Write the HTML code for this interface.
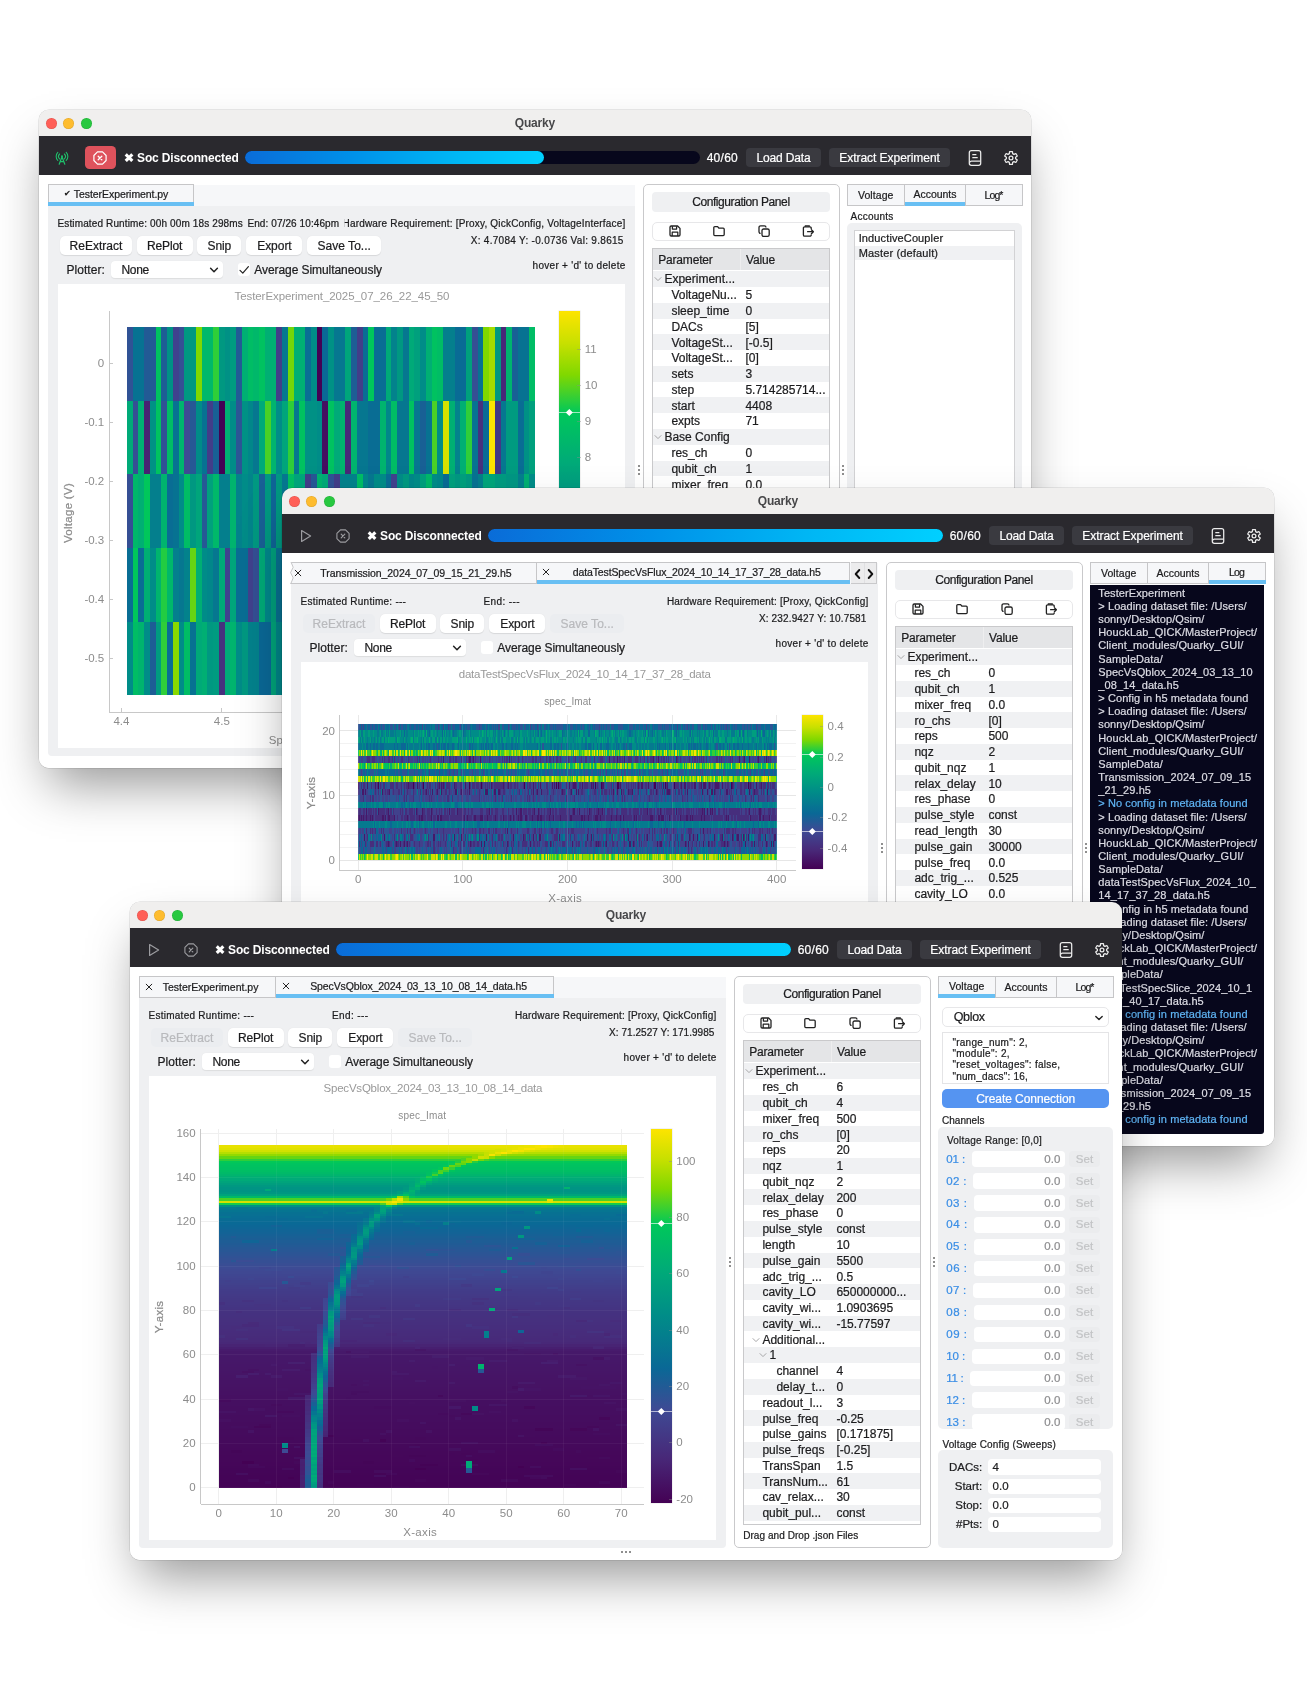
<!DOCTYPE html><html><head><meta charset="utf-8"><title>Quarky</title><style>
html,body{margin:0;padding:0;background:#fff}
body{width:1307px;height:1704px;position:relative;overflow:hidden;font-family:"Liberation Sans",sans-serif}
.win{position:absolute;border-radius:10px;overflow:hidden;will-change:transform}
.sh{position:absolute;border-radius:10px;box-shadow:0 26px 48px -10px rgba(0,0,0,.41),0 0 0 0.5px rgba(0,0,0,.16)}
.win div,.win span,.win svg{position:absolute}
.win span{white-space:nowrap;-webkit-text-stroke:0.22px currentColor}
</style></head><body><div class="sh" style="left:39px;top:110px;width:992px;height:657.6px"></div><div class="win" style="left:39px;top:110px;width:992px;height:657.6px"><div style="left:0;top:1px;width:992px;height:657.2px"><div style="left:0.00px;top:-1.00px;width:992.00px;height:25.80px;background:#f0efee"></div><div style="left:6.90px;top:6.90px;width:10.80px;height:10.80px;background:#ff5f57;border-radius:50%;box-shadow:inset 0 0 0 0.5px rgba(0,0,0,.12)"></div><div style="left:24.40px;top:6.90px;width:10.80px;height:10.80px;background:#febc2e;border-radius:50%;box-shadow:inset 0 0 0 0.5px rgba(0,0,0,.12)"></div><div style="left:41.90px;top:6.90px;width:10.80px;height:10.80px;background:#28c840;border-radius:50%;box-shadow:inset 0 0 0 0.5px rgba(0,0,0,.12)"></div><span style="left:475.72px;top:4.32px;font-size:12px;line-height:16px;color:#474749;font-weight:700;-webkit-text-stroke:0;letter-spacing:-0.159px;">Quarky</span><div style="left:0.00px;top:24.80px;width:992.00px;height:38.80px;background:#2a292e"></div><svg style="left:15.40px;top:38.60px" width="16" height="16" viewBox="0 0 16 16"><path d="M5.2 14.2 L8 6.8 L10.8 14.2 M6.3 11.6 H9.7" fill="none" stroke="#1fbf6b" stroke-width="1.2" stroke-linejoin="round" stroke-linecap="round"/><circle cx="8" cy="6.3" r="1" fill="#1fbf6b"/><path d="M5.6 4 a3.4 3.4 0 0 0 0 4.8 M10.4 4 a3.4 3.4 0 0 1 0 4.8 M3.8 2.4 a5.7 5.7 0 0 0 0 8 M12.2 2.4 a5.7 5.7 0 0 1 0 8" fill="none" stroke="#1fbf6b" stroke-width="1.1" stroke-linecap="round"/></svg><div style="left:46.10px;top:35.10px;width:30.80px;height:23.00px;background:#de525c;border-radius:4.5px"></div><svg style="left:53.30px;top:38.60px" width="16" height="16" viewBox="0 0 16 16"><path d="M14.10 10.53 L10.53 14.10 L5.47 14.10 L1.90 10.53 L1.90 5.47 L5.47 1.90 L10.53 1.90 L14.10 5.47 Z" fill="none" stroke="#fff" stroke-width="1.2" stroke-linejoin="round"/><path d="M6.2 6.2 L9.8 9.8 M9.8 6.2 L6.2 9.8" stroke="#fff" stroke-width="1.3" stroke-linecap="round"/></svg><span style="left:85.00px;top:38.72px;font-size:12px;line-height:16px;color:#fff;font-weight:700;-webkit-text-stroke:0;letter-spacing:-0.154px;">✖ Soc Disconnected</span><div style="left:206.00px;top:39.70px;width:454.70px;height:13.00px;background:#07071c;border-radius:6.5px"></div><div style="left:206.00px;top:39.70px;width:299.19px;height:13.00px;background:linear-gradient(to right,#0a6cd8,#0090e8 35%,#00b6f4 70%,#00d0ff);border-radius:6.5px"></div><span style="left:667.70px;top:38.72px;font-size:12px;line-height:16px;color:#fff;letter-spacing:0.254px;">40/60</span><div style="left:707.00px;top:37.00px;width:75.30px;height:19.00px;background:#3a3a40;border-radius:4px"></div><span style="left:717.57px;top:38.72px;font-size:12px;line-height:16px;color:#fff;letter-spacing:-0.153px;">Load Data</span><div style="left:789.80px;top:37.00px;width:121.60px;height:19.00px;background:#3a3a40;border-radius:4px"></div><span style="left:800.33px;top:38.72px;font-size:12px;line-height:16px;color:#fff;letter-spacing:-0.048px;">Extract Experiment</span><svg style="left:928.00px;top:37.60px" width="16" height="18" viewBox="0 0 16 18"><rect x="2.3" y="1.7" width="11.4" height="14.6" rx="2.1" fill="none" stroke="#ececec" stroke-width="1.25"/><path d="M2.6 13.8 a1.9 1.9 0 0 1 1.9 -1.7 H13.6" fill="none" stroke="#ececec" stroke-width="1.2"/><path d="M5.3 5.7 H9.4 M5.3 8.5 H10.7" stroke="#ececec" stroke-width="1.25"/></svg><svg style="left:964.00px;top:38.50px" width="16" height="16" viewBox="0 0 16 16"><path d="M6.34 3.60 L6.56 1.56 L9.44 1.56 L9.66 3.60 L10.98 4.37 L12.86 3.53 L14.30 6.03 L12.64 7.23 L12.64 8.77 L14.30 9.97 L12.86 12.47 L10.98 11.63 L9.66 12.40 L9.44 14.44 L6.56 14.44 L6.34 12.40 L5.02 11.63 L3.14 12.47 L1.70 9.97 L3.36 8.77 L3.36 7.23 L1.70 6.03 L3.14 3.53 L5.02 4.37 Z" fill="none" stroke="#ececec" stroke-width="1.25" stroke-linejoin="round"/><circle cx="8" cy="8" r="1.9" fill="none" stroke="#ececec" stroke-width="1.25"/></svg><div style="left:0.00px;top:63.60px;width:992.00px;height:594.20px;background:#fff"></div><div style="left:8.70px;top:73.50px;width:587.60px;height:571.00px;background:#eff0f2;border-radius:0 0 4px 4px"></div><div style="left:8.70px;top:73.50px;width:587.60px;height:21.50px;background:#f6f7f9"></div><div style="left:8.80px;top:73.20px;width:146.70px;height:21.70px;background:#f6f7f9;border:1px solid #c6c6c8;box-sizing:border-box"></div><div style="left:9.30px;top:91.20px;width:146.20px;height:3.70px;background:#68bff3"></div><span style="left:25.00px;top:78.08px;font-size:8px;line-height:10px;color:#111;">✔</span><span style="left:34.80px;top:76.11px;font-size:10.5px;line-height:14px;color:#1c1c1e;letter-spacing:-0.064px;">TesterExperiment.py</span><span style="left:18.50px;top:105.80px;font-size:10px;line-height:13px;color:#1c1c1e;letter-spacing:0.132px;">Estimated Runtime: 00h 00m 18s 298ms</span><span style="left:208.40px;top:105.80px;font-size:10px;line-height:13px;color:#1c1c1e;letter-spacing:0.096px;">End: 07/26 10:46pm</span><span style="left:303.49px;top:105.80px;font-size:10px;line-height:13px;color:#1c1c1e;letter-spacing:0.193px;clip-path:inset(0 0 0 2.2px);">Hardware Requirement: [Proxy, QickConfig, VoltageInterface]</span><div style="left:20.60px;top:125.40px;width:72.70px;height:18.40px;background:#fff;border-radius:5px;box-shadow:0 0.5px 1px rgba(0,0,0,.10);"></div><span style="left:30.47px;top:126.72px;font-size:12px;line-height:16px;color:#1c1c1e;letter-spacing:0.035px;">ReExtract</span><div style="left:97.70px;top:125.40px;width:55.90px;height:18.40px;background:#fff;border-radius:5px;box-shadow:0 0.5px 1px rgba(0,0,0,.10);"></div><span style="left:108.07px;top:126.72px;font-size:12px;line-height:16px;color:#1c1c1e;letter-spacing:-0.170px;">RePlot</span><div style="left:158.20px;top:125.40px;width:44.30px;height:18.40px;background:#fff;border-radius:5px;box-shadow:0 0.5px 1px rgba(0,0,0,.10);"></div><span style="left:168.54px;top:126.72px;font-size:12px;line-height:16px;color:#1c1c1e;letter-spacing:-0.130px;">Snip</span><div style="left:207.40px;top:125.40px;width:56.10px;height:18.40px;background:#fff;border-radius:5px;box-shadow:0 0.5px 1px rgba(0,0,0,.10);"></div><span style="left:218.18px;top:126.72px;font-size:12px;line-height:16px;color:#1c1c1e;letter-spacing:-0.030px;">Export</span><div style="left:267.90px;top:125.40px;width:74.60px;height:18.40px;background:#fff;border-radius:5px;box-shadow:0 0.5px 1px rgba(0,0,0,.10);"></div><span style="left:278.47px;top:126.72px;font-size:12px;line-height:16px;color:#1c1c1e;letter-spacing:0.035px;">Save To...</span><span style="left:431.69px;top:123.40px;font-size:10px;line-height:13px;color:#1c1c1e;letter-spacing:0.293px;">X: 4.7084 Y: -0.0736 Val: 9.8615</span><span style="left:27.50px;top:150.82px;font-size:12px;line-height:16px;color:#1c1c1e;letter-spacing:0.048px;">Plotter:</span><div style="left:72.00px;top:150.00px;width:112.20px;height:16.60px;background:#fff;border-radius:4px;box-shadow:0 0.5px 1px rgba(0,0,0,.08)"></div><span style="left:82.50px;top:150.82px;font-size:12px;line-height:16px;color:#1c1c1e;letter-spacing:-0.297px;">None</span><svg style="left:168.50px;top:154.00px" width="12" height="10" viewBox="0 0 12 10"><path d="M2.6 3.3 L6 6.7 L9.4 3.3" fill="none" stroke="#222" stroke-width="1.5" stroke-linecap="round" stroke-linejoin="round"/></svg><div style="left:198.70px;top:152.00px;width:12.80px;height:13.00px;background:#fff;border-radius:3px"></div><svg style="left:199.30px;top:152.50px" width="12" height="12" viewBox="0 0 12 12"><path d="M2 6.4 L4.8 9.2 L10.4 2.6" fill="none" stroke="#222" stroke-width="1.2" stroke-linecap="round" stroke-linejoin="round"/></svg><span style="left:215.30px;top:150.82px;font-size:12px;line-height:16px;color:#1c1c1e;letter-spacing:-0.072px;">Average Simultaneously</span><span style="left:493.59px;top:148.10px;font-size:10px;line-height:13px;color:#1c1c1e;letter-spacing:0.289px;">hover + 'd' to delete</span><div style="left:18.90px;top:172.80px;width:567.60px;height:464.40px;background:#fff"></div><span style="left:195.47px;top:178.42px;font-size:11.5px;line-height:15px;color:#999;letter-spacing:-0.067px;-webkit-text-stroke:0;">TesterExperiment_2025_07_26_22_45_50</span><svg style="left:88.2px;top:216.3px" width="408.0" height="368.2" shape-rendering="crispEdges"><rect x="0.00" y="0.00" width="5.90" height="73.79" fill="#305295"/><rect x="5.75" y="0.00" width="5.90" height="73.79" fill="#077292"/><rect x="11.49" y="0.00" width="5.90" height="73.79" fill="#077292"/><rect x="17.24" y="0.00" width="5.90" height="73.79" fill="#225a95"/><rect x="22.99" y="0.00" width="5.90" height="73.79" fill="#225a95"/><rect x="28.73" y="0.00" width="5.90" height="73.79" fill="#00c260"/><rect x="34.48" y="0.00" width="5.90" height="73.79" fill="#1d5d95"/><rect x="40.23" y="0.00" width="5.90" height="73.79" fill="#009185"/><rect x="45.97" y="0.00" width="5.90" height="73.79" fill="#40428e"/><rect x="51.72" y="0.00" width="5.90" height="73.79" fill="#354f94"/><rect x="57.46" y="0.00" width="5.90" height="73.79" fill="#009881"/><rect x="63.21" y="0.00" width="5.90" height="73.79" fill="#009881"/><rect x="68.96" y="0.00" width="5.90" height="73.79" fill="#80d800"/><rect x="74.70" y="0.00" width="5.90" height="73.79" fill="#00b86a"/><rect x="80.45" y="0.00" width="5.90" height="73.79" fill="#00b86a"/><rect x="86.20" y="0.00" width="5.90" height="73.79" fill="#2fce39"/><rect x="91.94" y="0.00" width="5.90" height="73.79" fill="#009881"/><rect x="97.69" y="0.00" width="5.90" height="73.79" fill="#009185"/><rect x="103.44" y="0.00" width="5.90" height="73.79" fill="#009b80"/><rect x="109.18" y="0.00" width="5.90" height="73.79" fill="#225a95"/><rect x="114.93" y="0.00" width="5.90" height="73.79" fill="#00af73"/><rect x="120.68" y="0.00" width="5.90" height="73.79" fill="#00bd65"/><rect x="126.42" y="0.00" width="5.90" height="73.79" fill="#00b86a"/><rect x="132.17" y="0.00" width="5.90" height="73.79" fill="#00c260"/><rect x="137.92" y="0.00" width="5.90" height="73.79" fill="#00af73"/><rect x="143.66" y="0.00" width="5.90" height="73.79" fill="#00af73"/><rect x="149.41" y="0.00" width="5.90" height="73.79" fill="#423d89"/><rect x="155.15" y="0.00" width="5.90" height="73.79" fill="#067790"/><rect x="160.90" y="0.00" width="5.90" height="73.79" fill="#73d609"/><rect x="166.65" y="0.00" width="5.90" height="73.79" fill="#00af73"/><rect x="172.39" y="0.00" width="5.90" height="73.79" fill="#00af73"/><rect x="178.14" y="0.00" width="5.90" height="73.79" fill="#096d94"/><rect x="183.89" y="0.00" width="5.90" height="73.79" fill="#008c88"/><rect x="189.63" y="0.00" width="5.90" height="73.79" fill="#440154"/><rect x="195.38" y="0.00" width="5.90" height="73.79" fill="#0a6896"/><rect x="201.13" y="0.00" width="5.90" height="73.79" fill="#009185"/><rect x="206.87" y="0.00" width="5.90" height="73.79" fill="#067790"/><rect x="212.62" y="0.00" width="5.90" height="73.79" fill="#067790"/><rect x="218.37" y="0.00" width="5.90" height="73.79" fill="#00a57b"/><rect x="224.11" y="0.00" width="5.90" height="73.79" fill="#1d5d95"/><rect x="229.86" y="0.00" width="5.90" height="73.79" fill="#423d89"/><rect x="235.61" y="0.00" width="5.90" height="73.79" fill="#096d94"/><rect x="241.35" y="0.00" width="5.90" height="73.79" fill="#00c75b"/><rect x="247.10" y="0.00" width="5.90" height="73.79" fill="#096d94"/><rect x="252.85" y="0.00" width="5.90" height="73.79" fill="#096d94"/><rect x="258.59" y="0.00" width="5.90" height="73.79" fill="#00aa78"/><rect x="264.34" y="0.00" width="5.90" height="73.79" fill="#03828c"/><rect x="270.08" y="0.00" width="5.90" height="73.79" fill="#009881"/><rect x="275.83" y="0.00" width="5.90" height="73.79" fill="#067790"/><rect x="281.58" y="0.00" width="5.90" height="73.79" fill="#00aa78"/><rect x="287.32" y="0.00" width="5.90" height="73.79" fill="#00a07d"/><rect x="293.07" y="0.00" width="5.90" height="73.79" fill="#008c88"/><rect x="298.82" y="0.00" width="5.90" height="73.79" fill="#00af73"/><rect x="304.56" y="0.00" width="5.90" height="73.79" fill="#00c260"/><rect x="310.31" y="0.00" width="5.90" height="73.79" fill="#00bd65"/><rect x="316.06" y="0.00" width="5.90" height="73.79" fill="#047f8d"/><rect x="321.80" y="0.00" width="5.90" height="73.79" fill="#047f8d"/><rect x="327.55" y="0.00" width="5.90" height="73.79" fill="#096b95"/><rect x="333.30" y="0.00" width="5.90" height="73.79" fill="#096b95"/><rect x="339.04" y="0.00" width="5.90" height="73.79" fill="#00a07d"/><rect x="344.79" y="0.00" width="5.90" height="73.79" fill="#354f94"/><rect x="350.54" y="0.00" width="5.90" height="73.79" fill="#077292"/><rect x="356.28" y="0.00" width="5.90" height="73.79" fill="#80d800"/><rect x="362.03" y="0.00" width="5.90" height="73.79" fill="#a4dc00"/><rect x="367.77" y="0.00" width="5.90" height="73.79" fill="#009881"/><rect x="373.52" y="0.00" width="5.90" height="73.79" fill="#482878"/><rect x="379.27" y="0.00" width="5.90" height="73.79" fill="#00b46e"/><rect x="385.01" y="0.00" width="5.90" height="73.79" fill="#186095"/><rect x="390.76" y="0.00" width="5.90" height="73.79" fill="#077292"/><rect x="396.51" y="0.00" width="5.90" height="73.79" fill="#077292"/><rect x="402.25" y="0.00" width="5.90" height="73.79" fill="#00bd65"/><rect x="0.00" y="73.64" width="5.90" height="73.79" fill="#00aa78"/><rect x="5.75" y="73.64" width="5.90" height="73.79" fill="#354f94"/><rect x="11.49" y="73.64" width="5.90" height="73.79" fill="#00af73"/><rect x="17.24" y="73.64" width="5.90" height="73.79" fill="#472272"/><rect x="22.99" y="73.64" width="5.90" height="73.79" fill="#009185"/><rect x="28.73" y="73.64" width="5.90" height="73.79" fill="#00c260"/><rect x="34.48" y="73.64" width="5.90" height="73.79" fill="#305295"/><rect x="40.23" y="73.64" width="5.90" height="73.79" fill="#00bd65"/><rect x="45.97" y="73.64" width="5.90" height="73.79" fill="#077292"/><rect x="51.72" y="73.64" width="5.90" height="73.79" fill="#00b46e"/><rect x="57.46" y="73.64" width="5.90" height="73.79" fill="#3e4a94"/><rect x="63.21" y="73.64" width="5.90" height="73.79" fill="#265895"/><rect x="68.96" y="73.64" width="5.90" height="73.79" fill="#008c88"/><rect x="74.70" y="73.64" width="5.90" height="73.79" fill="#077292"/><rect x="80.45" y="73.64" width="5.90" height="73.79" fill="#423d89"/><rect x="86.20" y="73.64" width="5.90" height="73.79" fill="#186095"/><rect x="91.94" y="73.64" width="5.90" height="73.79" fill="#440154"/><rect x="97.69" y="73.64" width="5.90" height="73.79" fill="#00af73"/><rect x="103.44" y="73.64" width="5.90" height="73.79" fill="#008c88"/><rect x="109.18" y="73.64" width="5.90" height="73.79" fill="#2b5595"/><rect x="114.93" y="73.64" width="5.90" height="73.79" fill="#009185"/><rect x="120.68" y="73.64" width="5.90" height="73.79" fill="#01878a"/><rect x="126.42" y="73.64" width="5.90" height="73.79" fill="#067790"/><rect x="132.17" y="73.64" width="5.90" height="73.79" fill="#00aa78"/><rect x="137.92" y="73.64" width="5.90" height="73.79" fill="#4ad126"/><rect x="143.66" y="73.64" width="5.90" height="73.79" fill="#00b46e"/><rect x="149.41" y="73.64" width="5.90" height="73.79" fill="#008c88"/><rect x="155.15" y="73.64" width="5.90" height="73.79" fill="#00a57b"/><rect x="160.90" y="73.64" width="5.90" height="73.79" fill="#2fce39"/><rect x="166.65" y="73.64" width="5.90" height="73.79" fill="#067790"/><rect x="172.39" y="73.64" width="5.90" height="73.79" fill="#00c260"/><rect x="178.14" y="73.64" width="5.90" height="73.79" fill="#009185"/><rect x="183.89" y="73.64" width="5.90" height="73.79" fill="#009185"/><rect x="189.63" y="73.64" width="5.90" height="73.79" fill="#008c88"/><rect x="195.38" y="73.64" width="5.90" height="73.79" fill="#450e60"/><rect x="201.13" y="73.64" width="5.90" height="73.79" fill="#00c260"/><rect x="206.87" y="73.64" width="5.90" height="73.79" fill="#00aa78"/><rect x="212.62" y="73.64" width="5.90" height="73.79" fill="#00b46e"/><rect x="218.37" y="73.64" width="5.90" height="73.79" fill="#482878"/><rect x="224.11" y="73.64" width="5.90" height="73.79" fill="#00b46e"/><rect x="229.86" y="73.64" width="5.90" height="73.79" fill="#067790"/><rect x="235.61" y="73.64" width="5.90" height="73.79" fill="#067790"/><rect x="241.35" y="73.64" width="5.90" height="73.79" fill="#096d94"/><rect x="247.10" y="73.64" width="5.90" height="73.79" fill="#096d94"/><rect x="252.85" y="73.64" width="5.90" height="73.79" fill="#00b46e"/><rect x="258.59" y="73.64" width="5.90" height="73.79" fill="#01878a"/><rect x="264.34" y="73.64" width="5.90" height="73.79" fill="#00bd65"/><rect x="270.08" y="73.64" width="5.90" height="73.79" fill="#067790"/><rect x="275.83" y="73.64" width="5.90" height="73.79" fill="#067790"/><rect x="281.58" y="73.64" width="5.90" height="73.79" fill="#00c260"/><rect x="287.32" y="73.64" width="5.90" height="73.79" fill="#067790"/><rect x="293.07" y="73.64" width="5.90" height="73.79" fill="#186095"/><rect x="298.82" y="73.64" width="5.90" height="73.79" fill="#077292"/><rect x="304.56" y="73.64" width="5.90" height="73.79" fill="#4ad126"/><rect x="310.31" y="73.64" width="5.90" height="73.79" fill="#008c88"/><rect x="316.06" y="73.64" width="5.90" height="73.79" fill="#d5e100"/><rect x="321.80" y="73.64" width="5.90" height="73.79" fill="#00af73"/><rect x="327.55" y="73.64" width="5.90" height="73.79" fill="#03828c"/><rect x="333.30" y="73.64" width="5.90" height="73.79" fill="#00af73"/><rect x="339.04" y="73.64" width="5.90" height="73.79" fill="#2fce39"/><rect x="344.79" y="73.64" width="5.90" height="73.79" fill="#077292"/><rect x="350.54" y="73.64" width="5.90" height="73.79" fill="#46307e"/><rect x="356.28" y="73.64" width="5.90" height="73.79" fill="#096b95"/><rect x="362.03" y="73.64" width="5.90" height="73.79" fill="#fde400"/><rect x="367.77" y="73.64" width="5.90" height="73.79" fill="#433885"/><rect x="373.52" y="73.64" width="5.90" height="73.79" fill="#067790"/><rect x="379.27" y="73.64" width="5.90" height="73.79" fill="#009b80"/><rect x="385.01" y="73.64" width="5.90" height="73.79" fill="#009b80"/><rect x="390.76" y="73.64" width="5.90" height="73.79" fill="#096d94"/><rect x="396.51" y="73.64" width="5.90" height="73.79" fill="#009185"/><rect x="402.25" y="73.64" width="5.90" height="73.79" fill="#00a07d"/><rect x="0.00" y="147.28" width="5.90" height="73.79" fill="#354f94"/><rect x="5.75" y="147.28" width="5.90" height="73.79" fill="#00b86a"/><rect x="11.49" y="147.28" width="5.90" height="73.79" fill="#00af73"/><rect x="17.24" y="147.28" width="5.90" height="73.79" fill="#00c75b"/><rect x="22.99" y="147.28" width="5.90" height="73.79" fill="#047f8d"/><rect x="28.73" y="147.28" width="5.90" height="73.79" fill="#047f8d"/><rect x="34.48" y="147.28" width="5.90" height="73.79" fill="#00b46e"/><rect x="40.23" y="147.28" width="5.90" height="73.79" fill="#096d94"/><rect x="45.97" y="147.28" width="5.90" height="73.79" fill="#077292"/><rect x="51.72" y="147.28" width="5.90" height="73.79" fill="#008c88"/><rect x="57.46" y="147.28" width="5.90" height="73.79" fill="#00bd65"/><rect x="63.21" y="147.28" width="5.90" height="73.79" fill="#009881"/><rect x="68.96" y="147.28" width="5.90" height="73.79" fill="#00a57b"/><rect x="74.70" y="147.28" width="5.90" height="73.79" fill="#265895"/><rect x="80.45" y="147.28" width="5.90" height="73.79" fill="#00a07d"/><rect x="86.20" y="147.28" width="5.90" height="73.79" fill="#00b86a"/><rect x="91.94" y="147.28" width="5.90" height="73.79" fill="#047f8d"/><rect x="97.69" y="147.28" width="5.90" height="73.79" fill="#047f8d"/><rect x="103.44" y="147.28" width="5.90" height="73.79" fill="#00b46e"/><rect x="109.18" y="147.28" width="5.90" height="73.79" fill="#03828c"/><rect x="114.93" y="147.28" width="5.90" height="73.79" fill="#008c88"/><rect x="120.68" y="147.28" width="5.90" height="73.79" fill="#02848b"/><rect x="126.42" y="147.28" width="5.90" height="73.79" fill="#009881"/><rect x="132.17" y="147.28" width="5.90" height="73.79" fill="#186095"/><rect x="137.92" y="147.28" width="5.90" height="73.79" fill="#009881"/><rect x="143.66" y="147.28" width="5.90" height="73.79" fill="#0f6596"/><rect x="149.41" y="147.28" width="5.90" height="73.79" fill="#009881"/><rect x="155.15" y="147.28" width="5.90" height="73.79" fill="#067790"/><rect x="160.90" y="147.28" width="5.90" height="73.79" fill="#00bd65"/><rect x="166.65" y="147.28" width="5.90" height="73.79" fill="#00a57b"/><rect x="172.39" y="147.28" width="5.90" height="73.79" fill="#00a57b"/><rect x="178.14" y="147.28" width="5.90" height="73.79" fill="#423d89"/><rect x="183.89" y="147.28" width="5.90" height="73.79" fill="#265895"/><rect x="189.63" y="147.28" width="5.90" height="73.79" fill="#00b46e"/><rect x="195.38" y="147.28" width="5.90" height="73.79" fill="#00aa78"/><rect x="201.13" y="147.28" width="5.90" height="73.79" fill="#305295"/><rect x="206.87" y="147.28" width="5.90" height="73.79" fill="#423d89"/><rect x="212.62" y="147.28" width="5.90" height="73.79" fill="#03828c"/><rect x="218.37" y="147.28" width="5.90" height="73.79" fill="#03828c"/><rect x="224.11" y="147.28" width="5.90" height="73.79" fill="#03828c"/><rect x="229.86" y="147.28" width="5.90" height="73.79" fill="#00bd65"/><rect x="235.61" y="147.28" width="5.90" height="73.79" fill="#01878a"/><rect x="241.35" y="147.28" width="5.90" height="73.79" fill="#067790"/><rect x="247.10" y="147.28" width="5.90" height="73.79" fill="#008c88"/><rect x="252.85" y="147.28" width="5.90" height="73.79" fill="#008c88"/><rect x="258.59" y="147.28" width="5.90" height="73.79" fill="#096d94"/><rect x="264.34" y="147.28" width="5.90" height="73.79" fill="#40428e"/><rect x="270.08" y="147.28" width="5.90" height="73.79" fill="#008c88"/><rect x="275.83" y="147.28" width="5.90" height="73.79" fill="#009881"/><rect x="281.58" y="147.28" width="5.90" height="73.79" fill="#01878a"/><rect x="287.32" y="147.28" width="5.90" height="73.79" fill="#008c88"/><rect x="293.07" y="147.28" width="5.90" height="73.79" fill="#00a07d"/><rect x="298.82" y="147.28" width="5.90" height="73.79" fill="#00b86a"/><rect x="304.56" y="147.28" width="5.90" height="73.79" fill="#008c88"/><rect x="310.31" y="147.28" width="5.90" height="73.79" fill="#01878a"/><rect x="316.06" y="147.28" width="5.90" height="73.79" fill="#096b95"/><rect x="321.80" y="147.28" width="5.90" height="73.79" fill="#00a07d"/><rect x="327.55" y="147.28" width="5.90" height="73.79" fill="#009881"/><rect x="333.30" y="147.28" width="5.90" height="73.79" fill="#00a07d"/><rect x="339.04" y="147.28" width="5.90" height="73.79" fill="#009881"/><rect x="344.79" y="147.28" width="5.90" height="73.79" fill="#077292"/><rect x="350.54" y="147.28" width="5.90" height="73.79" fill="#047f8d"/><rect x="356.28" y="147.28" width="5.90" height="73.79" fill="#00a57b"/><rect x="362.03" y="147.28" width="5.90" height="73.79" fill="#00a57b"/><rect x="367.77" y="147.28" width="5.90" height="73.79" fill="#009b80"/><rect x="373.52" y="147.28" width="5.90" height="73.79" fill="#009b80"/><rect x="379.27" y="147.28" width="5.90" height="73.79" fill="#009683"/><rect x="385.01" y="147.28" width="5.90" height="73.79" fill="#009683"/><rect x="390.76" y="147.28" width="5.90" height="73.79" fill="#047f8d"/><rect x="396.51" y="147.28" width="5.90" height="73.79" fill="#00af73"/><rect x="402.25" y="147.28" width="5.90" height="73.79" fill="#008c88"/><rect x="0.00" y="220.92" width="5.90" height="73.79" fill="#096d94"/><rect x="5.75" y="220.92" width="5.90" height="73.79" fill="#00c75b"/><rect x="11.49" y="220.92" width="5.90" height="73.79" fill="#096d94"/><rect x="17.24" y="220.92" width="5.90" height="73.79" fill="#00af73"/><rect x="22.99" y="220.92" width="5.90" height="73.79" fill="#008c88"/><rect x="28.73" y="220.92" width="5.90" height="73.79" fill="#00b46e"/><rect x="34.48" y="220.92" width="5.90" height="73.79" fill="#22cc42"/><rect x="40.23" y="220.92" width="5.90" height="73.79" fill="#00b86a"/><rect x="45.97" y="220.92" width="5.90" height="73.79" fill="#047f8d"/><rect x="51.72" y="220.92" width="5.90" height="73.79" fill="#067790"/><rect x="57.46" y="220.92" width="5.90" height="73.79" fill="#03828c"/><rect x="63.21" y="220.92" width="5.90" height="73.79" fill="#65d513"/><rect x="68.96" y="220.92" width="5.90" height="73.79" fill="#00af73"/><rect x="74.70" y="220.92" width="5.90" height="73.79" fill="#008c88"/><rect x="80.45" y="220.92" width="5.90" height="73.79" fill="#01878a"/><rect x="86.20" y="220.92" width="5.90" height="73.79" fill="#067790"/><rect x="91.94" y="220.92" width="5.90" height="73.79" fill="#00aa78"/><rect x="97.69" y="220.92" width="5.90" height="73.79" fill="#40428e"/><rect x="103.44" y="220.92" width="5.90" height="73.79" fill="#00a57b"/><rect x="109.18" y="220.92" width="5.90" height="73.79" fill="#096d94"/><rect x="114.93" y="220.92" width="5.90" height="73.79" fill="#096d94"/><rect x="120.68" y="220.92" width="5.90" height="73.79" fill="#40428e"/><rect x="126.42" y="220.92" width="5.90" height="73.79" fill="#354f94"/><rect x="132.17" y="220.92" width="5.90" height="73.79" fill="#00aa78"/><rect x="137.92" y="220.92" width="5.90" height="73.79" fill="#01878a"/><rect x="143.66" y="220.92" width="5.90" height="73.79" fill="#00a07d"/><rect x="149.41" y="220.92" width="5.90" height="73.79" fill="#077292"/><rect x="155.15" y="220.92" width="5.90" height="73.79" fill="#00b86a"/><rect x="160.90" y="220.92" width="5.90" height="73.79" fill="#265895"/><rect x="166.65" y="220.92" width="5.90" height="73.79" fill="#00b86a"/><rect x="172.39" y="220.92" width="5.90" height="73.79" fill="#00b86a"/><rect x="178.14" y="220.92" width="5.90" height="73.79" fill="#265895"/><rect x="183.89" y="220.92" width="5.90" height="73.79" fill="#00bd65"/><rect x="189.63" y="220.92" width="5.90" height="73.79" fill="#008c88"/><rect x="195.38" y="220.92" width="5.90" height="73.79" fill="#047f8d"/><rect x="201.13" y="220.92" width="5.90" height="73.79" fill="#265895"/><rect x="206.87" y="220.92" width="5.90" height="73.79" fill="#00b86a"/><rect x="212.62" y="220.92" width="5.90" height="73.79" fill="#00bd65"/><rect x="218.37" y="220.92" width="5.90" height="73.79" fill="#047f8d"/><rect x="224.11" y="220.92" width="5.90" height="73.79" fill="#067790"/><rect x="229.86" y="220.92" width="5.90" height="73.79" fill="#00b86a"/><rect x="235.61" y="220.92" width="5.90" height="73.79" fill="#009881"/><rect x="241.35" y="220.92" width="5.90" height="73.79" fill="#047f8d"/><rect x="247.10" y="220.92" width="5.90" height="73.79" fill="#067790"/><rect x="252.85" y="220.92" width="5.90" height="73.79" fill="#265895"/><rect x="258.59" y="220.92" width="5.90" height="73.79" fill="#096d94"/><rect x="264.34" y="220.92" width="5.90" height="73.79" fill="#00bd65"/><rect x="270.08" y="220.92" width="5.90" height="73.79" fill="#00af73"/><rect x="275.83" y="220.92" width="5.90" height="73.79" fill="#00b86a"/><rect x="281.58" y="220.92" width="5.90" height="73.79" fill="#00bd65"/><rect x="287.32" y="220.92" width="5.90" height="73.79" fill="#047f8d"/><rect x="293.07" y="220.92" width="5.90" height="73.79" fill="#00bd65"/><rect x="298.82" y="220.92" width="5.90" height="73.79" fill="#096d94"/><rect x="304.56" y="220.92" width="5.90" height="73.79" fill="#265895"/><rect x="310.31" y="220.92" width="5.90" height="73.79" fill="#067790"/><rect x="316.06" y="220.92" width="5.90" height="73.79" fill="#096d94"/><rect x="321.80" y="220.92" width="5.90" height="73.79" fill="#096d94"/><rect x="327.55" y="220.92" width="5.90" height="73.79" fill="#008c88"/><rect x="333.30" y="220.92" width="5.90" height="73.79" fill="#008c88"/><rect x="339.04" y="220.92" width="5.90" height="73.79" fill="#00bd65"/><rect x="344.79" y="220.92" width="5.90" height="73.79" fill="#096d94"/><rect x="350.54" y="220.92" width="5.90" height="73.79" fill="#00b86a"/><rect x="356.28" y="220.92" width="5.90" height="73.79" fill="#00a57b"/><rect x="362.03" y="220.92" width="5.90" height="73.79" fill="#00b86a"/><rect x="367.77" y="220.92" width="5.90" height="73.79" fill="#00bd65"/><rect x="373.52" y="220.92" width="5.90" height="73.79" fill="#008c88"/><rect x="379.27" y="220.92" width="5.90" height="73.79" fill="#265895"/><rect x="385.01" y="220.92" width="5.90" height="73.79" fill="#008c88"/><rect x="390.76" y="220.92" width="5.90" height="73.79" fill="#009881"/><rect x="396.51" y="220.92" width="5.90" height="73.79" fill="#00b86a"/><rect x="402.25" y="220.92" width="5.90" height="73.79" fill="#096d94"/><rect x="0.00" y="294.56" width="5.90" height="73.79" fill="#008c88"/><rect x="5.75" y="294.56" width="5.90" height="73.79" fill="#00bd65"/><rect x="11.49" y="294.56" width="5.90" height="73.79" fill="#00b46e"/><rect x="17.24" y="294.56" width="5.90" height="73.79" fill="#008c88"/><rect x="22.99" y="294.56" width="5.90" height="73.79" fill="#1d5d95"/><rect x="28.73" y="294.56" width="5.90" height="73.79" fill="#009b80"/><rect x="34.48" y="294.56" width="5.90" height="73.79" fill="#2fce39"/><rect x="40.23" y="294.56" width="5.90" height="73.79" fill="#096d94"/><rect x="45.97" y="294.56" width="5.90" height="73.79" fill="#89d900"/><rect x="51.72" y="294.56" width="5.90" height="73.79" fill="#008c88"/><rect x="57.46" y="294.56" width="5.90" height="73.79" fill="#00bd65"/><rect x="63.21" y="294.56" width="5.90" height="73.79" fill="#077292"/><rect x="68.96" y="294.56" width="5.90" height="73.79" fill="#00aa78"/><rect x="74.70" y="294.56" width="5.90" height="73.79" fill="#00af73"/><rect x="80.45" y="294.56" width="5.90" height="73.79" fill="#009881"/><rect x="86.20" y="294.56" width="5.90" height="73.79" fill="#009b80"/><rect x="91.94" y="294.56" width="5.90" height="73.79" fill="#46307e"/><rect x="97.69" y="294.56" width="5.90" height="73.79" fill="#00aa78"/><rect x="103.44" y="294.56" width="5.90" height="73.79" fill="#00b46e"/><rect x="109.18" y="294.56" width="5.90" height="73.79" fill="#008c88"/><rect x="114.93" y="294.56" width="5.90" height="73.79" fill="#009881"/><rect x="120.68" y="294.56" width="5.90" height="73.79" fill="#03828c"/><rect x="126.42" y="294.56" width="5.90" height="73.79" fill="#03828c"/><rect x="132.17" y="294.56" width="5.90" height="73.79" fill="#0a6896"/><rect x="137.92" y="294.56" width="5.90" height="73.79" fill="#0a6896"/><rect x="143.66" y="294.56" width="5.90" height="73.79" fill="#00a57b"/><rect x="149.41" y="294.56" width="5.90" height="73.79" fill="#01878a"/><rect x="155.15" y="294.56" width="5.90" height="73.79" fill="#067790"/><rect x="160.90" y="294.56" width="5.90" height="73.79" fill="#00b86a"/><rect x="166.65" y="294.56" width="5.90" height="73.79" fill="#009881"/><rect x="172.39" y="294.56" width="5.90" height="73.79" fill="#00af73"/><rect x="178.14" y="294.56" width="5.90" height="73.79" fill="#265895"/><rect x="183.89" y="294.56" width="5.90" height="73.79" fill="#067790"/><rect x="189.63" y="294.56" width="5.90" height="73.79" fill="#009881"/><rect x="195.38" y="294.56" width="5.90" height="73.79" fill="#00a57b"/><rect x="201.13" y="294.56" width="5.90" height="73.79" fill="#008c88"/><rect x="206.87" y="294.56" width="5.90" height="73.79" fill="#265895"/><rect x="212.62" y="294.56" width="5.90" height="73.79" fill="#009881"/><rect x="218.37" y="294.56" width="5.90" height="73.79" fill="#096d94"/><rect x="224.11" y="294.56" width="5.90" height="73.79" fill="#067790"/><rect x="229.86" y="294.56" width="5.90" height="73.79" fill="#00bd65"/><rect x="235.61" y="294.56" width="5.90" height="73.79" fill="#067790"/><rect x="241.35" y="294.56" width="5.90" height="73.79" fill="#00af73"/><rect x="247.10" y="294.56" width="5.90" height="73.79" fill="#067790"/><rect x="252.85" y="294.56" width="5.90" height="73.79" fill="#009881"/><rect x="258.59" y="294.56" width="5.90" height="73.79" fill="#00af73"/><rect x="264.34" y="294.56" width="5.90" height="73.79" fill="#067790"/><rect x="270.08" y="294.56" width="5.90" height="73.79" fill="#096d94"/><rect x="275.83" y="294.56" width="5.90" height="73.79" fill="#096d94"/><rect x="281.58" y="294.56" width="5.90" height="73.79" fill="#008c88"/><rect x="287.32" y="294.56" width="5.90" height="73.79" fill="#008c88"/><rect x="293.07" y="294.56" width="5.90" height="73.79" fill="#096d94"/><rect x="298.82" y="294.56" width="5.90" height="73.79" fill="#00b86a"/><rect x="304.56" y="294.56" width="5.90" height="73.79" fill="#00af73"/><rect x="310.31" y="294.56" width="5.90" height="73.79" fill="#00af73"/><rect x="316.06" y="294.56" width="5.90" height="73.79" fill="#00af73"/><rect x="321.80" y="294.56" width="5.90" height="73.79" fill="#067790"/><rect x="327.55" y="294.56" width="5.90" height="73.79" fill="#00bd65"/><rect x="333.30" y="294.56" width="5.90" height="73.79" fill="#008c88"/><rect x="339.04" y="294.56" width="5.90" height="73.79" fill="#009881"/><rect x="344.79" y="294.56" width="5.90" height="73.79" fill="#00a57b"/><rect x="350.54" y="294.56" width="5.90" height="73.79" fill="#067790"/><rect x="356.28" y="294.56" width="5.90" height="73.79" fill="#009881"/><rect x="362.03" y="294.56" width="5.90" height="73.79" fill="#00a57b"/><rect x="367.77" y="294.56" width="5.90" height="73.79" fill="#096d94"/><rect x="373.52" y="294.56" width="5.90" height="73.79" fill="#00af73"/><rect x="379.27" y="294.56" width="5.90" height="73.79" fill="#067790"/><rect x="385.01" y="294.56" width="5.90" height="73.79" fill="#047f8d"/><rect x="390.76" y="294.56" width="5.90" height="73.79" fill="#008c88"/><rect x="396.51" y="294.56" width="5.90" height="73.79" fill="#067790"/><rect x="402.25" y="294.56" width="5.90" height="73.79" fill="#096d94"/></svg><div style="left:70.10px;top:252.00px;width:4.00px;height:1.00px;background:#c8c8c8"></div><span style="left:58.80px;top:245.12px;font-size:11.5px;line-height:15px;color:#8c8c8c;-webkit-text-stroke:0;">0</span><div style="left:70.10px;top:310.95px;width:4.00px;height:1.00px;background:#c8c8c8"></div><span style="left:45.38px;top:304.06px;font-size:11.5px;line-height:15px;color:#8c8c8c;-webkit-text-stroke:0;">-0.1</span><div style="left:70.10px;top:369.90px;width:4.00px;height:1.00px;background:#c8c8c8"></div><span style="left:45.38px;top:363.01px;font-size:11.5px;line-height:15px;color:#8c8c8c;-webkit-text-stroke:0;">-0.2</span><div style="left:70.10px;top:428.85px;width:4.00px;height:1.00px;background:#c8c8c8"></div><span style="left:45.38px;top:421.97px;font-size:11.5px;line-height:15px;color:#8c8c8c;-webkit-text-stroke:0;">-0.3</span><div style="left:70.10px;top:487.80px;width:4.00px;height:1.00px;background:#c8c8c8"></div><span style="left:45.38px;top:480.92px;font-size:11.5px;line-height:15px;color:#8c8c8c;-webkit-text-stroke:0;">-0.4</span><div style="left:70.10px;top:546.75px;width:4.00px;height:1.00px;background:#c8c8c8"></div><span style="left:45.38px;top:539.87px;font-size:11.5px;line-height:15px;color:#8c8c8c;-webkit-text-stroke:0;">-0.5</span><div style="left:81.90px;top:596.70px;width:1.00px;height:4.00px;background:#c8c8c8"></div><span style="left:74.41px;top:602.82px;font-size:11.5px;line-height:15px;color:#8c8c8c;-webkit-text-stroke:0;">4.4</span><div style="left:182.30px;top:596.70px;width:1.00px;height:4.00px;background:#c8c8c8"></div><span style="left:174.81px;top:602.82px;font-size:11.5px;line-height:15px;color:#8c8c8c;-webkit-text-stroke:0;">4.5</span><div style="left:282.70px;top:596.70px;width:1.00px;height:4.00px;background:#c8c8c8"></div><span style="left:275.21px;top:602.82px;font-size:11.5px;line-height:15px;color:#8c8c8c;-webkit-text-stroke:0;">4.6</span><div style="left:383.10px;top:596.70px;width:1.00px;height:4.00px;background:#c8c8c8"></div><span style="left:375.61px;top:602.82px;font-size:11.5px;line-height:15px;color:#8c8c8c;-webkit-text-stroke:0;">4.7</span><div style="left:483.50px;top:596.70px;width:1.00px;height:4.00px;background:#c8c8c8"></div><span style="left:476.01px;top:602.82px;font-size:11.5px;line-height:15px;color:#8c8c8c;-webkit-text-stroke:0;">4.8</span><div style="left:69.60px;top:199.50px;width:1.00px;height:401.70px;background:#c8c8c8"></div><div style="left:70.10px;top:600.70px;width:443.90px;height:1.00px;background:#c8c8c8"></div><span style="left:229.80px;top:622.22px;font-size:11.5px;line-height:15px;color:#8c8c8c;letter-spacing:0.120px;-webkit-text-stroke:0;">Spec Frequency (GHz)</span><span style="left:28.5px;top:401.9px;font-size:11.5px;line-height:14px;color:#8c8c8c;transform:translate(-50%,-50%) rotate(-90deg);letter-spacing:0.3px">Voltage (V)</span><div style="left:519.60px;top:199.70px;width:21.90px;height:400.10px;background:linear-gradient(to bottom,#fde400 0.0%,#c8e000 8.0%,#80d800 16.0%,#00c85a 25.5%,#00aa78 38.0%,#008c88 50.0%,#0a6896 64.0%,#3e4a94 75.0%,#482878 88.0%,#440154 100.0%);box-shadow:0 0 0 0.5px rgba(0,0,0,.10)"></div><div style="left:538.00px;top:237.50px;width:3.50px;height:0.80px;background:rgba(140,140,140,.45)"></div><span style="left:545.70px;top:230.52px;font-size:11.5px;line-height:15px;color:#8c8c8c;-webkit-text-stroke:0;">11</span><div style="left:538.00px;top:273.70px;width:3.50px;height:0.80px;background:rgba(140,140,140,.45)"></div><span style="left:545.70px;top:266.72px;font-size:11.5px;line-height:15px;color:#8c8c8c;-webkit-text-stroke:0;">10</span><div style="left:538.00px;top:309.90px;width:3.50px;height:0.80px;background:rgba(140,140,140,.45)"></div><span style="left:545.70px;top:302.92px;font-size:11.5px;line-height:15px;color:#8c8c8c;-webkit-text-stroke:0;">9</span><div style="left:538.00px;top:346.10px;width:3.50px;height:0.80px;background:rgba(140,140,140,.45)"></div><span style="left:545.70px;top:339.12px;font-size:11.5px;line-height:15px;color:#8c8c8c;-webkit-text-stroke:0;">8</span><div style="left:538.00px;top:382.30px;width:3.50px;height:0.80px;background:rgba(140,140,140,.45)"></div><span style="left:545.70px;top:375.32px;font-size:11.5px;line-height:15px;color:#8c8c8c;-webkit-text-stroke:0;">7</span><div style="left:538.00px;top:418.50px;width:3.50px;height:0.80px;background:rgba(140,140,140,.45)"></div><span style="left:545.70px;top:411.51px;font-size:11.5px;line-height:15px;color:#8c8c8c;-webkit-text-stroke:0;">6</span><div style="left:538.00px;top:454.70px;width:3.50px;height:0.80px;background:rgba(140,140,140,.45)"></div><span style="left:545.70px;top:447.72px;font-size:11.5px;line-height:15px;color:#8c8c8c;-webkit-text-stroke:0;">5</span><div style="left:538.00px;top:490.90px;width:3.50px;height:0.80px;background:rgba(140,140,140,.45)"></div><span style="left:545.70px;top:483.92px;font-size:11.5px;line-height:15px;color:#8c8c8c;-webkit-text-stroke:0;">4</span><div style="left:538.00px;top:527.10px;width:3.50px;height:0.80px;background:rgba(140,140,140,.45)"></div><span style="left:545.70px;top:520.12px;font-size:11.5px;line-height:15px;color:#8c8c8c;-webkit-text-stroke:0;">3</span><div style="left:538.00px;top:563.30px;width:3.50px;height:0.80px;background:rgba(140,140,140,.45)"></div><span style="left:545.70px;top:556.32px;font-size:11.5px;line-height:15px;color:#8c8c8c;-webkit-text-stroke:0;">2</span><div style="left:519.60px;top:301.10px;width:21.90px;height:0.80px;background:rgba(255,255,255,.62)"></div><div style="left:528.25px;top:299.20px;width:4.60px;height:4.60px;background:#fff;transform:rotate(45deg)"></div><div style="left:519.60px;top:519.60px;width:21.90px;height:0.80px;background:rgba(255,255,255,.62)"></div><div style="left:528.25px;top:517.70px;width:4.60px;height:4.60px;background:#fff;transform:rotate(45deg)"></div><div style="left:598.60px;top:353.50px;width:2.00px;height:2.00px;background:#6a6a6a;border-radius:1px"></div><div style="left:598.60px;top:357.50px;width:2.00px;height:2.00px;background:#6a6a6a;border-radius:1px"></div><div style="left:598.60px;top:361.50px;width:2.00px;height:2.00px;background:#6a6a6a;border-radius:1px"></div><div style="left:803.40px;top:353.50px;width:2.00px;height:2.00px;background:#6a6a6a;border-radius:1px"></div><div style="left:803.40px;top:357.50px;width:2.00px;height:2.00px;background:#6a6a6a;border-radius:1px"></div><div style="left:803.40px;top:361.50px;width:2.00px;height:2.00px;background:#6a6a6a;border-radius:1px"></div><div style="left:491.00px;top:648.30px;width:2.00px;height:2.00px;background:#6a6a6a;border-radius:1px"></div><div style="left:495.00px;top:648.30px;width:2.00px;height:2.00px;background:#6a6a6a;border-radius:1px"></div><div style="left:499.00px;top:648.30px;width:2.00px;height:2.00px;background:#6a6a6a;border-radius:1px"></div><div style="left:603.50px;top:73.30px;width:197.00px;height:572.00px;background:#fff;border:1px solid #c9c9cb;border-radius:5px;box-sizing:border-box"></div><div style="left:613.20px;top:81.00px;width:177.80px;height:19.80px;background:#eff0f2;border-radius:4px"></div><span style="left:653.14px;top:83.32px;font-size:12px;line-height:16px;color:#1c1c1e;letter-spacing:-0.416px;">Configuration Panel</span><div style="left:613.20px;top:110.50px;width:177.80px;height:19.00px;background:#fff;border:1px solid #e7e7e9;border-radius:5px;box-sizing:border-box"></div><svg style="left:629.40px;top:113.00px" width="14" height="14" viewBox="0 0 14 14"><path d="M2 3.2 a1.2 1.2 0 0 1 1.2 -1.2 H9.6 L12 4.4 V10.8 a1.2 1.2 0 0 1 -1.2 1.2 H3.2 a1.2 1.2 0 0 1 -1.2 -1.2 Z" fill="none" stroke="#222" stroke-width="1.3" stroke-linejoin="round"/><path d="M4.4 2.2 V5 H8.6 V2.2 M4.2 12 V8.2 H9.8 V12" fill="none" stroke="#222" stroke-width="1.25" stroke-linejoin="round"/></svg><svg style="left:673.00px;top:113.00px" width="14" height="14" viewBox="0 0 14 14"><path d="M1.8 3.6 a1 1 0 0 1 1 -1 H5.6 L7 4.2 H11.2 a1 1 0 0 1 1 1 V10.6 a1 1 0 0 1 -1 1 H2.8 a1 1 0 0 1 -1 -1 Z" fill="none" stroke="#222" stroke-width="1.3" stroke-linejoin="round"/></svg><svg style="left:717.90px;top:113.00px" width="14" height="14" viewBox="0 0 14 14"><rect x="5" y="5" width="7.2" height="7.4" rx="1.6" fill="none" stroke="#222" stroke-width="1.3"/><path d="M3.6 9.4 a1.6 1.6 0 0 1 -1.6 -1.6 V3.4 a1.6 1.6 0 0 1 1.6 -1.6 H7.4 a1.6 1.6 0 0 1 1.6 1.6" fill="none" stroke="#222" stroke-width="1.3"/></svg><svg style="left:761.80px;top:113.00px" width="14" height="14" viewBox="0 0 14 14"><path d="M10.2 5 V4 a1.2 1.2 0 0 0 -1.2 -1.2 H3.6 a1.2 1.2 0 0 0 -1.2 1.2 V11 a1.2 1.2 0 0 0 1.2 1.2 H9 a1.2 1.2 0 0 0 1.2 -1.2 V10.4" fill="none" stroke="#222" stroke-width="1.3"/><path d="M4.4 2.8 V1.8 H8.2 V2.8" fill="none" stroke="#222" stroke-width="1.25"/><path d="M6.6 7.7 H12.4 M10.4 5.7 L12.4 7.7 L10.4 9.7" fill="none" stroke="#222" stroke-width="1.3" stroke-linecap="round" stroke-linejoin="round"/></svg><div style="left:613.20px;top:137.20px;width:177.80px;height:485.30px;background:#fff;border:1px solid #c9c9cb;box-sizing:border-box;overflow:hidden"></div><div style="left:613.70px;top:137.70px;width:176.80px;height:21.50px;background:#e4e5e7"></div><div style="left:701.20px;top:137.70px;width:1.00px;height:21.50px;background:#eeeeef"></div><span style="left:619.20px;top:140.92px;font-size:12px;line-height:16px;color:#1c1c1e;letter-spacing:-0.169px;">Parameter</span><span style="left:707.00px;top:140.92px;font-size:12px;line-height:16px;color:#1c1c1e;letter-spacing:-0.160px;">Value</span><div style="left:613.70px;top:160.20px;width:176.80px;height:15.78px;background:#f0f1f3"></div><svg style="left:614.10px;top:164.39px" width="10" height="8" viewBox="0 0 10 8"><path d="M2 2.6 L5 5.6 L8 2.6" fill="none" stroke="#a6a6a8" stroke-width="1" stroke-linecap="round" stroke-linejoin="round"/></svg><span style="left:625.40px;top:160.41px;font-size:12px;line-height:16px;color:#1c1c1e;">Experiment...</span><span style="left:632.40px;top:176.19px;font-size:12px;line-height:16px;color:#1c1c1e;">VoltageNu...</span><span style="left:706.40px;top:176.19px;font-size:12px;line-height:16px;color:#1c1c1e;">5</span><div style="left:613.70px;top:191.76px;width:176.80px;height:15.78px;background:#f0f1f3"></div><span style="left:632.40px;top:191.97px;font-size:12px;line-height:16px;color:#1c1c1e;">sleep_time</span><span style="left:706.40px;top:191.97px;font-size:12px;line-height:16px;color:#1c1c1e;">0</span><span style="left:632.40px;top:207.75px;font-size:12px;line-height:16px;color:#1c1c1e;">DACs</span><span style="left:706.40px;top:207.75px;font-size:12px;line-height:16px;color:#1c1c1e;">[5]</span><div style="left:613.70px;top:223.32px;width:176.80px;height:15.78px;background:#f0f1f3"></div><span style="left:632.40px;top:223.53px;font-size:12px;line-height:16px;color:#1c1c1e;">VoltageSt...</span><span style="left:706.40px;top:223.53px;font-size:12px;line-height:16px;color:#1c1c1e;">[-0.5]</span><span style="left:632.40px;top:239.31px;font-size:12px;line-height:16px;color:#1c1c1e;">VoltageSt...</span><span style="left:706.40px;top:239.31px;font-size:12px;line-height:16px;color:#1c1c1e;">[0]</span><div style="left:613.70px;top:254.88px;width:176.80px;height:15.78px;background:#f0f1f3"></div><span style="left:632.40px;top:255.09px;font-size:12px;line-height:16px;color:#1c1c1e;">sets</span><span style="left:706.40px;top:255.09px;font-size:12px;line-height:16px;color:#1c1c1e;">3</span><span style="left:632.40px;top:270.87px;font-size:12px;line-height:16px;color:#1c1c1e;">step</span><span style="left:706.40px;top:270.87px;font-size:12px;line-height:16px;color:#1c1c1e;">5.714285714...</span><div style="left:613.70px;top:286.44px;width:176.80px;height:15.78px;background:#f0f1f3"></div><span style="left:632.40px;top:286.65px;font-size:12px;line-height:16px;color:#1c1c1e;">start</span><span style="left:706.40px;top:286.65px;font-size:12px;line-height:16px;color:#1c1c1e;">4408</span><span style="left:632.40px;top:302.43px;font-size:12px;line-height:16px;color:#1c1c1e;">expts</span><span style="left:706.40px;top:302.43px;font-size:12px;line-height:16px;color:#1c1c1e;">71</span><div style="left:613.70px;top:318.00px;width:176.80px;height:15.78px;background:#f0f1f3"></div><svg style="left:614.10px;top:322.19px" width="10" height="8" viewBox="0 0 10 8"><path d="M2 2.6 L5 5.6 L8 2.6" fill="none" stroke="#a6a6a8" stroke-width="1" stroke-linecap="round" stroke-linejoin="round"/></svg><span style="left:625.40px;top:318.21px;font-size:12px;line-height:16px;color:#1c1c1e;">Base Config</span><span style="left:632.40px;top:333.99px;font-size:12px;line-height:16px;color:#1c1c1e;">res_ch</span><span style="left:706.40px;top:333.99px;font-size:12px;line-height:16px;color:#1c1c1e;">0</span><div style="left:613.70px;top:349.56px;width:176.80px;height:15.78px;background:#f0f1f3"></div><span style="left:632.40px;top:349.77px;font-size:12px;line-height:16px;color:#1c1c1e;">qubit_ch</span><span style="left:706.40px;top:349.77px;font-size:12px;line-height:16px;color:#1c1c1e;">1</span><span style="left:632.40px;top:365.55px;font-size:12px;line-height:16px;color:#1c1c1e;">mixer_freq</span><span style="left:706.40px;top:365.55px;font-size:12px;line-height:16px;color:#1c1c1e;">0.0</span><div style="left:613.70px;top:381.12px;width:176.80px;height:15.78px;background:#f0f1f3"></div><span style="left:632.40px;top:381.33px;font-size:12px;line-height:16px;color:#1c1c1e;">ro_chs</span><span style="left:706.40px;top:381.33px;font-size:12px;line-height:16px;color:#1c1c1e;">[0]</span><span style="left:632.40px;top:397.11px;font-size:12px;line-height:16px;color:#1c1c1e;">reps</span><span style="left:706.40px;top:397.11px;font-size:12px;line-height:16px;color:#1c1c1e;">500</span><div style="left:613.70px;top:412.68px;width:176.80px;height:15.78px;background:#f0f1f3"></div><span style="left:632.40px;top:412.89px;font-size:12px;line-height:16px;color:#1c1c1e;">nqz</span><span style="left:706.40px;top:412.89px;font-size:12px;line-height:16px;color:#1c1c1e;">2</span><span style="left:632.40px;top:428.67px;font-size:12px;line-height:16px;color:#1c1c1e;">qubit_nqz</span><span style="left:706.40px;top:428.67px;font-size:12px;line-height:16px;color:#1c1c1e;">1</span><div style="left:613.70px;top:444.24px;width:176.80px;height:15.78px;background:#f0f1f3"></div><span style="left:632.40px;top:444.45px;font-size:12px;line-height:16px;color:#1c1c1e;">relax_delay</span><span style="left:706.40px;top:444.45px;font-size:12px;line-height:16px;color:#1c1c1e;">10</span><span style="left:632.40px;top:460.23px;font-size:12px;line-height:16px;color:#1c1c1e;">res_phase</span><span style="left:706.40px;top:460.23px;font-size:12px;line-height:16px;color:#1c1c1e;">0</span><div style="left:613.70px;top:475.80px;width:176.80px;height:15.78px;background:#f0f1f3"></div><span style="left:632.40px;top:476.01px;font-size:12px;line-height:16px;color:#1c1c1e;">pulse_style</span><span style="left:706.40px;top:476.01px;font-size:12px;line-height:16px;color:#1c1c1e;">const</span><span style="left:613.20px;top:625.60px;font-size:10px;line-height:13px;color:#1c1c1e;letter-spacing:0.065px;">Drag and Drop .json Files</span><div style="left:807.60px;top:73.20px;width:58.20px;height:21.70px;background:#f6f7f9;border:1px solid #c6c6c8;box-sizing:border-box"></div><span style="left:818.98px;top:77.11px;font-size:10.5px;line-height:14px;color:#1c1c1e;letter-spacing:0.067px;">Voltage</span><div style="left:865.40px;top:73.20px;width:61.20px;height:21.70px;background:#f6f7f9;border:1px solid #c6c6c8;box-sizing:border-box"></div><div style="left:865.90px;top:91.20px;width:60.70px;height:3.70px;background:#68bff3"></div><span style="left:874.49px;top:76.11px;font-size:10.5px;line-height:14px;color:#1c1c1e;letter-spacing:-0.024px;">Accounts</span><div style="left:926.20px;top:73.20px;width:57.50px;height:21.70px;background:#f6f7f9;border:1px solid #c6c6c8;box-sizing:border-box"></div><span style="left:945.50px;top:77.11px;font-size:10.5px;line-height:14px;color:#1c1c1e;letter-spacing:-0.901px;">Log*</span><span style="left:811.60px;top:99.10px;font-size:10px;line-height:13px;color:#1c1c1e;letter-spacing:0.233px;">Accounts</span><div style="left:807.60px;top:111.50px;width:175.10px;height:533.00px;background:#eff0f2;border-radius:5px"></div><div style="left:814.60px;top:118.80px;width:161.30px;height:518.00px;background:#fff;border:1px solid #d2d2d4;box-sizing:border-box"></div><div style="left:815.60px;top:134.70px;width:159.30px;height:14.20px;background:#f0f1f3"></div><span style="left:819.70px;top:119.71px;font-size:11px;line-height:14px;color:#1c1c1e;letter-spacing:0.122px;">InductiveCoupler</span><span style="left:819.70px;top:134.71px;font-size:11px;line-height:14px;color:#1c1c1e;letter-spacing:0.154px;">Master (default)</span></div></div><div class="sh" style="left:282px;top:488px;width:992px;height:657.6px"></div><div class="win" style="left:282px;top:488px;width:992px;height:657.6px"><div style="left:0;top:1px;width:992px;height:657.2px"><div style="left:0.00px;top:-1.00px;width:992.00px;height:25.80px;background:#f0efee"></div><div style="left:6.90px;top:6.90px;width:10.80px;height:10.80px;background:#ff5f57;border-radius:50%;box-shadow:inset 0 0 0 0.5px rgba(0,0,0,.12)"></div><div style="left:24.40px;top:6.90px;width:10.80px;height:10.80px;background:#febc2e;border-radius:50%;box-shadow:inset 0 0 0 0.5px rgba(0,0,0,.12)"></div><div style="left:41.90px;top:6.90px;width:10.80px;height:10.80px;background:#28c840;border-radius:50%;box-shadow:inset 0 0 0 0.5px rgba(0,0,0,.12)"></div><span style="left:475.72px;top:4.32px;font-size:12px;line-height:16px;color:#474749;font-weight:700;-webkit-text-stroke:0;letter-spacing:-0.159px;">Quarky</span><div style="left:0.00px;top:24.80px;width:992.00px;height:38.80px;background:#2a292e"></div><svg style="left:18.10px;top:39.50px" width="12" height="14" viewBox="0 0 12 14"><path d="M1.6 1.6 L10.6 7 L1.6 12.4 Z" fill="none" stroke="#9c9ca0" stroke-width="1.2" stroke-linejoin="round"/></svg><svg style="left:53.30px;top:38.50px" width="16" height="16" viewBox="0 0 16 16"><path d="M14.10 10.53 L10.53 14.10 L5.47 14.10 L1.90 10.53 L1.90 5.47 L5.47 1.90 L10.53 1.90 L14.10 5.47 Z" fill="none" stroke="#9c9ca0" stroke-width="1.1" stroke-linejoin="round"/><path d="M6.2 6.2 L9.8 9.8 M9.8 6.2 L6.2 9.8" stroke="#9c9ca0" stroke-width="1.2000000000000002" stroke-linecap="round"/></svg><span style="left:85.00px;top:38.72px;font-size:12px;line-height:16px;color:#fff;font-weight:700;-webkit-text-stroke:0;letter-spacing:-0.154px;">✖ Soc Disconnected</span><div style="left:206.00px;top:39.70px;width:454.70px;height:13.00px;background:#07071c;border-radius:6.5px"></div><div style="left:206.00px;top:39.70px;width:454.70px;height:13.00px;background:linear-gradient(to right,#0a6cd8,#0090e8 35%,#00b6f4 70%,#00d0ff);border-radius:6.5px"></div><span style="left:667.70px;top:38.72px;font-size:12px;line-height:16px;color:#fff;letter-spacing:0.254px;">60/60</span><div style="left:707.00px;top:37.00px;width:75.30px;height:19.00px;background:#3a3a40;border-radius:4px"></div><span style="left:717.57px;top:38.72px;font-size:12px;line-height:16px;color:#fff;letter-spacing:-0.153px;">Load Data</span><div style="left:789.80px;top:37.00px;width:121.60px;height:19.00px;background:#3a3a40;border-radius:4px"></div><span style="left:800.33px;top:38.72px;font-size:12px;line-height:16px;color:#fff;letter-spacing:-0.048px;">Extract Experiment</span><svg style="left:928.00px;top:37.60px" width="16" height="18" viewBox="0 0 16 18"><rect x="2.3" y="1.7" width="11.4" height="14.6" rx="2.1" fill="none" stroke="#ececec" stroke-width="1.25"/><path d="M2.6 13.8 a1.9 1.9 0 0 1 1.9 -1.7 H13.6" fill="none" stroke="#ececec" stroke-width="1.2"/><path d="M5.3 5.7 H9.4 M5.3 8.5 H10.7" stroke="#ececec" stroke-width="1.25"/></svg><svg style="left:964.00px;top:38.50px" width="16" height="16" viewBox="0 0 16 16"><path d="M6.34 3.60 L6.56 1.56 L9.44 1.56 L9.66 3.60 L10.98 4.37 L12.86 3.53 L14.30 6.03 L12.64 7.23 L12.64 8.77 L14.30 9.97 L12.86 12.47 L10.98 11.63 L9.66 12.40 L9.44 14.44 L6.56 14.44 L6.34 12.40 L5.02 11.63 L3.14 12.47 L1.70 9.97 L3.36 8.77 L3.36 7.23 L1.70 6.03 L3.14 3.53 L5.02 4.37 Z" fill="none" stroke="#ececec" stroke-width="1.25" stroke-linejoin="round"/><circle cx="8" cy="8" r="1.9" fill="none" stroke="#ececec" stroke-width="1.25"/></svg><div style="left:0.00px;top:63.60px;width:992.00px;height:594.20px;background:#fff"></div><div style="left:8.70px;top:73.50px;width:587.60px;height:571.00px;background:#eff0f2;border-radius:0 0 4px 4px"></div><div style="left:8.70px;top:73.50px;width:587.60px;height:21.50px;background:#f6f7f9"></div><div style="left:8.40px;top:73.20px;width:246.30px;height:21.70px;background:#f6f7f9;border:1px solid #c6c6c8;box-sizing:border-box"></div><svg style="left:12.00px;top:80.00px" width="8" height="8" viewBox="0 0 8 8"><path d="M1.2 1.2 L6.8 6.8 M6.8 1.2 L1.2 6.8" stroke="#222" stroke-width="1" stroke-linecap="round"/></svg><span style="left:38.30px;top:77.11px;font-size:10.5px;line-height:14px;color:#1c1c1e;letter-spacing:-0.064px;">Transmission_2024_07_09_15_21_29.h5</span><div style="left:254.20px;top:73.20px;width:313.50px;height:21.70px;background:#f6f7f9;border:1px solid #c6c6c8;box-sizing:border-box"></div><div style="left:254.70px;top:91.20px;width:313.00px;height:3.70px;background:#68bff3"></div><svg style="left:260.10px;top:79.00px" width="8" height="8" viewBox="0 0 8 8"><path d="M1.2 1.2 L6.8 6.8 M6.8 1.2 L1.2 6.8" stroke="#222" stroke-width="1" stroke-linecap="round"/></svg><span style="left:290.70px;top:76.11px;font-size:10.5px;line-height:14px;color:#1c1c1e;letter-spacing:-0.115px;">dataTestSpecVsFlux_2024_10_14_17_37_28_data.h5</span><svg style="left:6.40px;top:73.40px" width="6" height="21.2" viewBox="0 0 6 21.2"><path d="M0 0 H3 L5.2 5.3 L2.6 10.6 L5.2 15.9 L3 21.2 H0 Z" fill="#fff"/><path d="M3 0 L5.2 5.3 L2.6 10.6 L5.2 15.9 L3 21.2" fill="none" stroke="#c6c6c8" stroke-width="1"/></svg><div style="left:568.60px;top:73.20px;width:26.90px;height:21.70px;background:#ececed;border:1px solid #c9c9cb;border-left:none;box-sizing:border-box"></div><div style="left:581.90px;top:74.20px;width:1.00px;height:19.70px;background:#e0e0e2"></div><svg style="left:571.40px;top:79.10px" width="9" height="12" viewBox="0 0 9 12"><path d="M6.3 2 L2.7 6 L6.3 10" fill="none" stroke="#111" stroke-width="1.9" stroke-linecap="round" stroke-linejoin="round"/></svg><svg style="left:584.20px;top:79.10px" width="9" height="12" viewBox="0 0 9 12"><path d="M2.7 2 L6.3 6 L2.7 10" fill="none" stroke="#111" stroke-width="1.9" stroke-linecap="round" stroke-linejoin="round"/></svg><span style="left:18.50px;top:105.80px;font-size:10px;line-height:13px;color:#1c1c1e;letter-spacing:0.258px;">Estimated Runtime: ---</span><span style="left:201.50px;top:105.80px;font-size:10px;line-height:13px;color:#1c1c1e;letter-spacing:0.395px;">End: ---</span><span style="left:384.89px;top:105.80px;font-size:10px;line-height:13px;color:#1c1c1e;letter-spacing:0.191px;">Hardware Requirement: [Proxy, QickConfig]</span><div style="left:20.60px;top:125.40px;width:72.70px;height:18.40px;background:#ebedf0;border-radius:5px;"></div><span style="left:30.47px;top:126.72px;font-size:12px;line-height:16px;color:#b9babd;letter-spacing:0.035px;">ReExtract</span><div style="left:97.70px;top:125.40px;width:55.90px;height:18.40px;background:#fff;border-radius:5px;box-shadow:0 0.5px 1px rgba(0,0,0,.10);"></div><span style="left:108.07px;top:126.72px;font-size:12px;line-height:16px;color:#1c1c1e;letter-spacing:-0.170px;">RePlot</span><div style="left:158.20px;top:125.40px;width:44.30px;height:18.40px;background:#fff;border-radius:5px;box-shadow:0 0.5px 1px rgba(0,0,0,.10);"></div><span style="left:168.54px;top:126.72px;font-size:12px;line-height:16px;color:#1c1c1e;letter-spacing:-0.130px;">Snip</span><div style="left:207.40px;top:125.40px;width:56.10px;height:18.40px;background:#fff;border-radius:5px;box-shadow:0 0.5px 1px rgba(0,0,0,.10);"></div><span style="left:218.18px;top:126.72px;font-size:12px;line-height:16px;color:#1c1c1e;letter-spacing:-0.030px;">Export</span><div style="left:267.90px;top:125.40px;width:74.60px;height:18.40px;background:#ebedf0;border-radius:5px;"></div><span style="left:278.47px;top:126.72px;font-size:12px;line-height:16px;color:#b9babd;letter-spacing:0.035px;">Save To...</span><span style="left:476.95px;top:123.40px;font-size:10px;line-height:13px;color:#1c1c1e;letter-spacing:0.147px;">X: 232.9427 Y: 10.7581</span><span style="left:27.50px;top:150.82px;font-size:12px;line-height:16px;color:#1c1c1e;letter-spacing:0.048px;">Plotter:</span><div style="left:72.00px;top:150.00px;width:112.20px;height:16.60px;background:#fff;border-radius:4px;box-shadow:0 0.5px 1px rgba(0,0,0,.08)"></div><span style="left:82.50px;top:150.82px;font-size:12px;line-height:16px;color:#1c1c1e;letter-spacing:-0.297px;">None</span><svg style="left:168.50px;top:154.00px" width="12" height="10" viewBox="0 0 12 10"><path d="M2.6 3.3 L6 6.7 L9.4 3.3" fill="none" stroke="#222" stroke-width="1.5" stroke-linecap="round" stroke-linejoin="round"/></svg><div style="left:198.70px;top:152.00px;width:12.80px;height:13.00px;background:#fff;border-radius:3px"></div><span style="left:215.30px;top:150.82px;font-size:12px;line-height:16px;color:#1c1c1e;letter-spacing:-0.072px;">Average Simultaneously</span><span style="left:493.59px;top:148.10px;font-size:10px;line-height:13px;color:#1c1c1e;letter-spacing:0.289px;">hover + 'd' to delete</span><div style="left:18.90px;top:172.80px;width:567.60px;height:464.40px;background:#fff"></div><span style="left:176.74px;top:178.42px;font-size:11.5px;line-height:15px;color:#999;letter-spacing:-0.224px;-webkit-text-stroke:0;">dataTestSpecVsFlux_2024_10_14_17_37_28_data</span><span style="left:262.25px;top:205.50px;font-size:10px;line-height:13px;color:#8c8c8c;letter-spacing:0.096px;-webkit-text-stroke:0;">spec_Imat</span><div style="left:75.80px;top:225.80px;width:1.00px;height:155.70px;background:#e9e9e9"></div><div style="left:180.40px;top:225.80px;width:1.00px;height:155.70px;background:#e9e9e9"></div><div style="left:285.00px;top:225.80px;width:1.00px;height:155.70px;background:#e9e9e9"></div><div style="left:389.60px;top:225.80px;width:1.00px;height:155.70px;background:#e9e9e9"></div><div style="left:494.20px;top:225.80px;width:1.00px;height:155.70px;background:#e9e9e9"></div><div style="left:57.30px;top:371.10px;width:456.80px;height:1.00px;background:#e6e6e6"></div><div style="left:57.30px;top:358.12px;width:456.80px;height:1.00px;background:#f2f2f2"></div><div style="left:57.30px;top:345.14px;width:456.80px;height:1.00px;background:#f2f2f2"></div><div style="left:57.30px;top:332.16px;width:456.80px;height:1.00px;background:#f2f2f2"></div><div style="left:57.30px;top:319.18px;width:456.80px;height:1.00px;background:#f2f2f2"></div><div style="left:57.30px;top:306.20px;width:456.80px;height:1.00px;background:#e6e6e6"></div><div style="left:57.30px;top:293.22px;width:456.80px;height:1.00px;background:#f2f2f2"></div><div style="left:57.30px;top:280.24px;width:456.80px;height:1.00px;background:#f2f2f2"></div><div style="left:57.30px;top:267.26px;width:456.80px;height:1.00px;background:#f2f2f2"></div><div style="left:57.30px;top:254.28px;width:456.80px;height:1.00px;background:#f2f2f2"></div><div style="left:57.30px;top:241.30px;width:456.80px;height:1.00px;background:#e6e6e6"></div><svg style="left:76.3px;top:235.3px" width="419.3" height="136.3" viewBox="0 0 400 21" preserveAspectRatio="none" fill="none" stroke-width="1.03" shape-rendering="crispEdges"><path d="M3 0.5h1m1 0h1m33 0h1m21 0h1m14 0h1m4 0h1m4 0h1m10 0h1m17 0h1m18 0h1m8 0h1m20 0h1m6 0h1m58 0h1m44 0h1m28 0h1m9 0h1m36 0h1m28 0h1" stroke="#41418c"/><path d="M0 0.5h2m7 0h1m1 0h2m1 0h2m2 0h1m2 0h1m1 0h3m5 0h2m1 0h2m2 0h1m2 0h2m3 0h1m3 0h1m2 0h2m2 0h1m6 0h1m8 0h2m2 0h1m9 0h2m1 0h3m3 0h1m5 0h1m1 0h3m6 0h2m1 0h2m4 0h1m5 0h1m1 0h1m1 0h1m4 0h2m5 0h1m2 0h4m1 0h1m2 0h2m1 0h2m6 0h3m3 0h1m2 0h1m1 0h2m4 0h3m1 0h1m1 0h7m2 0h1m3 0h3m3 0h1m3 0h1m1 0h2m4 0h1m3 0h1m1 0h4m1 0h1m1 0h1m1 0h2m1 0h2m1 0h3m4 0h5m6 0h3m2 0h1m3 0h1m3 0h1m5 0h1m2 0h1m4 0h4m1 0h1m1 0h4m1 0h1m2 0h1m5 0h1m2 0h1m1 0h2m2 0h1m2 0h2m3 0h3m2 0h2m1 0h1m4 0h1m3 0h1m3 0h1m1 0h1m1 0h2m2 0h2m3 0h1m1 0h2m4 0h2m1 0h2m1 0h2m1 0h1m6 0h2m4 0h1m4 0h3" stroke="#2d5495"/><path d="M2 0.5h1m1 0h1m1 0h2m2 0h1m2 0h1m2 0h2m2 0h1m1 0h1m4 0h3m6 0h1m3 0h1m2 0h3m3 0h1m1 0h2m2 0h2m1 0h3m2 0h1m1 0h4m1 0h1m4 0h1m3 0h2m2 0h3m7 0h3m2 0h4m1 0h1m3 0h1m1 0h4m5 0h3m2 0h1m1 0h3m1 0h1m1 0h1m1 0h1m5 0h4m3 0h1m4 0h1m1 0h2m5 0h3m2 0h1m3 0h2m3 0h1m4 0h2m1 0h1m3 0h1m1 0h1m7 0h2m1 0h2m4 0h3m1 0h3m1 0h1m2 0h1m1 0h2m1 0h1m1 0h1m1 0h1m6 0h1m1 0h1m2 0h1m6 0h4m5 0h5m4 0h2m1 0h3m1 0h3m1 0h2m1 0h2m2 0h1m1 0h4m4 0h1m1 0h1m4 0h1m1 0h2m1 0h2m1 0h2m2 0h1m1 0h1m3 0h1m1 0h2m4 0h1m4 0h1m2 0h1m1 0h4m1 0h1m1 0h1m2 0h1m2 0h1m1 0h1m3 0h1m3 0h2m1 0h1m2 0h4m2 0h1m2 0h1m2 0h1m2 0h3m1 0h1m2 0h3m2 0h4m4 0h3" stroke="#0b6796"/><path d="M8 0.5h1m10 0h1m6 0h1m3 0h1m2 0h1m3 0h1m9 0h2m13 0h1m6 0h1m1 0h2m5 0h1m3 0h1m6 0h1m18 0h1m12 0h1m2 0h1m10 0h2m8 0h1m11 0h1m5 0h1m9 0h1m2 0h1m4 0h1m19 0h1m15 0h1m4 0h1m17 0h1m17 0h1m20 0h1m28 0h1m12 0h2m4 0h1m11 0h1m2 0h1m1 0h1m10 0h1m20 0h1m10 0h1m8 0h1" stroke="#057a8f"/><path d="M44 1.5h1m23 0h1m11 0h1m10 0h1m8 0h1m38 0h1m32 0h1m2 0h1m19 0h1m23 0h2m9 0h1m28 0h1m14 0h1m2 0h1m2 0h1m22 0h1m13 0h1m21 0h1m23 0h1m3 0h1m13 0h1m4 0h2" stroke="#0b6796"/><path d="M0 1.5h1m2 0h2m13 0h2m2 0h2m3 0h1m1 0h1m1 0h3m1 0h1m5 0h1m4 0h2m4 0h1m11 0h1m1 0h2m7 0h1m6 0h1m1 0h1m2 0h1m2 0h1m1 0h2m7 0h2m4 0h1m14 0h1m6 0h1m1 0h1m2 0h1m1 0h1m6 0h1m5 0h1m4 0h1m9 0h1m2 0h1m1 0h1m1 0h1m2 0h1m2 0h1m11 0h1m6 0h1m1 0h1m3 0h2m2 0h1m2 0h1m1 0h1m3 0h2m8 0h1m6 0h1m3 0h1m2 0h1m5 0h1m3 0h1m7 0h2m1 0h2m2 0h1m7 0h1m6 0h1m2 0h1m2 0h1m4 0h2m1 0h1m5 0h1m1 0h2m2 0h1m10 0h1m2 0h1m3 0h1m1 0h1m4 0h2m3 0h1m5 0h2m9 0h1m3 0h4m4 0h1m1 0h1m4 0h1m11 0h1m1 0h1m6 0h1m1 0h2m2 0h1" stroke="#057a8f"/><path d="M1 1.5h1m5 0h3m1 0h3m1 0h3m2 0h1m3 0h2m2 0h1m5 0h1m1 0h4m2 0h2m1 0h1m2 0h4m2 0h3m1 0h1m1 0h1m2 0h1m5 0h1m2 0h1m1 0h1m1 0h4m5 0h2m1 0h1m5 0h2m2 0h2m3 0h3m2 0h7m1 0h2m2 0h1m4 0h1m4 0h1m2 0h1m1 0h1m2 0h1m1 0h1m1 0h1m5 0h1m1 0h4m2 0h5m1 0h2m1 0h2m3 0h1m5 0h1m1 0h1m1 0h2m1 0h2m1 0h3m1 0h2m5 0h1m1 0h3m2 0h2m1 0h2m8 0h2m2 0h4m4 0h1m1 0h1m1 0h2m2 0h2m1 0h1m2 0h1m2 0h2m3 0h1m2 0h3m5 0h2m1 0h2m1 0h3m2 0h1m4 0h1m2 0h1m2 0h1m1 0h2m1 0h1m2 0h1m2 0h4m5 0h1m1 0h1m2 0h1m1 0h5m4 0h3m1 0h1m1 0h3m5 0h1m2 0h1m2 0h1m4 0h2m2 0h3m1 0h2m6 0h1m6 0h1m3 0h4m4 0h1m1 0h1m5 0h2m1 0h1m5 0h1m1 0h1" stroke="#008c88"/><path d="M2 1.5h1m2 0h2m3 0h1m3 0h1m6 0h1m4 0h1m3 0h1m9 0h1m12 0h1m3 0h1m1 0h1m1 0h1m8 0h2m1 0h1m7 0h1m1 0h1m5 0h1m6 0h2m8 0h1m8 0h1m3 0h1m1 0h1m1 0h2m1 0h3m3 0h1m4 0h1m3 0h1m2 0h4m7 0h1m5 0h1m6 0h1m4 0h1m8 0h1m2 0h1m6 0h3m17 0h3m12 0h2m6 0h1m5 0h1m2 0h1m3 0h1m1 0h1m1 0h2m13 0h1m3 0h1m4 0h1m6 0h1m4 0h1m5 0h1m12 0h2m1 0h1m7 0h1m10 0h1m2 0h2m2 0h1m1 0h1m4 0h2m2 0h2m6 0h1m4 0h1m1 0h1m6 0h2m5 0h4m10 0h1m2 0h1m2 0h1" stroke="#009e7e"/><path d="M62 1.5h1m2 0h1m52 0h1m60 0h1m30 0h1m15 0h1m15 0h1m32 0h1m24 0h1m64 0h1m18 0h1" stroke="#00af73"/><path d="M2 2.5h1m1 0h1m4 0h1m2 0h1m2 0h1m2 0h1m2 0h1m3 0h1m10 0h1m6 0h1m2 0h1m5 0h1m7 0h1m1 0h1m7 0h1m2 0h2m2 0h1m2 0h1m14 0h1m3 0h1m10 0h1m11 0h2m6 0h1m3 0h1m1 0h2m8 0h2m3 0h1m1 0h1m4 0h1m1 0h1m3 0h1m3 0h1m14 0h2m10 0h1m3 0h1m5 0h1m8 0h1m2 0h1m9 0h1m10 0h1m6 0h3m2 0h1m6 0h1m6 0h2m7 0h1m2 0h1m8 0h1m17 0h1m10 0h1m3 0h1m1 0h1m4 0h1m4 0h1m1 0h1m6 0h1m3 0h1m6 0h2m15 0h1m8 0h2m5 0h2m4 0h1m1 0h1m5 0h1" stroke="#057a8f"/><path d="M5 2.5h1m1 0h2m1 0h1m2 0h2m1 0h1m2 0h1m2 0h1m5 0h1m6 0h1m4 0h3m2 0h1m1 0h3m7 0h3m5 0h3m1 0h1m6 0h1m6 0h2m1 0h4m6 0h2m2 0h3m1 0h2m2 0h1m6 0h1m2 0h3m3 0h1m1 0h1m1 0h2m1 0h1m1 0h1m7 0h4m3 0h1m1 0h1m3 0h1m2 0h1m3 0h1m1 0h1m1 0h1m3 0h1m3 0h2m2 0h2m1 0h2m4 0h1m2 0h1m1 0h4m2 0h1m2 0h5m1 0h2m1 0h1m3 0h1m7 0h6m2 0h1m2 0h1m1 0h1m1 0h1m3 0h2m2 0h1m6 0h1m1 0h3m2 0h1m1 0h1m2 0h1m3 0h3m8 0h3m2 0h2m1 0h3m2 0h1m1 0h1m2 0h4m4 0h6m1 0h2m2 0h2m2 0h1m3 0h1m2 0h2m1 0h1m3 0h2m1 0h1m1 0h1m3 0h1m13 0h1m5 0h1m1 0h2m2 0h1m2 0h2m2 0h1m2 0h2m1 0h1m4 0h3m1 0h1m1 0h4m2 0h2" stroke="#008c88"/><path d="M0 2.5h2m1 0h1m2 0h1m4 0h1m5 0h1m2 0h1m2 0h2m1 0h2m2 0h5m3 0h2m4 0h1m5 0h1m2 0h3m5 0h1m1 0h2m6 0h2m5 0h2m1 0h2m2 0h1m4 0h4m4 0h1m7 0h2m3 0h3m2 0h2m3 0h1m3 0h1m1 0h1m7 0h1m2 0h3m4 0h1m3 0h1m5 0h2m2 0h1m2 0h1m3 0h2m2 0h3m2 0h2m5 0h1m2 0h1m1 0h2m1 0h1m5 0h1m1 0h1m9 0h1m1 0h3m2 0h2m1 0h3m7 0h1m1 0h2m3 0h1m1 0h1m1 0h1m2 0h2m4 0h2m2 0h1m3 0h1m2 0h1m1 0h2m3 0h1m3 0h3m2 0h1m1 0h1m3 0h2m6 0h1m2 0h1m1 0h2m4 0h2m8 0h1m2 0h1m3 0h1m3 0h2m1 0h1m3 0h1m2 0h1m5 0h1m2 0h2m4 0h4m2 0h4m1 0h1m1 0h3m1 0h1m5 0h2m2 0h2m5 0h1m1 0h1m2 0h1m10 0h1" stroke="#009e7e"/><path d="M29 2.5h1m7 0h1m13 0h1m4 0h1m11 0h1m6 0h1m18 0h1m8 0h1m5 0h1m4 0h1m17 0h1m19 0h1m26 0h1m53 0h1m40 0h1m15 0h1m11 0h1m32 0h1m8 0h2m12 0h1m7 0h1" stroke="#00af73"/><path d="M75 3.5h1m30 0h1m69 0h1m17 0h1m61 0h1m85 0h1m11 0h1m42 0h1" stroke="#2d5495"/><path d="M0 3.5h1m7 0h2m1 0h1m2 0h2m1 0h2m2 0h4m9 0h1m2 0h1m3 0h5m1 0h1m12 0h1m4 0h1m1 0h2m3 0h1m1 0h1m1 0h2m1 0h1m1 0h3m1 0h2m3 0h2m3 0h1m11 0h1m1 0h1m7 0h1m1 0h1m1 0h2m1 0h1m2 0h2m8 0h2m2 0h1m4 0h2m2 0h1m1 0h1m18 0h1m2 0h1m8 0h2m2 0h2m1 0h2m6 0h2m17 0h1m1 0h3m2 0h1m3 0h1m2 0h2m4 0h2m7 0h1m1 0h1m4 0h2m4 0h2m24 0h1m1 0h1m5 0h1m3 0h1m1 0h1m1 0h2m12 0h2m1 0h1m1 0h2m1 0h1m2 0h1m5 0h2m7 0h1m2 0h2m2 0h1m3 0h1m5 0h2m2 0h1m3 0h1m5 0h1m7 0h1m6 0h1m2 0h1m1 0h3" stroke="#0b6796"/><path d="M1 3.5h3m1 0h2m3 0h1m1 0h2m2 0h1m2 0h2m4 0h9m1 0h2m1 0h3m8 0h3m1 0h5m1 0h1m2 0h2m2 0h1m2 0h3m1 0h1m6 0h1m6 0h3m2 0h1m1 0h1m2 0h6m1 0h2m2 0h1m1 0h4m1 0h2m1 0h1m4 0h1m1 0h2m4 0h2m1 0h3m3 0h1m1 0h4m2 0h2m1 0h1m1 0h2m2 0h2m1 0h11m6 0h6m3 0h1m2 0h1m2 0h2m1 0h2m3 0h1m1 0h2m2 0h2m1 0h2m2 0h4m5 0h1m11 0h3m2 0h2m2 0h2m2 0h1m1 0h1m1 0h2m2 0h1m1 0h2m6 0h2m1 0h2m1 0h2m1 0h2m2 0h4m1 0h1m2 0h1m1 0h5m2 0h1m2 0h1m5 0h3m1 0h3m2 0h1m3 0h1m1 0h1m2 0h1m1 0h2m1 0h1m1 0h3m2 0h1m1 0h1m3 0h1m2 0h1m2 0h2m1 0h1m5 0h2m3 0h2m1 0h3m1 0h5m1 0h4m1 0h2m2 0h3m3 0h1m2 0h1m3 0h2m1 0h2" stroke="#057a8f"/><path d="M4 3.5h1m2 0h1m38 0h1m1 0h1m3 0h1m5 0h1m2 0h1m2 0h1m13 0h1m5 0h1m8 0h1m2 0h1m6 0h1m10 0h1m5 0h1m8 0h2m2 0h1m5 0h1m15 0h2m2 0h1m12 0h2m1 0h1m9 0h1m11 0h1m3 0h1m2 0h2m2 0h1m2 0h2m5 0h1m4 0h1m1 0h3m1 0h2m2 0h1m7 0h2m2 0h1m4 0h1m10 0h4m2 0h1m2 0h1m2 0h1m2 0h2m4 0h1m1 0h1m9 0h1m1 0h1m3 0h1m2 0h1m3 0h1m3 0h2m1 0h1m13 0h1m6 0h1m1 0h3m10 0h2m1 0h1m3 0h1m19 0h1m3 0h1m3 0h2m2 0h1" stroke="#008c88"/><path d="M22 4.5h1m6 0h1m14 0h1m10 0h1m27 0h1m28 0h1m92 0h1m39 0h1m17 0h1m31 0h1" stroke="#00af73"/><path d="M0 4.5h1m10 0h1m6 0h1m2 0h1m2 0h1m10 0h1m2 0h1m11 0h1m1 0h2m2 0h1m15 0h1m24 0h1m11 0h1m24 0h1m30 0h1m7 0h2m15 0h2m19 0h1m17 0h1m8 0h1m10 0h1m18 0h1m3 0h1m11 0h1m5 0h1m10 0h1m2 0h1m1 0h1m8 0h1m11 0h1m8 0h2m3 0h1m18 0h1m4 0h1m3 0h1m10 0h1m3 0h1" stroke="#00c161"/><path d="M2 4.5h1m1 0h1m1 0h2m1 0h2m6 0h1m10 0h1m3 0h2m5 0h1m1 0h1m5 0h2m5 0h1m3 0h2m2 0h1m4 0h2m4 0h2m9 0h1m1 0h1m1 0h1m1 0h1m8 0h1m3 0h1m16 0h1m1 0h1m2 0h2m9 0h3m5 0h2m2 0h1m2 0h1m3 0h2m4 0h1m17 0h1m1 0h1m3 0h1m1 0h1m6 0h1m3 0h1m4 0h1m8 0h2m1 0h1m5 0h2m3 0h1m7 0h1m1 0h1m3 0h2m1 0h1m2 0h2m6 0h2m4 0h1m1 0h1m2 0h1m3 0h2m2 0h1m5 0h1m6 0h2m3 0h1m4 0h1m1 0h1m8 0h2m8 0h1m5 0h1m7 0h3m4 0h3m1 0h1m1 0h2m2 0h1m1 0h2m1 0h2m1 0h2m3 0h1m1 0h1m3 0h2m3 0h1m2 0h1m1 0h1m4 0h1m6 0h1m3 0h1m3 0h1" stroke="#37cf33"/><path d="M1 4.5h1m10 0h1m1 0h3m2 0h2m2 0h1m1 0h1m1 0h1m14 0h2m7 0h1m5 0h1m7 0h1m4 0h1m4 0h2m2 0h1m2 0h1m6 0h1m1 0h1m4 0h1m3 0h2m3 0h1m1 0h2m2 0h1m1 0h3m1 0h3m3 0h1m4 0h1m2 0h1m1 0h1m1 0h1m3 0h1m1 0h3m2 0h1m2 0h1m2 0h2m9 0h1m2 0h1m2 0h2m4 0h1m7 0h1m5 0h1m2 0h2m2 0h1m2 0h2m3 0h1m2 0h1m1 0h2m3 0h1m1 0h1m1 0h2m4 0h1m2 0h1m3 0h2m6 0h1m8 0h1m1 0h1m1 0h2m2 0h2m1 0h1m4 0h1m2 0h1m8 0h1m1 0h1m1 0h1m2 0h1m1 0h1m2 0h2m3 0h1m3 0h1m1 0h2m4 0h1m3 0h1m2 0h2m2 0h1m3 0h1m1 0h1m2 0h2m2 0h2m3 0h1m8 0h1m3 0h1m4 0h1m5 0h2m2 0h1m1 0h1m6 0h1m1 0h2m1 0h1m4 0h1m8 0h1m3 0h1m3 0h1" stroke="#8fda00"/><path d="M5 4.5h1m20 0h1m4 0h1m2 0h1m1 0h2m7 0h1m15 0h1m1 0h2m1 0h1m10 0h2m1 0h2m3 0h1m6 0h1m1 0h2m2 0h1m3 0h1m1 0h1m5 0h1m5 0h1m4 0h1m2 0h1m4 0h2m9 0h1m6 0h1m2 0h1m3 0h1m4 0h1m2 0h1m1 0h1m2 0h2m2 0h1m6 0h1m1 0h1m1 0h1m5 0h1m6 0h1m1 0h1m3 0h2m5 0h1m8 0h1m5 0h1m6 0h1m4 0h1m1 0h1m4 0h1m1 0h1m6 0h1m9 0h1m4 0h1m7 0h1m6 0h1m28 0h2m2 0h1m3 0h2m8 0h1m6 0h1m10 0h1m2 0h1m16 0h1m3 0h1m7 0h1m4 0h1m2 0h1m1 0h1m3 0h1m3 0h1m2 0h1" stroke="#cee000"/><path d="M3 4.5h1m4 0h1m4 0h1m16 0h1m9 0h1m5 0h1m2 0h1m10 0h1m8 0h1m1 0h1m15 0h1m5 0h1m12 0h1m20 0h1m4 0h1m24 0h2m1 0h1m11 0h1m3 0h2m6 0h1m1 0h1m19 0h1m13 0h1m4 0h1m2 0h1m4 0h1m24 0h1m12 0h1m3 0h1m1 0h1m4 0h1m9 0h1m1 0h1m7 0h2m17 0h1m2 0h1m30 0h1m23 0h1m5 0h1m1 0h1m3 0h1m3 0h1" stroke="#fde400"/><path d="M81 5.5h1m24 0h2m2 0h1m5 0h1m27 0h1m94 0h1m7 0h1m6 0h1m26 0h1m4 0h1m16 0h1m59 0h1m4 0h1m4 0h1m8 0h1m6 0h1" stroke="#461869"/><path d="M9 5.5h2m2 0h3m7 0h1m1 0h1m3 0h2m1 0h1m1 0h1m6 0h2m5 0h1m7 0h1m1 0h1m10 0h1m6 0h1m2 0h1m7 0h2m2 0h1m1 0h1m4 0h1m4 0h1m1 0h1m3 0h1m2 0h1m12 0h1m11 0h1m1 0h1m1 0h2m3 0h1m6 0h1m2 0h1m9 0h2m1 0h2m3 0h1m4 0h1m2 0h2m2 0h1m2 0h2m2 0h1m6 0h1m6 0h1m5 0h1m3 0h1m7 0h1m5 0h3m9 0h2m4 0h2m1 0h1m5 0h3m3 0h3m2 0h1m3 0h1m2 0h1m2 0h2m3 0h1m4 0h1m1 0h2m1 0h1m1 0h1m7 0h1m2 0h1m8 0h1m2 0h1m1 0h1m1 0h1m1 0h1m1 0h1m1 0h1m2 0h1m9 0h1m1 0h1m1 0h1m8 0h1m1 0h1m9 0h1m13 0h1m5 0h1m3 0h1m1 0h1" stroke="#462e7d"/><path d="M0 5.5h2m1 0h2m3 0h1m2 0h2m3 0h2m2 0h2m4 0h3m2 0h1m3 0h1m1 0h2m1 0h1m2 0h2m1 0h1m2 0h3m1 0h3m5 0h2m1 0h1m1 0h1m1 0h1m1 0h1m1 0h4m1 0h2m4 0h1m1 0h1m3 0h2m3 0h3m4 0h1m2 0h1m3 0h1m2 0h1m1 0h2m2 0h1m1 0h3m1 0h1m2 0h1m1 0h1m3 0h1m1 0h2m4 0h1m7 0h3m1 0h1m1 0h1m2 0h1m1 0h2m1 0h4m6 0h2m1 0h2m3 0h1m3 0h1m6 0h2m1 0h1m3 0h1m2 0h1m3 0h2m4 0h2m2 0h1m4 0h2m7 0h2m3 0h2m2 0h1m1 0h3m2 0h2m1 0h1m2 0h1m1 0h1m2 0h2m4 0h2m3 0h1m3 0h2m4 0h1m4 0h1m2 0h1m1 0h2m1 0h1m7 0h1m1 0h1m4 0h1m2 0h1m1 0h3m1 0h2m1 0h1m2 0h1m1 0h1m3 0h1m1 0h1m1 0h1m4 0h2m1 0h4m3 0h1m1 0h3m1 0h1m1 0h2m1 0h1m3 0h1m1 0h1m1 0h1m1 0h1m7 0h1m1 0h2m1 0h1m3 0h1m6 0h1m1 0h1m1 0h1m2 0h1m1 0h1" stroke="#41418c"/><path d="M2 5.5h1m2 0h3m10 0h2m2 0h1m1 0h1m14 0h1m5 0h1m1 0h1m4 0h1m6 0h2m2 0h1m1 0h1m1 0h1m3 0h1m8 0h1m1 0h1m1 0h1m1 0h1m5 0h1m4 0h1m1 0h2m14 0h1m6 0h1m1 0h1m2 0h1m1 0h3m1 0h1m2 0h1m1 0h1m4 0h1m1 0h1m1 0h1m3 0h1m3 0h1m2 0h1m2 0h1m6 0h1m2 0h1m5 0h2m2 0h1m3 0h1m1 0h2m7 0h2m1 0h1m2 0h1m1 0h1m3 0h1m1 0h1m3 0h1m1 0h1m1 0h2m4 0h1m1 0h2m8 0h1m18 0h1m12 0h1m1 0h1m3 0h1m3 0h1m4 0h1m9 0h1m1 0h1m1 0h1m1 0h1m1 0h1m4 0h1m2 0h1m3 0h1m10 0h1m6 0h1m2 0h1m2 0h1m5 0h1m8 0h1m5 0h2m1 0h1m3 0h1m3 0h1m5 0h1m2 0h1m1 0h1m3 0h3m1 0h1m6 0h2m1 0h1" stroke="#2d5495"/><path d="M33 5.5h1m2 0h1m20 0h1m44 0h1m15 0h1m76 0h1m7 0h1m5 0h1m12 0h2m4 0h1m8 0h1m23 0h1m13 0h1m26 0h1m15 0h1m14 0h1m16 0h1m19 0h3" stroke="#0b6796"/><path d="M6 6.5h1m90 0h1m43 0h1m47 0h1m8 0h1m27 0h1m84 0h1m37 0h1m32 0h1m14 0h1" stroke="#009e7e"/><path d="M11 6.5h1m7 0h1m9 0h1m1 0h1m8 0h1m14 0h1m3 0h1m27 0h1m8 0h1m5 0h1m3 0h1m9 0h1m3 0h1m11 0h1m3 0h1m2 0h1m12 0h1m3 0h1m1 0h1m2 0h1m7 0h1m1 0h1m11 0h2m17 0h2m7 0h1m3 0h1m7 0h1m12 0h1m9 0h1m14 0h1m10 0h1m4 0h1m50 0h1m17 0h1m8 0h1m3 0h1m25 0h2m11 0h1" stroke="#00af73"/><path d="M2 6.5h1m1 0h2m3 0h1m15 0h4m10 0h1m1 0h1m1 0h2m2 0h1m2 0h2m1 0h1m7 0h1m1 0h2m1 0h1m11 0h1m1 0h1m5 0h1m8 0h1m2 0h3m7 0h1m1 0h2m6 0h1m3 0h1m1 0h4m1 0h3m21 0h1m12 0h2m4 0h1m1 0h2m1 0h2m2 0h1m4 0h1m5 0h1m1 0h1m4 0h1m4 0h1m1 0h1m5 0h1m3 0h1m2 0h1m2 0h1m2 0h1m28 0h1m2 0h1m2 0h1m6 0h2m2 0h1m4 0h1m4 0h2m4 0h1m19 0h2m4 0h1m4 0h1m1 0h1m1 0h1m1 0h1m5 0h1m9 0h1m9 0h1m1 0h1m1 0h1m2 0h2m5 0h1m5 0h2m1 0h1m4 0h1m4 0h1m3 0h2m2 0h3" stroke="#00c161"/><path d="M1 6.5h1m1 0h1m3 0h1m2 0h1m1 0h1m1 0h1m2 0h1m2 0h2m2 0h1m5 0h1m1 0h3m1 0h2m7 0h1m6 0h1m1 0h1m1 0h2m2 0h1m1 0h1m2 0h1m1 0h1m1 0h2m1 0h2m1 0h1m3 0h1m3 0h1m1 0h1m2 0h1m2 0h1m9 0h1m1 0h1m1 0h1m1 0h1m1 0h1m2 0h1m1 0h2m3 0h1m1 0h1m1 0h1m4 0h1m4 0h1m1 0h1m1 0h1m4 0h1m3 0h1m3 0h1m4 0h1m1 0h1m1 0h1m2 0h4m2 0h1m1 0h1m8 0h1m2 0h1m2 0h1m1 0h1m2 0h2m1 0h1m1 0h2m3 0h1m4 0h1m3 0h1m7 0h2m1 0h1m6 0h1m3 0h3m1 0h1m2 0h3m1 0h3m2 0h1m1 0h1m2 0h1m9 0h1m2 0h2m2 0h2m3 0h2m3 0h1m3 0h2m4 0h1m1 0h3m2 0h2m2 0h1m1 0h1m2 0h2m2 0h1m13 0h1m1 0h1m3 0h1m2 0h1m1 0h1m1 0h1m2 0h1m1 0h1m2 0h1m3 0h1m2 0h1m1 0h1m6 0h1m4 0h1m1 0h2m5 0h1m1 0h1m2 0h3m13 0h1" stroke="#37cf33"/><path d="M13 6.5h1m1 0h2m1 0h1m3 0h1m12 0h1m6 0h1m5 0h1m19 0h1m2 0h1m5 0h1m3 0h2m1 0h1m4 0h2m1 0h3m18 0h1m20 0h1m3 0h1m1 0h1m2 0h2m2 0h1m3 0h1m2 0h1m5 0h1m15 0h1m3 0h1m7 0h1m12 0h1m5 0h1m2 0h1m2 0h2m6 0h1m2 0h1m3 0h3m6 0h1m3 0h1m3 0h1m2 0h1m4 0h1m2 0h1m1 0h2m3 0h2m8 0h1m4 0h1m1 0h1m5 0h1m1 0h1m1 0h1m4 0h1m5 0h1m1 0h2m5 0h1m1 0h1m1 0h2m1 0h1m8 0h2m3 0h1m1 0h1m3 0h2m6 0h1m1 0h1m13 0h2m9 0h1m2 0h1m8 0h1m4 0h2m3 0h1m1 0h1m2 0h1" stroke="#8fda00"/><path d="M0 6.5h1m7 0h1m14 0h1m14 0h1m7 0h1m2 0h1m8 0h1m15 0h1m1 0h1m27 0h1m12 0h1m27 0h1m2 0h2m23 0h1m23 0h1m10 0h1m25 0h1m15 0h2m3 0h1m29 0h1m8 0h1m3 0h2m16 0h1m2 0h1m1 0h1m13 0h1m6 0h2m12 0h1m6 0h1m2 0h1m2 0h1m7 0h1" stroke="#cee000"/><path d="M3 7.5h1m64 0h1m8 0h1m9 0h1m3 0h1m2 0h1m3 0h1m10 0h1m9 0h1m42 0h1m68 0h1m5 0h1m9 0h1m3 0h1m2 0h2m12 0h1m21 0h1m4 0h1m30 0h1m1 0h1m19 0h1m25 0h1m12 0h1" stroke="#41418c"/><path d="M2 7.5h1m1 0h1m2 0h1m3 0h4m1 0h1m1 0h1m16 0h1m2 0h2m2 0h5m2 0h4m1 0h3m2 0h2m3 0h1m8 0h1m7 0h1m3 0h2m2 0h2m2 0h1m7 0h1m4 0h3m2 0h1m1 0h2m2 0h1m2 0h1m5 0h2m1 0h1m3 0h1m4 0h1m2 0h2m1 0h2m1 0h3m1 0h1m8 0h2m1 0h1m9 0h1m4 0h2m2 0h4m4 0h2m1 0h1m2 0h1m3 0h2m1 0h1m1 0h1m5 0h1m3 0h1m1 0h2m3 0h2m4 0h1m1 0h1m2 0h1m2 0h1m3 0h2m1 0h1m1 0h1m3 0h1m8 0h2m2 0h1m2 0h1m3 0h1m1 0h1m6 0h2m1 0h5m2 0h2m2 0h1m5 0h1m6 0h6m2 0h1m2 0h1m1 0h2m1 0h1m1 0h1m3 0h1m1 0h1m2 0h4m3 0h1m2 0h2m5 0h1m11 0h2m2 0h1m1 0h1m1 0h1m2 0h2m3 0h1m2 0h2m1 0h1m2 0h1m4 0h2m3 0h1" stroke="#2d5495"/><path d="M1 7.5h1m3 0h2m1 0h1m1 0h1m8 0h7m2 0h1m1 0h5m1 0h2m2 0h2m5 0h1m5 0h1m3 0h2m2 0h2m4 0h1m1 0h4m1 0h3m1 0h3m2 0h2m3 0h1m3 0h1m4 0h1m1 0h2m1 0h4m4 0h1m1 0h1m5 0h1m3 0h2m4 0h1m1 0h3m1 0h4m5 0h1m2 0h1m3 0h1m2 0h1m1 0h4m5 0h4m1 0h4m1 0h1m1 0h2m2 0h2m5 0h3m2 0h1m1 0h2m1 0h2m3 0h1m3 0h2m1 0h1m2 0h2m2 0h1m2 0h3m2 0h4m1 0h1m4 0h1m3 0h2m2 0h1m1 0h1m3 0h1m3 0h2m3 0h1m2 0h2m1 0h1m2 0h1m5 0h3m2 0h1m8 0h2m3 0h1m1 0h2m1 0h1m2 0h4m1 0h1m7 0h1m4 0h1m2 0h1m1 0h1m1 0h2m4 0h2m5 0h2m1 0h2m2 0h3m3 0h1m1 0h9m2 0h2m3 0h1m2 0h1m3 0h1m2 0h2m4 0h2m2 0h3m2 0h3m1 0h3" stroke="#0b6796"/><path d="M0 7.5h1m8 0h1m5 0h1m1 0h1m8 0h2m1 0h1m18 0h1m14 0h1m1 0h2m15 0h1m12 0h2m18 0h2m4 0h1m2 0h2m13 0h2m11 0h1m1 0h1m4 0h1m8 0h1m6 0h1m10 0h1m12 0h1m4 0h1m3 0h1m1 0h1m3 0h1m17 0h1m2 0h1m10 0h1m3 0h1m5 0h1m7 0h1m2 0h1m2 0h1m4 0h2m3 0h1m16 0h1m5 0h1m7 0h1m2 0h2m20 0h1m10 0h1m3 0h1m14 0h1m3 0h1m5 0h1m5 0h1" stroke="#057a8f"/><path d="M6 8.5h1m2 0h1m31 0h2m15 0h1m16 0h1m19 0h1m4 0h1m29 0h1m11 0h1m56 0h1m9 0h1m10 0h1m9 0h1m5 0h1m15 0h1m45 0h1m9 0h1m2 0h1m10 0h1m4 0h1m13 0h1m16 0h1m13 0h1m18 0h1m7 0h1" stroke="#00c161"/><path d="M4 8.5h1m2 0h1m3 0h1m1 0h3m4 0h1m1 0h1m6 0h2m2 0h1m1 0h1m1 0h1m7 0h1m3 0h3m4 0h1m4 0h1m1 0h1m3 0h1m9 0h1m8 0h1m3 0h2m2 0h1m3 0h2m2 0h1m8 0h2m4 0h1m6 0h1m1 0h1m4 0h1m1 0h1m4 0h1m6 0h1m4 0h1m1 0h1m2 0h1m1 0h1m3 0h1m2 0h1m7 0h1m1 0h1m2 0h1m4 0h2m3 0h1m4 0h2m8 0h1m1 0h1m3 0h1m7 0h1m7 0h1m4 0h1m1 0h3m1 0h1m7 0h1m1 0h1m21 0h1m1 0h1m1 0h2m5 0h1m1 0h1m2 0h1m4 0h2m5 0h1m8 0h2m8 0h2m2 0h1m9 0h1m4 0h1m4 0h1m3 0h1m3 0h2m4 0h2m8 0h2m3 0h1m5 0h2m3 0h1m4 0h1" stroke="#37cf33"/><path d="M2 8.5h1m14 0h1m1 0h1m3 0h1m2 0h1m4 0h1m2 0h1m1 0h1m1 0h1m1 0h1m2 0h1m3 0h1m4 0h2m1 0h1m4 0h1m1 0h1m2 0h1m6 0h1m5 0h2m1 0h4m2 0h3m6 0h2m3 0h1m3 0h2m1 0h2m3 0h2m1 0h1m1 0h2m1 0h1m1 0h1m1 0h1m3 0h1m2 0h1m1 0h1m4 0h1m6 0h1m1 0h1m2 0h1m1 0h2m1 0h1m2 0h1m2 0h1m3 0h1m1 0h2m5 0h1m2 0h1m5 0h1m4 0h3m3 0h2m3 0h2m1 0h1m2 0h1m5 0h2m5 0h1m3 0h1m1 0h1m2 0h1m9 0h2m1 0h1m2 0h1m1 0h1m1 0h2m3 0h1m1 0h1m4 0h3m3 0h1m1 0h1m5 0h4m1 0h1m2 0h1m1 0h1m1 0h2m2 0h2m2 0h1m2 0h1m2 0h1m1 0h2m5 0h1m2 0h2m2 0h1m2 0h1m1 0h1m3 0h1m3 0h1m1 0h1m2 0h2m1 0h1m1 0h1m4 0h1m4 0h3m5 0h1m1 0h3m4 0h1m1 0h1m6 0h1m1 0h1m3 0h1m2 0h1m9 0h5" stroke="#8fda00"/><path d="M0 8.5h2m3 0h1m2 0h1m1 0h1m1 0h1m3 0h1m1 0h1m8 0h2m3 0h1m6 0h1m4 0h1m1 0h1m1 0h1m8 0h1m1 0h1m4 0h1m1 0h1m3 0h1m2 0h2m1 0h1m3 0h1m4 0h1m6 0h2m9 0h2m2 0h1m2 0h1m11 0h1m12 0h3m2 0h2m1 0h1m5 0h1m8 0h1m1 0h1m2 0h1m1 0h1m1 0h1m2 0h2m1 0h1m2 0h1m2 0h3m4 0h1m1 0h1m5 0h1m2 0h2m8 0h1m2 0h2m2 0h2m1 0h1m4 0h1m3 0h2m6 0h1m2 0h1m2 0h1m1 0h1m4 0h1m2 0h1m3 0h1m1 0h1m1 0h2m5 0h1m4 0h1m2 0h1m7 0h1m3 0h1m6 0h2m5 0h1m1 0h1m4 0h2m2 0h1m6 0h1m2 0h1m2 0h1m8 0h1m3 0h1m6 0h1m4 0h1m5 0h3m8 0h1m4 0h1m5 0h1m3 0h1m1 0h1m2 0h1m1 0h1m1 0h2m2 0h1" stroke="#cee000"/><path d="M3 8.5h1m17 0h1m2 0h2m28 0h1m13 0h2m1 0h1m43 0h1m4 0h1m6 0h2m15 0h1m2 0h1m37 0h1m19 0h1m12 0h1m2 0h1m29 0h1m5 0h1m5 0h2m31 0h1m27 0h1m1 0h1m3 0h1m9 0h1m4 0h1m18 0h1m4 0h1m1 0h1m7 0h1m6 0h1m1 0h1m3 0h1" stroke="#fde400"/><path d="M19 9.5h1m32 0h1m9 0h1m43 0h1m10 0h1m40 0h1m30 0h1m1 0h1m34 0h1m5 0h1m14 0h2m33 0h2m9 0h1m7 0h1m54 0h1m15 0h1" stroke="#440154"/><path d="M0 9.5h1m8 0h1m6 0h1m31 0h1m7 0h1m20 0h1m1 0h1m1 0h1m10 0h1m9 0h1m24 0h1m10 0h1m4 0h1m23 0h1m6 0h1m10 0h1m1 0h1m13 0h1m3 0h3m6 0h1m7 0h1m1 0h1m8 0h2m15 0h1m16 0h1m2 0h2m5 0h1m13 0h1m3 0h1m12 0h1m2 0h2m8 0h1m5 0h1m1 0h3m3 0h1m5 0h3m3 0h1m9 0h1m16 0h1m5 0h1m3 0h1" stroke="#461869"/><path d="M3 9.5h1m1 0h2m5 0h1m5 0h1m2 0h1m2 0h2m5 0h3m2 0h2m3 0h1m2 0h1m1 0h2m1 0h3m1 0h1m4 0h1m2 0h1m4 0h1m1 0h2m3 0h1m1 0h2m3 0h1m1 0h1m1 0h4m5 0h1m3 0h2m8 0h1m1 0h3m1 0h2m1 0h1m1 0h1m2 0h1m1 0h1m1 0h1m2 0h1m1 0h8m1 0h1m2 0h1m2 0h2m2 0h2m1 0h1m4 0h1m3 0h1m1 0h2m4 0h1m2 0h1m6 0h2m11 0h2m4 0h2m4 0h1m3 0h1m2 0h2m3 0h3m4 0h1m4 0h1m12 0h1m1 0h1m5 0h1m6 0h1m1 0h1m1 0h1m1 0h1m1 0h1m1 0h1m1 0h1m5 0h2m5 0h1m3 0h1m1 0h1m1 0h1m4 0h1m7 0h4m1 0h1m6 0h3m1 0h2m5 0h2m7 0h1m1 0h1m1 0h1m1 0h1m3 0h1m5 0h1m1 0h2m4 0h1m5 0h2m2 0h3m2 0h1m1 0h1m1 0h1m5 0h1m2 0h3m1 0h2m1 0h1m1 0h3" stroke="#462e7d"/><path d="M1 9.5h1m5 0h1m6 0h2m1 0h1m4 0h1m4 0h1m7 0h1m2 0h3m2 0h1m1 0h1m8 0h1m2 0h1m2 0h1m4 0h1m1 0h1m3 0h1m6 0h1m9 0h1m1 0h1m3 0h3m2 0h1m3 0h3m6 0h1m2 0h1m3 0h2m1 0h1m1 0h1m4 0h1m10 0h2m2 0h1m2 0h2m2 0h1m1 0h1m1 0h2m2 0h1m2 0h1m2 0h2m1 0h1m1 0h1m4 0h1m1 0h1m4 0h1m1 0h1m1 0h1m1 0h1m1 0h1m3 0h1m7 0h2m9 0h1m1 0h1m3 0h3m5 0h1m1 0h1m5 0h1m2 0h3m4 0h2m4 0h1m1 0h2m2 0h1m1 0h1m1 0h1m1 0h1m5 0h1m2 0h2m2 0h1m1 0h2m6 0h1m1 0h1m11 0h1m8 0h2m6 0h1m2 0h1m3 0h1m7 0h1m4 0h1m1 0h1m6 0h1m1 0h2m1 0h1m2 0h1m4 0h1m2 0h2m2 0h2m3 0h1m4 0h1m4 0h2m2 0h1m8 0h1m4 0h1" stroke="#41418c"/><path d="M2 9.5h1m1 0h1m3 0h1m1 0h2m1 0h1m6 0h1m2 0h1m4 0h3m3 0h1m7 0h1m12 0h1m3 0h1m3 0h2m5 0h1m1 0h1m1 0h1m16 0h1m9 0h1m6 0h1m17 0h1m27 0h1m18 0h1m2 0h1m1 0h1m2 0h1m1 0h1m12 0h2m2 0h1m8 0h1m15 0h1m4 0h2m4 0h1m7 0h1m7 0h1m2 0h1m9 0h1m14 0h1m3 0h1m7 0h1m3 0h4m6 0h1m6 0h1m8 0h2m4 0h1m4 0h1m11 0h1m15 0h1m16 0h2m12 0h1m5 0h1" stroke="#2d5495"/><path d="M26 9.5h1m56 0h1m5 0h1m10 0h1m59 0h1m10 0h1m23 0h1m14 0h1m26 0h1m4 0h1m47 0h1m64 0h1m4 0h1m28 0h1" stroke="#0b6796"/><path d="M4 10.5h2m1 0h1m15 0h1m6 0h1m34 0h1m5 0h1m3 0h1m3 0h1m13 0h1m4 0h1m7 0h1m14 0h3m6 0h2m2 0h1m32 0h1m3 0h1m3 0h1m19 0h1m7 0h1m4 0h1m1 0h1m32 0h1m3 0h1m3 0h1m6 0h1m2 0h1m22 0h1m10 0h3m16 0h1m13 0h1m4 0h1m3 0h2m1 0h1m10 0h2m20 0h1m4 0h1m11 0h1" stroke="#461869"/><path d="M0 10.5h1m15 0h1m2 0h1m6 0h1m1 0h2m3 0h1m4 0h2m1 0h1m2 0h1m2 0h1m4 0h1m6 0h1m2 0h1m1 0h1m2 0h1m1 0h1m4 0h1m8 0h2m2 0h1m9 0h1m4 0h1m1 0h1m10 0h1m19 0h1m2 0h2m14 0h1m7 0h1m2 0h1m4 0h1m9 0h1m5 0h1m7 0h1m1 0h1m5 0h1m10 0h2m10 0h2m5 0h2m1 0h3m1 0h1m1 0h1m11 0h1m5 0h2m6 0h1m7 0h1m3 0h1m1 0h1m3 0h1m4 0h1m1 0h1m1 0h1m3 0h1m3 0h1m2 0h2m1 0h1m3 0h1m28 0h1m3 0h1m8 0h1m1 0h1m4 0h1m2 0h2m2 0h1m8 0h1m1 0h3m2 0h1m1 0h1m11 0h2" stroke="#462e7d"/><path d="M1 10.5h2m3 0h1m1 0h2m5 0h1m1 0h1m3 0h1m2 0h2m1 0h1m4 0h1m1 0h4m8 0h1m1 0h3m2 0h2m2 0h1m3 0h1m1 0h1m2 0h1m6 0h1m2 0h2m2 0h3m3 0h1m1 0h2m1 0h2m2 0h1m3 0h3m1 0h1m1 0h1m1 0h2m2 0h2m1 0h1m1 0h1m2 0h1m7 0h1m1 0h1m6 0h2m2 0h1m3 0h2m2 0h1m3 0h2m2 0h1m1 0h2m1 0h1m4 0h1m2 0h1m2 0h2m2 0h4m1 0h1m2 0h2m1 0h2m1 0h3m4 0h1m1 0h3m9 0h2m2 0h2m4 0h1m1 0h2m2 0h1m1 0h2m7 0h1m3 0h1m1 0h1m1 0h1m1 0h1m3 0h1m1 0h1m2 0h1m6 0h1m1 0h1m2 0h1m10 0h1m2 0h1m2 0h1m1 0h1m11 0h1m8 0h1m1 0h1m6 0h1m2 0h2m1 0h3m2 0h1m4 0h1m7 0h2m5 0h2m2 0h1m1 0h1m2 0h1m7 0h2m6 0h1m1 0h1m5 0h1m4 0h1m5 0h2m2 0h1" stroke="#41418c"/><path d="M3 10.5h1m6 0h1m2 0h1m4 0h1m1 0h1m10 0h1m8 0h1m1 0h1m2 0h1m5 0h1m3 0h1m2 0h1m9 0h1m1 0h1m1 0h1m12 0h1m4 0h1m5 0h1m12 0h1m7 0h2m6 0h2m6 0h1m7 0h3m2 0h1m3 0h1m6 0h1m2 0h1m3 0h1m3 0h1m5 0h1m8 0h1m5 0h1m3 0h1m10 0h1m1 0h2m1 0h1m7 0h1m2 0h1m1 0h1m11 0h1m5 0h1m8 0h1m6 0h1m5 0h1m2 0h1m5 0h4m1 0h1m1 0h1m3 0h1m4 0h1m1 0h1m9 0h1m1 0h1m2 0h1m2 0h1m5 0h1m1 0h2m2 0h2m2 0h1m6 0h3m2 0h1m8 0h1m2 0h2m8 0h1m4 0h2m5 0h1m2 0h1m10 0h1m1 0h1m3 0h1m2 0h1m2 0h2" stroke="#2d5495"/><path d="M11 10.5h2m1 0h1m28 0h1m16 0h1m49 0h1m2 0h1m10 0h1m7 0h1m14 0h1m1 0h1m1 0h1m3 0h1m7 0h1m18 0h1m35 0h1m9 0h1m26 0h1m7 0h1m4 0h1m1 0h1m20 0h1m1 0h1m9 0h1m6 0h1m6 0h1m9 0h1m11 0h1m6 0h1m12 0h2m10 0h1m3 0h1m15 0h1" stroke="#0b6796"/><path d="M22 10.5h1m33 0h1m21 0h1m15 0h1m25 0h1m7 0h1m69 0h1m6 0h1m13 0h1m11 0h1m13 0h1m4 0h1m26 0h1m58 0h1m33 0h1m17 0h1" stroke="#057a8f"/><path d="M5 11.5h1m5 0h1m1 0h2m29 0h1m1 0h1m5 0h1m15 0h1m1 0h1m14 0h2m3 0h1m8 0h1m15 0h1m15 0h1m5 0h1m8 0h1m14 0h1m1 0h1m3 0h1m15 0h1m14 0h1m7 0h1m36 0h1m8 0h1m1 0h1m23 0h1m30 0h1m4 0h1m20 0h1m19 0h1m1 0h1m11 0h1m5 0h1m1 0h1m4 0h1m7 0h1" stroke="#462e7d"/><path d="M2 11.5h3m3 0h3m5 0h2m1 0h2m2 0h2m1 0h3m1 0h1m5 0h1m1 0h1m4 0h1m5 0h3m6 0h1m2 0h2m1 0h4m1 0h1m1 0h2m1 0h1m1 0h4m1 0h3m3 0h1m6 0h2m2 0h1m4 0h3m2 0h7m2 0h1m1 0h2m1 0h1m1 0h1m2 0h1m1 0h2m1 0h1m1 0h1m1 0h1m4 0h1m1 0h1m1 0h1m2 0h1m1 0h2m3 0h1m2 0h2m2 0h1m1 0h1m1 0h1m1 0h2m1 0h3m3 0h1m1 0h2m3 0h3m3 0h2m1 0h4m2 0h1m2 0h1m1 0h2m4 0h1m1 0h1m3 0h1m3 0h2m2 0h1m1 0h2m1 0h1m4 0h1m1 0h2m1 0h1m2 0h1m4 0h2m2 0h1m3 0h1m1 0h1m2 0h1m1 0h5m2 0h1m3 0h1m2 0h2m1 0h2m1 0h5m2 0h1m3 0h1m6 0h1m1 0h1m1 0h1m5 0h3m5 0h1m4 0h1m1 0h1m1 0h1m2 0h1m5 0h1m3 0h1m1 0h1m1 0h2m1 0h1m1 0h4m3 0h1m5 0h1m3 0h1m3 0h1m3 0h1m8 0h5m3 0h2m2 0h2" stroke="#41418c"/><path d="M0 11.5h2m4 0h2m4 0h1m2 0h1m2 0h1m2 0h2m2 0h1m3 0h1m1 0h5m1 0h1m2 0h3m2 0h1m1 0h2m4 0h5m1 0h1m3 0h1m9 0h1m6 0h1m3 0h1m3 0h1m2 0h3m2 0h2m2 0h3m3 0h2m8 0h1m1 0h1m2 0h1m1 0h1m1 0h2m8 0h1m3 0h2m1 0h1m1 0h1m2 0h1m1 0h1m2 0h3m1 0h2m2 0h1m4 0h1m8 0h3m1 0h1m2 0h2m4 0h3m2 0h1m7 0h2m1 0h1m3 0h3m1 0h1m1 0h3m1 0h2m3 0h2m1 0h1m2 0h1m1 0h1m1 0h2m1 0h1m4 0h2m2 0h2m3 0h1m3 0h1m2 0h1m1 0h2m7 0h1m2 0h3m1 0h2m5 0h1m6 0h1m1 0h2m2 0h1m2 0h1m1 0h1m1 0h1m1 0h1m1 0h4m4 0h1m1 0h3m1 0h1m1 0h2m1 0h1m1 0h1m2 0h1m1 0h4m2 0h1m3 0h1m1 0h1m2 0h1m1 0h1m4 0h1m4 0h4m2 0h2m1 0h2m2 0h3m2 0h1m1 0h1m1 0h2m6 0h2m3 0h2m2 0h3" stroke="#2d5495"/><path d="M39 11.5h1m20 0h1m14 0h1m13 0h1m38 0h1m4 0h1m4 0h1m31 0h1m26 0h1m21 0h1m11 0h1m6 0h1m7 0h1m3 0h1m10 0h1m6 0h1m18 0h1m4 0h1m2 0h2m1 0h1m21 0h1m7 0h1m9 0h2m14 0h1m8 0h1m15 0h1" stroke="#0b6796"/><path d="M8 12.5h1m15 0h1m16 0h2m1 0h1m4 0h1m9 0h1m33 0h2m44 0h1m42 0h1m11 0h1m4 0h1m18 0h1m9 0h1m39 0h1m3 0h1m3 0h1m7 0h1m14 0h1m35 0h1m4 0h1m8 0h1m14 0h1m9 0h1" stroke="#0b6796"/><path d="M1 12.5h4m1 0h1m2 0h3m1 0h2m2 0h3m5 0h2m1 0h1m2 0h5m2 0h3m2 0h1m1 0h1m1 0h2m2 0h1m3 0h4m1 0h1m1 0h2m1 0h1m2 0h2m1 0h3m1 0h5m2 0h7m3 0h1m2 0h2m1 0h4m3 0h1m1 0h1m2 0h8m2 0h2m3 0h1m1 0h1m1 0h6m1 0h1m3 0h9m2 0h5m2 0h1m1 0h1m1 0h4m1 0h2m1 0h2m1 0h3m3 0h3m2 0h2m1 0h2m2 0h2m2 0h2m1 0h1m2 0h1m5 0h1m2 0h6m1 0h1m1 0h2m1 0h6m2 0h5m1 0h1m2 0h3m1 0h3m3 0h4m1 0h2m2 0h3m2 0h2m1 0h2m1 0h3m3 0h1m1 0h1m2 0h1m1 0h2m1 0h2m1 0h11m3 0h6m1 0h2m1 0h4m4 0h5m1 0h4m1 0h1m4 0h3m2 0h3m3 0h2m2 0h10m1 0h1m2 0h1m1 0h1m1 0h1m1 0h1m1 0h1m2 0h1m1 0h2m1 0h2m2 0h6m1 0h4m1 0h1m1 0h1" stroke="#057a8f"/><path d="M0 12.5h1m4 0h1m1 0h1m4 0h1m2 0h2m3 0h4m3 0h1m1 0h2m5 0h2m8 0h1m3 0h1m1 0h3m6 0h1m2 0h1m1 0h2m2 0h1m3 0h1m5 0h2m7 0h3m5 0h1m4 0h3m1 0h1m1 0h2m8 0h2m2 0h3m1 0h1m1 0h1m6 0h1m1 0h2m10 0h2m5 0h2m1 0h1m1 0h1m4 0h1m2 0h1m2 0h1m3 0h3m4 0h1m2 0h1m2 0h2m2 0h1m3 0h1m2 0h1m1 0h5m1 0h2m6 0h1m4 0h1m7 0h1m5 0h1m1 0h2m3 0h1m3 0h3m4 0h1m2 0h2m3 0h2m2 0h1m7 0h2m3 0h2m1 0h1m5 0h1m12 0h2m6 0h1m2 0h1m4 0h4m5 0h1m4 0h1m1 0h3m4 0h1m4 0h3m3 0h1m10 0h1m1 0h1m2 0h1m1 0h1m1 0h1m1 0h1m2 0h1m1 0h1m2 0h1m2 0h2m6 0h1m4 0h1m1 0h1" stroke="#008c88"/><path d="M8 13.5h1m10 0h1m9 0h1m25 0h1m5 0h1m8 0h1m16 0h1m6 0h1m30 0h1m25 0h1m3 0h1m12 0h1m3 0h1m10 0h1m21 0h2m4 0h1m8 0h1m8 0h1m3 0h1m42 0h1m11 0h1m14 0h1m24 0h1m1 0h1m2 0h1m2 0h1m1 0h1m34 0h1m9 0h1" stroke="#461869"/><path d="M0 13.5h3m2 0h2m3 0h3m1 0h1m1 0h2m2 0h6m1 0h2m2 0h1m1 0h1m6 0h1m1 0h1m2 0h2m2 0h3m1 0h1m2 0h1m5 0h2m2 0h3m2 0h1m2 0h1m2 0h1m1 0h1m2 0h2m1 0h1m3 0h4m2 0h5m1 0h2m2 0h1m2 0h2m6 0h3m3 0h3m2 0h2m2 0h3m3 0h2m4 0h1m3 0h2m4 0h2m2 0h4m1 0h3m1 0h2m5 0h1m1 0h1m1 0h1m2 0h3m2 0h2m1 0h2m2 0h6m1 0h1m1 0h1m2 0h1m4 0h1m6 0h1m1 0h1m2 0h2m2 0h1m1 0h2m1 0h3m2 0h1m2 0h2m1 0h2m3 0h2m3 0h6m2 0h1m2 0h6m1 0h2m1 0h4m2 0h2m2 0h1m2 0h2m2 0h1m2 0h1m1 0h8m3 0h4m1 0h1m2 0h4m1 0h1m1 0h1m1 0h1m1 0h4m1 0h1m7 0h1m2 0h2m1 0h2m3 0h2m1 0h1m2 0h10m1 0h1m3 0h2m1 0h1m4 0h1m1 0h1m2 0h1m1 0h1m2 0h1m3 0h3m1 0h3m1 0h1" stroke="#462e7d"/><path d="M3 13.5h2m2 0h1m1 0h1m3 0h1m1 0h1m10 0h1m3 0h1m3 0h6m1 0h1m1 0h1m3 0h2m3 0h1m4 0h4m3 0h2m3 0h1m2 0h2m1 0h2m1 0h1m1 0h1m3 0h1m1 0h1m1 0h1m4 0h1m6 0h1m2 0h2m1 0h2m2 0h6m3 0h3m7 0h2m3 0h3m2 0h3m2 0h3m2 0h2m1 0h1m3 0h1m4 0h1m3 0h1m3 0h3m2 0h1m1 0h1m1 0h2m4 0h1m2 0h1m2 0h2m6 0h1m1 0h1m1 0h2m3 0h2m1 0h1m1 0h4m1 0h1m1 0h1m3 0h2m1 0h1m7 0h1m5 0h1m2 0h2m3 0h2m7 0h2m1 0h2m9 0h1m5 0h1m2 0h2m2 0h1m2 0h1m2 0h2m1 0h1m10 0h1m4 0h1m1 0h2m4 0h1m1 0h1m1 0h1m1 0h1m8 0h1m1 0h2m3 0h1m5 0h3m2 0h1m1 0h2m10 0h1m1 0h3m2 0h1m2 0h3m1 0h1m1 0h2m3 0h2m1 0h3m3 0h1m3 0h1" stroke="#41418c"/><path d="M18 13.5h1m13 0h1m11 0h1m9 0h1m26 0h1m44 0h1m15 0h1m93 0h2m7 0h1m4 0h1m17 0h1m14 0h1m18 0h1m28 0h1m10 0h1" stroke="#2d5495"/><path d="M0 14.5h2m1 0h1m1 0h1m2 0h1m2 0h1m1 0h1m9 0h2m1 0h1m2 0h2m3 0h1m12 0h1m10 0h1m1 0h2m8 0h1m4 0h2m1 0h2m21 0h1m2 0h1m6 0h2m3 0h3m4 0h1m7 0h1m6 0h1m6 0h1m2 0h1m4 0h1m1 0h1m3 0h2m5 0h1m4 0h2m1 0h2m6 0h1m3 0h1m6 0h1m8 0h2m9 0h2m1 0h1m2 0h1m6 0h3m2 0h1m9 0h1m4 0h1m3 0h1m2 0h1m9 0h1m1 0h1m13 0h2m5 0h2m1 0h3m5 0h1m9 0h1m5 0h2m2 0h1m1 0h1m7 0h1m2 0h1m20 0h1m1 0h1m20 0h1m8 0h1m2 0h1m5 0h1" stroke="#461869"/><path d="M2 14.5h1m1 0h1m1 0h2m1 0h2m1 0h1m1 0h1m1 0h7m2 0h1m2 0h1m2 0h3m3 0h1m3 0h2m1 0h3m1 0h1m1 0h4m1 0h3m1 0h1m2 0h3m1 0h4m2 0h2m6 0h7m1 0h13m2 0h1m1 0h4m1 0h1m2 0h3m4 0h3m1 0h4m1 0h2m1 0h2m1 0h2m2 0h3m1 0h2m1 0h1m2 0h1m1 0h2m1 0h1m1 0h1m4 0h1m1 0h3m1 0h4m2 0h1m2 0h2m1 0h3m1 0h3m2 0h5m1 0h6m1 0h1m2 0h9m2 0h1m1 0h2m1 0h3m1 0h2m3 0h2m1 0h4m1 0h4m1 0h4m1 0h3m1 0h1m2 0h7m1 0h1m1 0h1m2 0h3m1 0h8m2 0h2m1 0h1m3 0h1m4 0h1m1 0h1m2 0h1m1 0h3m1 0h2m2 0h5m2 0h2m1 0h1m1 0h7m1 0h2m1 0h5m1 0h1m1 0h9m1 0h2m1 0h1m3 0h2m1 0h2m1 0h11m2 0h7m3 0h1m1 0h5m2 0h6" stroke="#462e7d"/><path d="M15 14.5h1m11 0h1m7 0h2m1 0h3m2 0h1m5 0h1m4 0h1m10 0h1m5 0h1m2 0h1m2 0h1m9 0h1m14 0h1m6 0h1m9 0h1m8 0h1m5 0h1m2 0h1m4 0h1m4 0h1m2 0h1m6 0h2m3 0h1m15 0h1m8 0h1m12 0h1m22 0h1m12 0h1m15 0h1m8 0h1m4 0h1m3 0h1m12 0h1m1 0h1m6 0h1m1 0h1m1 0h1m2 0h1m3 0h1m2 0h1m29 0h1m1 0h1m9 0h1m5 0h2m2 0h1m2 0h1m11 0h1m8 0h1m1 0h1m8 0h1" stroke="#41418c"/><path d="M15 15.5h1m15 0h1m19 0h1m6 0h1m13 0h1m28 0h1m12 0h2m27 0h1m27 0h1m3 0h1m1 0h1m5 0h1m15 0h1m8 0h1m2 0h1m1 0h1m1 0h1m24 0h1m9 0h1m11 0h1m16 0h2m5 0h1m6 0h1m17 0h1m49 0h1m15 0h1m4 0h1" stroke="#0b6796"/><path d="M0 15.5h14m3 0h3m1 0h5m2 0h3m1 0h5m1 0h4m1 0h3m2 0h1m1 0h1m1 0h1m2 0h2m2 0h2m2 0h4m1 0h1m1 0h1m3 0h9m2 0h3m1 0h4m1 0h7m2 0h1m1 0h5m1 0h3m2 0h3m1 0h3m2 0h9m1 0h4m1 0h2m2 0h7m1 0h1m1 0h2m4 0h4m1 0h5m3 0h2m4 0h1m1 0h2m1 0h8m1 0h3m1 0h2m1 0h4m1 0h3m1 0h2m1 0h1m3 0h8m1 0h1m1 0h4m1 0h1m4 0h3m1 0h4m1 0h4m1 0h4m1 0h2m1 0h3m2 0h2m1 0h1m1 0h8m1 0h1m2 0h5m1 0h3m1 0h2m1 0h4m1 0h6m1 0h3m1 0h1m1 0h7m1 0h5m1 0h12m1 0h4m2 0h1m1 0h4m1 0h5m2 0h2m2 0h1m1 0h3m1 0h8m1 0h4m2 0h2m1 0h4m2 0h4m1 0h1" stroke="#057a8f"/><path d="M14 15.5h1m1 0h1m3 0h1m5 0h2m9 0h1m4 0h1m3 0h2m1 0h1m3 0h2m2 0h1m3 0h2m4 0h1m1 0h1m1 0h1m1 0h1m9 0h2m3 0h1m4 0h1m8 0h1m1 0h1m5 0h1m8 0h1m3 0h2m9 0h1m4 0h1m2 0h1m8 0h1m1 0h1m2 0h4m4 0h1m5 0h1m1 0h1m3 0h1m1 0h1m1 0h1m11 0h1m3 0h1m7 0h1m9 0h1m9 0h1m1 0h1m4 0h1m1 0h4m8 0h1m9 0h1m2 0h1m4 0h1m2 0h1m1 0h1m8 0h1m12 0h1m7 0h1m6 0h1m3 0h1m9 0h1m5 0h1m12 0h1m4 0h2m1 0h1m4 0h1m5 0h2m3 0h1m1 0h1m3 0h1m14 0h1m2 0h1m4 0h2m4 0h1m1 0h1" stroke="#008c88"/><path d="M142 16.5h1m186 0h1" stroke="#461869"/><path d="M8 16.5h1m2 0h1m1 0h1m2 0h1m5 0h1m1 0h1m16 0h1m5 0h1m2 0h1m2 0h1m10 0h1m10 0h1m5 0h1m13 0h1m3 0h2m8 0h1m2 0h1m2 0h2m2 0h1m4 0h2m3 0h1m1 0h2m7 0h1m5 0h1m5 0h1m8 0h2m5 0h2m3 0h1m1 0h1m8 0h2m3 0h2m9 0h1m2 0h3m13 0h1m8 0h1m8 0h1m1 0h2m12 0h1m3 0h2m6 0h1m12 0h1m1 0h1m1 0h1m6 0h1m2 0h1m1 0h2m4 0h1m14 0h4m7 0h1m6 0h1m2 0h1m12 0h1m1 0h4m2 0h2m1 0h1m12 0h1m2 0h1m1 0h1m4 0h1m1 0h1m4 0h1m1 0h1m2 0h1" stroke="#462e7d"/><path d="M0 16.5h3m1 0h2m6 0h1m1 0h2m4 0h1m9 0h2m2 0h2m1 0h1m1 0h1m3 0h3m3 0h1m2 0h1m1 0h1m1 0h1m1 0h4m1 0h1m1 0h2m2 0h1m2 0h3m2 0h4m1 0h7m1 0h2m1 0h2m8 0h1m1 0h4m1 0h2m1 0h1m3 0h2m1 0h3m4 0h1m5 0h3m1 0h3m5 0h1m1 0h4m5 0h5m2 0h1m2 0h2m3 0h2m1 0h1m2 0h2m3 0h2m2 0h1m1 0h1m2 0h1m1 0h1m1 0h1m1 0h2m2 0h2m3 0h11m1 0h1m2 0h1m1 0h2m2 0h1m1 0h8m1 0h1m3 0h5m2 0h1m1 0h2m1 0h2m4 0h2m2 0h1m1 0h1m1 0h1m1 0h2m1 0h5m5 0h1m1 0h1m1 0h2m2 0h1m5 0h1m1 0h1m1 0h3m4 0h1m1 0h1m2 0h2m5 0h1m7 0h1m1 0h3m1 0h2m3 0h1m1 0h2m1 0h4m7 0h2m2 0h1m1 0h3m1 0h6m1 0h1m4 0h1m1 0h4m1 0h1m1 0h4m1 0h1m2 0h1m1 0h4" stroke="#41418c"/><path d="M3 16.5h1m3 0h1m1 0h2m8 0h1m1 0h1m1 0h1m1 0h5m2 0h2m2 0h1m1 0h1m1 0h1m1 0h1m3 0h1m1 0h1m2 0h1m3 0h1m1 0h1m4 0h1m4 0h2m1 0h2m4 0h1m12 0h1m2 0h1m3 0h1m1 0h1m2 0h2m1 0h1m9 0h1m8 0h1m2 0h1m1 0h1m1 0h1m5 0h1m4 0h1m1 0h2m6 0h1m1 0h3m8 0h2m4 0h1m5 0h1m2 0h3m5 0h1m4 0h1m1 0h1m1 0h1m2 0h1m17 0h1m2 0h1m1 0h1m2 0h2m20 0h1m2 0h1m5 0h1m5 0h2m3 0h1m1 0h1m2 0h1m6 0h1m1 0h1m2 0h1m1 0h1m3 0h1m2 0h1m2 0h1m1 0h1m6 0h3m1 0h1m1 0h1m7 0h1m1 0h5m1 0h1m9 0h2m1 0h1m2 0h1m4 0h1m1 0h1m13 0h1m6 0h1m2 0h2m17 0h1" stroke="#2d5495"/><path d="M6 16.5h1m10 0h2m78 0h1m143 0h1m6 0h1m10 0h1m44 0h1m7 0h1" stroke="#0b6796"/><path d="M6 17.5h1m18 0h1m46 0h1m19 0h1m5 0h1m23 0h1m25 0h1m8 0h1m9 0h1m5 0h2m17 0h1m25 0h1m3 0h1m35 0h1m17 0h1m39 0h1m3 0h1m2 0h1m16 0h1m6 0h1m9 0h1m4 0h1m4 0h1m4 0h1m15 0h1m8 0h2" stroke="#461869"/><path d="M9 17.5h1m24 0h1m9 0h1m5 0h2m15 0h1m13 0h1m2 0h1m14 0h1m2 0h1m12 0h1m12 0h1m5 0h1m1 0h2m20 0h2m3 0h1m6 0h1m16 0h4m11 0h1m3 0h1m17 0h1m12 0h1m4 0h1m11 0h1m10 0h1m2 0h1m4 0h1m1 0h1m4 0h1m17 0h1m3 0h1m1 0h1m3 0h2m7 0h1m12 0h1m14 0h2m11 0h1m2 0h1m3 0h1m2 0h1m1 0h1m11 0h2" stroke="#462e7d"/><path d="M0 17.5h1m7 0h1m4 0h1m9 0h1m8 0h1m5 0h2m5 0h1m2 0h1m3 0h1m6 0h2m17 0h2m2 0h1m6 0h1m5 0h2m3 0h1m3 0h1m7 0h1m12 0h1m1 0h1m7 0h1m5 0h1m1 0h1m2 0h2m7 0h1m5 0h1m3 0h2m2 0h1m6 0h1m8 0h2m10 0h2m1 0h1m6 0h2m4 0h1m5 0h1m1 0h1m6 0h1m1 0h1m1 0h2m4 0h1m2 0h1m6 0h2m3 0h1m6 0h1m1 0h2m3 0h1m1 0h2m7 0h1m3 0h2m3 0h1m1 0h3m3 0h1m1 0h1m1 0h1m10 0h1m8 0h1m1 0h1m4 0h1m2 0h1m4 0h1m6 0h1m7 0h2m1 0h1m2 0h1m8 0h1m21 0h1m5 0h2m2 0h1" stroke="#41418c"/><path d="M2 17.5h1m1 0h2m1 0h1m3 0h1m3 0h2m1 0h1m5 0h1m1 0h1m1 0h1m2 0h1m1 0h1m1 0h1m7 0h1m9 0h3m5 0h2m2 0h1m2 0h4m1 0h2m1 0h1m3 0h1m2 0h1m1 0h1m2 0h1m4 0h1m13 0h1m2 0h2m6 0h1m1 0h1m2 0h1m2 0h1m3 0h1m2 0h1m4 0h1m1 0h1m1 0h1m1 0h1m4 0h1m2 0h2m2 0h1m11 0h1m3 0h1m2 0h1m1 0h1m3 0h4m8 0h1m5 0h1m4 0h2m3 0h1m1 0h2m1 0h2m1 0h1m2 0h1m4 0h3m3 0h1m12 0h2m1 0h1m3 0h1m7 0h1m1 0h1m2 0h1m7 0h1m1 0h1m2 0h1m1 0h1m1 0h1m11 0h1m2 0h1m3 0h2m5 0h1m4 0h4m2 0h1m3 0h1m4 0h2m2 0h3m1 0h1m1 0h1m4 0h1m1 0h1m6 0h1m2 0h1m1 0h1m6 0h1m7 0h1m6 0h4m5 0h1m2 0h2m2 0h2m3 0h1" stroke="#2d5495"/><path d="M1 17.5h1m1 0h1m10 0h1m2 0h1m1 0h3m7 0h1m6 0h1m5 0h1m3 0h1m9 0h2m17 0h1m10 0h1m3 0h1m6 0h1m3 0h1m3 0h1m7 0h1m2 0h2m3 0h1m7 0h1m1 0h1m13 0h1m4 0h1m3 0h1m7 0h1m1 0h1m13 0h2m14 0h2m5 0h1m1 0h1m6 0h1m12 0h1m5 0h1m4 0h1m1 0h1m2 0h2m9 0h1m5 0h2m13 0h1m12 0h3m1 0h1m5 0h1m8 0h1m1 0h2m17 0h1m11 0h1m1 0h2m13 0h1m5 0h2m12 0h1m1 0h1m8 0h2" stroke="#0b6796"/><path d="M10 17.5h1m16 0h1m2 0h1m9 0h2m5 0h1m1 0h1m8 0h1m4 0h1m13 0h1m9 0h1m3 0h1m2 0h1m8 0h1m4 0h1m10 0h1m4 0h1m7 0h1m6 0h1m11 0h1m8 0h1m10 0h1m19 0h1m4 0h1m19 0h1m18 0h1m10 0h1m64 0h1m13 0h1m22 0h1m17 0h1m9 0h1m12 0h1" stroke="#057a8f"/><path d="M12 17.5h1m9 0h1m14 0h1m26 0h1m1 0h1m39 0h1m2 0h1m4 0h1m65 0h1m62 0h1m8 0h1m2 0h1m10 0h1m25 0h1m50 0h1m25 0h1m4 0h1m2 0h1" stroke="#008c88"/><path d="M29 18.5h1m6 0h1m3 0h1m3 0h1m2 0h1m59 0h1m9 0h1m2 0h1m21 0h1m21 0h1m18 0h1m20 0h1m22 0h1m1 0h1m7 0h1m21 0h1m2 0h1m22 0h1m2 0h2m22 0h1m2 0h1m13 0h1m4 0h1m14 0h1m2 0h1m16 0h1m8 0h1m10 0h1m4 0h1m1 0h1" stroke="#461869"/><path d="M1 18.5h1m5 0h1m3 0h4m2 0h2m2 0h1m5 0h2m1 0h1m4 0h1m1 0h2m4 0h1m2 0h1m2 0h1m3 0h1m4 0h1m7 0h2m1 0h1m2 0h1m3 0h1m1 0h1m4 0h1m5 0h1m5 0h1m1 0h1m2 0h2m3 0h1m2 0h1m1 0h2m2 0h1m13 0h1m2 0h1m6 0h1m4 0h1m2 0h1m1 0h1m4 0h1m2 0h5m6 0h2m2 0h1m1 0h1m4 0h3m3 0h1m1 0h1m8 0h2m11 0h1m1 0h2m5 0h1m3 0h2m3 0h1m1 0h1m1 0h2m2 0h1m1 0h1m5 0h2m3 0h1m6 0h1m8 0h1m4 0h1m1 0h1m16 0h1m9 0h1m3 0h1m3 0h1m7 0h1m5 0h1m2 0h1m2 0h1m9 0h1m1 0h2m1 0h1m5 0h3m1 0h1m2 0h1m9 0h1m1 0h1m9 0h2m5 0h1m2 0h1m4 0h1" stroke="#462e7d"/><path d="M3 18.5h1m4 0h1m11 0h1m5 0h1m4 0h1m2 0h1m4 0h1m1 0h2m2 0h1m2 0h1m1 0h1m1 0h1m1 0h4m1 0h3m2 0h2m2 0h1m5 0h2m1 0h1m1 0h4m1 0h1m6 0h2m3 0h1m9 0h1m2 0h1m2 0h2m1 0h1m8 0h2m4 0h1m2 0h1m1 0h2m2 0h2m6 0h1m6 0h1m6 0h1m1 0h1m1 0h1m3 0h2m1 0h1m3 0h2m10 0h1m1 0h1m1 0h2m3 0h1m2 0h1m1 0h1m2 0h1m1 0h1m1 0h1m4 0h1m4 0h2m3 0h2m6 0h1m6 0h2m3 0h1m1 0h1m6 0h1m1 0h2m4 0h1m3 0h1m6 0h4m5 0h4m1 0h1m3 0h1m2 0h2m7 0h1m4 0h5m5 0h2m2 0h1m5 0h1m3 0h1m7 0h1m1 0h1m1 0h3m5 0h1m2 0h1m2 0h4m1 0h1m1 0h1m1 0h1m5 0h1m7 0h1m2 0h1m4 0h1m3 0h1m4 0h1" stroke="#41418c"/><path d="M5 18.5h1m4 0h1m4 0h2m2 0h1m2 0h1m1 0h2m6 0h1m18 0h1m10 0h2m6 0h2m1 0h1m12 0h2m2 0h1m3 0h1m3 0h2m2 0h1m1 0h1m11 0h1m2 0h1m2 0h2m3 0h1m1 0h1m2 0h1m1 0h1m6 0h1m2 0h2m4 0h1m1 0h1m2 0h1m6 0h1m3 0h1m7 0h2m6 0h1m4 0h1m3 0h1m2 0h1m3 0h1m2 0h1m1 0h1m2 0h1m6 0h1m2 0h1m1 0h1m4 0h1m14 0h1m2 0h1m3 0h1m2 0h2m1 0h2m4 0h1m6 0h1m2 0h1m1 0h1m1 0h1m4 0h1m1 0h3m15 0h1m2 0h2m2 0h1m10 0h1m1 0h1m3 0h1m2 0h2m1 0h1m1 0h1m1 0h1m2 0h1m2 0h1m18 0h2m4 0h1m8 0h2m1 0h2m4 0h1m1 0h1m2 0h1m1 0h2m3 0h1m6 0h1" stroke="#2d5495"/><path d="M0 18.5h1m1 0h1m1 0h1m1 0h1m2 0h1m13 0h1m9 0h1m51 0h1m2 0h1m4 0h1m9 0h1m14 0h1m2 0h1m4 0h1m10 0h1m11 0h1m1 0h1m29 0h1m3 0h1m3 0h1m9 0h1m12 0h1m2 0h1m17 0h1m1 0h1m14 0h1m7 0h1m1 0h1m5 0h1m10 0h1m13 0h2m2 0h1m2 0h1m5 0h1m1 0h1m25 0h1m9 0h1m24 0h2m8 0h1m15 0h1m1 0h1m3 0h1" stroke="#0b6796"/><path d="M72 19.5h1m18 0h1m5 0h1m21 0h1m21 0h1m5 0h1m14 0h1m152 0h1m2 0h1" stroke="#462e7d"/><path d="M5 19.5h1m5 0h1m15 0h1m4 0h1m1 0h2m6 0h1m4 0h1m7 0h2m1 0h1m6 0h1m4 0h1m2 0h1m1 0h2m5 0h1m1 0h1m7 0h2m2 0h1m7 0h1m1 0h2m9 0h1m7 0h1m6 0h1m6 0h1m2 0h1m10 0h1m2 0h1m2 0h1m6 0h1m2 0h1m5 0h1m3 0h1m9 0h1m8 0h1m5 0h1m1 0h1m18 0h1m12 0h1m2 0h1m6 0h1m4 0h1m11 0h1m19 0h1m5 0h1m10 0h1m2 0h1m10 0h1m2 0h1m3 0h1m27 0h1m7 0h1m3 0h2m18 0h2m4 0h1m3 0h1" stroke="#41418c"/><path d="M0 19.5h3m3 0h1m2 0h2m1 0h3m1 0h7m2 0h1m10 0h3m1 0h1m2 0h2m4 0h1m4 0h1m2 0h1m1 0h2m1 0h3m1 0h1m1 0h1m5 0h1m2 0h1m2 0h2m1 0h1m1 0h3m1 0h1m5 0h1m2 0h5m5 0h4m6 0h1m2 0h2m1 0h1m1 0h1m1 0h1m2 0h1m1 0h6m1 0h1m2 0h1m4 0h3m1 0h1m1 0h2m1 0h2m2 0h1m1 0h1m6 0h2m2 0h1m1 0h2m2 0h2m5 0h1m2 0h1m3 0h1m13 0h1m4 0h5m1 0h5m5 0h1m1 0h4m1 0h2m1 0h2m2 0h1m1 0h1m3 0h2m3 0h2m3 0h2m3 0h1m1 0h3m1 0h1m1 0h2m1 0h1m1 0h2m1 0h3m3 0h1m1 0h1m7 0h1m1 0h1m2 0h1m5 0h1m2 0h1m2 0h2m2 0h1m2 0h1m1 0h1m1 0h2m8 0h2m1 0h3m2 0h1m2 0h2m5 0h1m1 0h5m2 0h2m6 0h1m3 0h1m1 0h1m1 0h2m1 0h3m2 0h1m2 0h1m1 0h1m3 0h5" stroke="#2d5495"/><path d="M3 19.5h2m2 0h2m14 0h2m1 0h1m1 0h4m1 0h1m5 0h1m1 0h1m4 0h1m1 0h1m2 0h1m1 0h1m7 0h1m5 0h1m1 0h1m1 0h1m6 0h2m10 0h1m3 0h1m8 0h1m1 0h1m6 0h5m3 0h1m6 0h1m1 0h2m13 0h1m1 0h1m4 0h1m8 0h1m3 0h2m1 0h2m3 0h2m4 0h1m3 0h2m1 0h2m1 0h1m2 0h1m1 0h1m1 0h3m1 0h5m3 0h1m2 0h1m1 0h1m5 0h1m5 0h1m1 0h3m13 0h1m1 0h1m1 0h2m3 0h2m3 0h3m2 0h2m6 0h1m1 0h1m4 0h1m2 0h1m3 0h2m2 0h1m1 0h2m2 0h2m2 0h1m1 0h2m2 0h2m3 0h2m1 0h2m8 0h1m4 0h1m1 0h3m1 0h1m3 0h1m3 0h2m1 0h2m3 0h3m2 0h1m6 0h1m4 0h4m1 0h1m1 0h1m1 0h1m1 0h1m2 0h1m6 0h2m3 0h2m6 0h1" stroke="#0b6796"/><path d="M15 19.5h1m29 0h1m4 0h1m1 0h1m35 0h1m34 0h1m21 0h1m38 0h1m7 0h1m12 0h1m3 0h1m1 0h1m18 0h1m4 0h1m27 0h1m10 0h1m17 0h1m2 0h1m10 0h1m20 0h1m3 0h1m1 0h1m13 0h1m23 0h1" stroke="#057a8f"/><path d="M0 20.5h1m5 0h1m17 0h1m26 0h1m24 0h1m7 0h1m8 0h1m10 0h1m14 0h1m1 0h2m5 0h1m4 0h1m2 0h1m3 0h1m2 0h1m1 0h1m28 0h1m2 0h1m2 0h1m9 0h1m14 0h1m18 0h1m17 0h1m5 0h1m8 0h1m2 0h1m6 0h1m10 0h1m15 0h1m26 0h1m10 0h1m10 0h1m1 0h1m1 0h1m2 0h1m2 0h2m3 0h1m6 0h1m7 0h1m10 0h2m12 0h1" stroke="#00c161"/><path d="M2 20.5h1m1 0h1m2 0h1m6 0h1m4 0h2m10 0h1m7 0h1m3 0h1m5 0h1m3 0h1m6 0h1m1 0h1m4 0h3m7 0h2m3 0h2m1 0h1m2 0h1m7 0h1m8 0h1m3 0h1m5 0h2m7 0h1m12 0h1m3 0h1m2 0h1m4 0h1m2 0h1m3 0h2m3 0h1m2 0h1m5 0h1m2 0h1m8 0h1m1 0h1m1 0h2m1 0h1m1 0h1m2 0h2m3 0h1m1 0h1m2 0h1m3 0h1m1 0h1m3 0h1m5 0h1m8 0h1m3 0h3m1 0h2m2 0h1m1 0h2m7 0h1m1 0h1m4 0h1m3 0h1m2 0h1m9 0h1m2 0h1m6 0h1m8 0h2m5 0h1m5 0h1m5 0h1m1 0h1m5 0h2m5 0h2m3 0h1m20 0h2m3 0h1m16 0h1m5 0h1m3 0h1m2 0h1m2 0h2m2 0h1m1 0h1" stroke="#37cf33"/><path d="M3 20.5h1m1 0h1m2 0h1m1 0h2m3 0h1m6 0h2m1 0h1m1 0h2m3 0h3m3 0h1m1 0h2m3 0h4m3 0h1m2 0h2m2 0h1m1 0h1m1 0h3m7 0h1m6 0h1m6 0h1m1 0h3m3 0h1m3 0h5m6 0h1m1 0h1m1 0h1m5 0h1m4 0h2m2 0h2m3 0h2m17 0h3m3 0h1m3 0h1m3 0h1m7 0h1m2 0h1m4 0h1m1 0h1m2 0h1m3 0h1m3 0h2m2 0h1m1 0h2m3 0h1m1 0h1m5 0h5m1 0h1m1 0h1m1 0h1m1 0h2m1 0h1m1 0h1m17 0h1m5 0h1m7 0h2m3 0h2m1 0h2m1 0h1m4 0h1m1 0h1m1 0h1m2 0h2m3 0h2m3 0h1m1 0h3m4 0h2m1 0h1m2 0h1m2 0h1m2 0h1m1 0h1m3 0h1m8 0h1m5 0h2m1 0h1m5 0h1m2 0h1m5 0h1m4 0h1m1 0h1m1 0h7m2 0h2m2 0h1m1 0h2m3 0h1m1 0h2m1 0h1" stroke="#8fda00"/><path d="M1 20.5h1m10 0h2m2 0h3m2 0h1m7 0h2m4 0h1m6 0h1m1 0h1m5 0h1m3 0h1m3 0h1m11 0h3m2 0h1m10 0h1m5 0h1m1 0h1m3 0h1m8 0h2m2 0h1m1 0h1m3 0h2m4 0h1m3 0h1m3 0h2m6 0h1m2 0h1m3 0h3m1 0h2m6 0h1m1 0h1m1 0h1m2 0h1m2 0h2m1 0h2m3 0h1m16 0h1m17 0h3m8 0h1m8 0h1m4 0h1m3 0h1m4 0h3m1 0h1m1 0h1m1 0h1m1 0h1m2 0h1m12 0h1m2 0h1m2 0h1m3 0h1m1 0h1m1 0h1m4 0h2m11 0h2m5 0h2m5 0h1m1 0h1m5 0h4m6 0h4m2 0h1m2 0h1m1 0h1m2 0h1m11 0h1m1 0h1m10 0h1m3 0h1m1 0h1m11 0h1m2 0h2" stroke="#cee000"/><path d="M9 20.5h1m16 0h1m9 0h2m19 0h1m8 0h1m7 0h1m4 0h1m1 0h1m15 0h1m8 0h1m31 0h1m27 0h1m12 0h1m1 0h1m16 0h1m7 0h1m19 0h1m12 0h1m21 0h2m5 0h1m20 0h1m8 0h1m6 0h1m7 0h1m17 0h1m20 0h1m6 0h1" stroke="#fde400"/></svg><div style="left:75.80px;top:235.30px;width:1.00px;height:136.30px;background:rgba(220,220,225,.13)"></div><span style="left:73.10px;top:382.81px;font-size:11.5px;line-height:15px;color:#8c8c8c;-webkit-text-stroke:0;">0</span><div style="left:180.40px;top:235.30px;width:1.00px;height:136.30px;background:rgba(220,220,225,.13)"></div><span style="left:171.31px;top:382.81px;font-size:11.5px;line-height:15px;color:#8c8c8c;-webkit-text-stroke:0;">100</span><div style="left:285.00px;top:235.30px;width:1.00px;height:136.30px;background:rgba(220,220,225,.13)"></div><span style="left:275.91px;top:382.81px;font-size:11.5px;line-height:15px;color:#8c8c8c;-webkit-text-stroke:0;">200</span><div style="left:389.60px;top:235.30px;width:1.00px;height:136.30px;background:rgba(220,220,225,.13)"></div><span style="left:380.51px;top:382.81px;font-size:11.5px;line-height:15px;color:#8c8c8c;-webkit-text-stroke:0;">300</span><div style="left:494.20px;top:235.30px;width:1.00px;height:136.30px;background:rgba(220,220,225,.13)"></div><span style="left:485.11px;top:382.81px;font-size:11.5px;line-height:15px;color:#8c8c8c;-webkit-text-stroke:0;">400</span><span style="left:46.60px;top:364.12px;font-size:11.5px;line-height:15px;color:#8c8c8c;-webkit-text-stroke:0;">0</span><span style="left:40.21px;top:299.37px;font-size:11.5px;line-height:15px;color:#8c8c8c;-webkit-text-stroke:0;">10</span><span style="left:40.21px;top:234.62px;font-size:11.5px;line-height:15px;color:#8c8c8c;-webkit-text-stroke:0;">20</span><div style="left:56.80px;top:225.80px;width:1.00px;height:155.70px;background:#c8c8c8"></div><div style="left:57.30px;top:381.00px;width:456.80px;height:1.00px;background:#c8c8c8"></div><span style="left:266.17px;top:401.92px;font-size:11.5px;line-height:15px;color:#8c8c8c;letter-spacing:0.341px;-webkit-text-stroke:0;">X-axis</span><span style="left:29.3px;top:303.5px;font-size:11.5px;line-height:14px;color:#8c8c8c;transform:translate(-50%,-50%) rotate(-90deg);letter-spacing:0.3px">Y-axis</span><div style="left:519.70px;top:225.80px;width:21.70px;height:154.70px;background:linear-gradient(to bottom,#fde400 0.0%,#c8e000 8.0%,#80d800 16.0%,#00c85a 25.5%,#00aa78 38.0%,#008c88 50.0%,#0a6896 64.0%,#3e4a94 75.0%,#482878 88.0%,#440154 100.0%);box-shadow:0 0 0 0.5px rgba(0,0,0,.10)"></div><div style="left:537.90px;top:237.30px;width:3.50px;height:0.80px;background:rgba(140,140,140,.45)"></div><span style="left:545.60px;top:230.31px;font-size:11.5px;line-height:15px;color:#8c8c8c;-webkit-text-stroke:0;">0.4</span><div style="left:537.90px;top:267.60px;width:3.50px;height:0.80px;background:rgba(140,140,140,.45)"></div><span style="left:545.60px;top:260.62px;font-size:11.5px;line-height:15px;color:#8c8c8c;-webkit-text-stroke:0;">0.2</span><div style="left:537.90px;top:297.90px;width:3.50px;height:0.80px;background:rgba(140,140,140,.45)"></div><span style="left:545.60px;top:290.92px;font-size:11.5px;line-height:15px;color:#8c8c8c;-webkit-text-stroke:0;">0</span><div style="left:537.90px;top:328.20px;width:3.50px;height:0.80px;background:rgba(140,140,140,.45)"></div><span style="left:545.60px;top:321.22px;font-size:11.5px;line-height:15px;color:#8c8c8c;-webkit-text-stroke:0;">-0.2</span><div style="left:537.90px;top:358.50px;width:3.50px;height:0.80px;background:rgba(140,140,140,.45)"></div><span style="left:545.60px;top:351.51px;font-size:11.5px;line-height:15px;color:#8c8c8c;-webkit-text-stroke:0;">-0.4</span><div style="left:519.70px;top:264.80px;width:21.70px;height:0.80px;background:rgba(255,255,255,.62)"></div><div style="left:528.25px;top:262.90px;width:4.60px;height:4.60px;background:#fff;transform:rotate(45deg)"></div><div style="left:519.70px;top:342.10px;width:21.70px;height:0.80px;background:rgba(255,255,255,.62)"></div><div style="left:528.25px;top:340.20px;width:4.60px;height:4.60px;background:#fff;transform:rotate(45deg)"></div><div style="left:598.60px;top:353.50px;width:2.00px;height:2.00px;background:#6a6a6a;border-radius:1px"></div><div style="left:598.60px;top:357.50px;width:2.00px;height:2.00px;background:#6a6a6a;border-radius:1px"></div><div style="left:598.60px;top:361.50px;width:2.00px;height:2.00px;background:#6a6a6a;border-radius:1px"></div><div style="left:803.40px;top:353.50px;width:2.00px;height:2.00px;background:#6a6a6a;border-radius:1px"></div><div style="left:803.40px;top:357.50px;width:2.00px;height:2.00px;background:#6a6a6a;border-radius:1px"></div><div style="left:803.40px;top:361.50px;width:2.00px;height:2.00px;background:#6a6a6a;border-radius:1px"></div><div style="left:491.00px;top:648.30px;width:2.00px;height:2.00px;background:#6a6a6a;border-radius:1px"></div><div style="left:495.00px;top:648.30px;width:2.00px;height:2.00px;background:#6a6a6a;border-radius:1px"></div><div style="left:499.00px;top:648.30px;width:2.00px;height:2.00px;background:#6a6a6a;border-radius:1px"></div><div style="left:603.50px;top:73.30px;width:197.00px;height:572.00px;background:#fff;border:1px solid #c9c9cb;border-radius:5px;box-sizing:border-box"></div><div style="left:613.20px;top:81.00px;width:177.80px;height:19.80px;background:#eff0f2;border-radius:4px"></div><span style="left:653.14px;top:83.32px;font-size:12px;line-height:16px;color:#1c1c1e;letter-spacing:-0.416px;">Configuration Panel</span><div style="left:613.20px;top:110.50px;width:177.80px;height:19.00px;background:#fff;border:1px solid #e7e7e9;border-radius:5px;box-sizing:border-box"></div><svg style="left:629.40px;top:113.00px" width="14" height="14" viewBox="0 0 14 14"><path d="M2 3.2 a1.2 1.2 0 0 1 1.2 -1.2 H9.6 L12 4.4 V10.8 a1.2 1.2 0 0 1 -1.2 1.2 H3.2 a1.2 1.2 0 0 1 -1.2 -1.2 Z" fill="none" stroke="#222" stroke-width="1.3" stroke-linejoin="round"/><path d="M4.4 2.2 V5 H8.6 V2.2 M4.2 12 V8.2 H9.8 V12" fill="none" stroke="#222" stroke-width="1.25" stroke-linejoin="round"/></svg><svg style="left:673.00px;top:113.00px" width="14" height="14" viewBox="0 0 14 14"><path d="M1.8 3.6 a1 1 0 0 1 1 -1 H5.6 L7 4.2 H11.2 a1 1 0 0 1 1 1 V10.6 a1 1 0 0 1 -1 1 H2.8 a1 1 0 0 1 -1 -1 Z" fill="none" stroke="#222" stroke-width="1.3" stroke-linejoin="round"/></svg><svg style="left:717.90px;top:113.00px" width="14" height="14" viewBox="0 0 14 14"><rect x="5" y="5" width="7.2" height="7.4" rx="1.6" fill="none" stroke="#222" stroke-width="1.3"/><path d="M3.6 9.4 a1.6 1.6 0 0 1 -1.6 -1.6 V3.4 a1.6 1.6 0 0 1 1.6 -1.6 H7.4 a1.6 1.6 0 0 1 1.6 1.6" fill="none" stroke="#222" stroke-width="1.3"/></svg><svg style="left:761.80px;top:113.00px" width="14" height="14" viewBox="0 0 14 14"><path d="M10.2 5 V4 a1.2 1.2 0 0 0 -1.2 -1.2 H3.6 a1.2 1.2 0 0 0 -1.2 1.2 V11 a1.2 1.2 0 0 0 1.2 1.2 H9 a1.2 1.2 0 0 0 1.2 -1.2 V10.4" fill="none" stroke="#222" stroke-width="1.3"/><path d="M4.4 2.8 V1.8 H8.2 V2.8" fill="none" stroke="#222" stroke-width="1.25"/><path d="M6.6 7.7 H12.4 M10.4 5.7 L12.4 7.7 L10.4 9.7" fill="none" stroke="#222" stroke-width="1.3" stroke-linecap="round" stroke-linejoin="round"/></svg><div style="left:613.20px;top:137.20px;width:177.80px;height:485.30px;background:#fff;border:1px solid #c9c9cb;box-sizing:border-box;overflow:hidden"></div><div style="left:613.70px;top:137.70px;width:176.80px;height:21.50px;background:#e4e5e7"></div><div style="left:701.20px;top:137.70px;width:1.00px;height:21.50px;background:#eeeeef"></div><span style="left:619.20px;top:140.92px;font-size:12px;line-height:16px;color:#1c1c1e;letter-spacing:-0.169px;">Parameter</span><span style="left:707.00px;top:140.92px;font-size:12px;line-height:16px;color:#1c1c1e;letter-spacing:-0.160px;">Value</span><div style="left:613.70px;top:160.20px;width:176.80px;height:15.78px;background:#f0f1f3"></div><svg style="left:614.10px;top:164.39px" width="10" height="8" viewBox="0 0 10 8"><path d="M2 2.6 L5 5.6 L8 2.6" fill="none" stroke="#a6a6a8" stroke-width="1" stroke-linecap="round" stroke-linejoin="round"/></svg><span style="left:625.40px;top:160.41px;font-size:12px;line-height:16px;color:#1c1c1e;">Experiment...</span><span style="left:632.40px;top:176.19px;font-size:12px;line-height:16px;color:#1c1c1e;">res_ch</span><span style="left:706.40px;top:176.19px;font-size:12px;line-height:16px;color:#1c1c1e;">0</span><div style="left:613.70px;top:191.76px;width:176.80px;height:15.78px;background:#f0f1f3"></div><span style="left:632.40px;top:191.97px;font-size:12px;line-height:16px;color:#1c1c1e;">qubit_ch</span><span style="left:706.40px;top:191.97px;font-size:12px;line-height:16px;color:#1c1c1e;">1</span><span style="left:632.40px;top:207.75px;font-size:12px;line-height:16px;color:#1c1c1e;">mixer_freq</span><span style="left:706.40px;top:207.75px;font-size:12px;line-height:16px;color:#1c1c1e;">0.0</span><div style="left:613.70px;top:223.32px;width:176.80px;height:15.78px;background:#f0f1f3"></div><span style="left:632.40px;top:223.53px;font-size:12px;line-height:16px;color:#1c1c1e;">ro_chs</span><span style="left:706.40px;top:223.53px;font-size:12px;line-height:16px;color:#1c1c1e;">[0]</span><span style="left:632.40px;top:239.31px;font-size:12px;line-height:16px;color:#1c1c1e;">reps</span><span style="left:706.40px;top:239.31px;font-size:12px;line-height:16px;color:#1c1c1e;">500</span><div style="left:613.70px;top:254.88px;width:176.80px;height:15.78px;background:#f0f1f3"></div><span style="left:632.40px;top:255.09px;font-size:12px;line-height:16px;color:#1c1c1e;">nqz</span><span style="left:706.40px;top:255.09px;font-size:12px;line-height:16px;color:#1c1c1e;">2</span><span style="left:632.40px;top:270.87px;font-size:12px;line-height:16px;color:#1c1c1e;">qubit_nqz</span><span style="left:706.40px;top:270.87px;font-size:12px;line-height:16px;color:#1c1c1e;">1</span><div style="left:613.70px;top:286.44px;width:176.80px;height:15.78px;background:#f0f1f3"></div><span style="left:632.40px;top:286.65px;font-size:12px;line-height:16px;color:#1c1c1e;">relax_delay</span><span style="left:706.40px;top:286.65px;font-size:12px;line-height:16px;color:#1c1c1e;">10</span><span style="left:632.40px;top:302.43px;font-size:12px;line-height:16px;color:#1c1c1e;">res_phase</span><span style="left:706.40px;top:302.43px;font-size:12px;line-height:16px;color:#1c1c1e;">0</span><div style="left:613.70px;top:318.00px;width:176.80px;height:15.78px;background:#f0f1f3"></div><span style="left:632.40px;top:318.21px;font-size:12px;line-height:16px;color:#1c1c1e;">pulse_style</span><span style="left:706.40px;top:318.21px;font-size:12px;line-height:16px;color:#1c1c1e;">const</span><span style="left:632.40px;top:333.99px;font-size:12px;line-height:16px;color:#1c1c1e;">read_length</span><span style="left:706.40px;top:333.99px;font-size:12px;line-height:16px;color:#1c1c1e;">30</span><div style="left:613.70px;top:349.56px;width:176.80px;height:15.78px;background:#f0f1f3"></div><span style="left:632.40px;top:349.77px;font-size:12px;line-height:16px;color:#1c1c1e;">pulse_gain</span><span style="left:706.40px;top:349.77px;font-size:12px;line-height:16px;color:#1c1c1e;">30000</span><span style="left:632.40px;top:365.55px;font-size:12px;line-height:16px;color:#1c1c1e;">pulse_freq</span><span style="left:706.40px;top:365.55px;font-size:12px;line-height:16px;color:#1c1c1e;">0.0</span><div style="left:613.70px;top:381.12px;width:176.80px;height:15.78px;background:#f0f1f3"></div><span style="left:632.40px;top:381.33px;font-size:12px;line-height:16px;color:#1c1c1e;">adc_trig_...</span><span style="left:706.40px;top:381.33px;font-size:12px;line-height:16px;color:#1c1c1e;">0.525</span><span style="left:632.40px;top:397.11px;font-size:12px;line-height:16px;color:#1c1c1e;">cavity_LO</span><span style="left:706.40px;top:397.11px;font-size:12px;line-height:16px;color:#1c1c1e;">0.0</span><div style="left:613.70px;top:412.68px;width:176.80px;height:15.78px;background:#f0f1f3"></div><span style="left:632.40px;top:412.89px;font-size:12px;line-height:16px;color:#1c1c1e;">cavity_wi...</span><span style="left:706.40px;top:412.89px;font-size:12px;line-height:16px;color:#1c1c1e;">1.0</span><span style="left:632.40px;top:428.67px;font-size:12px;line-height:16px;color:#1c1c1e;">cavity_wi...</span><span style="left:706.40px;top:428.67px;font-size:12px;line-height:16px;color:#1c1c1e;">0.0</span><span style="left:613.20px;top:625.60px;font-size:10px;line-height:13px;color:#1c1c1e;letter-spacing:0.065px;">Drag and Drop .json Files</span><div style="left:807.60px;top:73.20px;width:58.20px;height:21.70px;background:#f6f7f9;border:1px solid #c6c6c8;box-sizing:border-box"></div><span style="left:818.98px;top:77.11px;font-size:10.5px;line-height:14px;color:#1c1c1e;letter-spacing:0.067px;">Voltage</span><div style="left:865.40px;top:73.20px;width:61.20px;height:21.70px;background:#f6f7f9;border:1px solid #c6c6c8;box-sizing:border-box"></div><span style="left:874.49px;top:77.11px;font-size:10.5px;line-height:14px;color:#1c1c1e;letter-spacing:-0.024px;">Accounts</span><div style="left:926.20px;top:73.20px;width:57.50px;height:21.70px;background:#f6f7f9;border:1px solid #c6c6c8;box-sizing:border-box"></div><div style="left:926.70px;top:91.20px;width:57.00px;height:3.70px;background:#68bff3"></div><span style="left:947.03px;top:76.11px;font-size:10.5px;line-height:14px;color:#1c1c1e;letter-spacing:-0.840px;">Log</span><div style="left:808.40px;top:95.50px;width:173.40px;height:549.40px;background:#07071c;border-radius:0 0 3px 3px"></div><span style="left:816.30px;top:96.81px;font-size:11px;line-height:14px;color:#dcdce4;letter-spacing:0.083px;">TesterExperiment</span><span style="left:816.30px;top:109.97px;font-size:11px;line-height:14px;color:#dcdce4;letter-spacing:0.083px;">&gt; Loading dataset file: /Users/</span><span style="left:816.30px;top:123.13px;font-size:11px;line-height:14px;color:#dcdce4;letter-spacing:0.083px;">sonny/Desktop/Qsim/</span><span style="left:816.30px;top:136.29px;font-size:11px;line-height:14px;color:#dcdce4;letter-spacing:0.083px;">HouckLab_QICK/MasterProject/</span><span style="left:816.30px;top:149.45px;font-size:11px;line-height:14px;color:#dcdce4;letter-spacing:0.083px;">Client_modules/Quarky_GUI/</span><span style="left:816.30px;top:162.61px;font-size:11px;line-height:14px;color:#dcdce4;letter-spacing:0.083px;">SampleData/</span><span style="left:816.30px;top:175.77px;font-size:11px;line-height:14px;color:#dcdce4;letter-spacing:0.083px;">SpecVsQblox_2024_03_13_10</span><span style="left:816.30px;top:188.93px;font-size:11px;line-height:14px;color:#dcdce4;letter-spacing:0.083px;">_08_14_data.h5</span><span style="left:816.30px;top:202.09px;font-size:11px;line-height:14px;color:#dcdce4;letter-spacing:0.083px;">&gt; Config in h5 metadata found</span><span style="left:816.30px;top:215.25px;font-size:11px;line-height:14px;color:#dcdce4;letter-spacing:0.083px;">&gt; Loading dataset file: /Users/</span><span style="left:816.30px;top:228.41px;font-size:11px;line-height:14px;color:#dcdce4;letter-spacing:0.083px;">sonny/Desktop/Qsim/</span><span style="left:816.30px;top:241.57px;font-size:11px;line-height:14px;color:#dcdce4;letter-spacing:0.083px;">HouckLab_QICK/MasterProject/</span><span style="left:816.30px;top:254.73px;font-size:11px;line-height:14px;color:#dcdce4;letter-spacing:0.083px;">Client_modules/Quarky_GUI/</span><span style="left:816.30px;top:267.89px;font-size:11px;line-height:14px;color:#dcdce4;letter-spacing:0.083px;">SampleData/</span><span style="left:816.30px;top:281.05px;font-size:11px;line-height:14px;color:#dcdce4;letter-spacing:0.083px;">Transmission_2024_07_09_15</span><span style="left:816.30px;top:294.21px;font-size:11px;line-height:14px;color:#dcdce4;letter-spacing:0.083px;">_21_29.h5</span><span style="left:816.30px;top:307.37px;font-size:11px;line-height:14px;color:#5fb4f4;letter-spacing:0.083px;">&gt; No config in metadata found</span><span style="left:816.30px;top:320.53px;font-size:11px;line-height:14px;color:#dcdce4;letter-spacing:0.083px;">&gt; Loading dataset file: /Users/</span><span style="left:816.30px;top:333.69px;font-size:11px;line-height:14px;color:#dcdce4;letter-spacing:0.083px;">sonny/Desktop/Qsim/</span><span style="left:816.30px;top:346.85px;font-size:11px;line-height:14px;color:#dcdce4;letter-spacing:0.083px;">HouckLab_QICK/MasterProject/</span><span style="left:816.30px;top:360.01px;font-size:11px;line-height:14px;color:#dcdce4;letter-spacing:0.083px;">Client_modules/Quarky_GUI/</span><span style="left:816.30px;top:373.17px;font-size:11px;line-height:14px;color:#dcdce4;letter-spacing:0.083px;">SampleData/</span><span style="left:816.30px;top:386.33px;font-size:11px;line-height:14px;color:#dcdce4;letter-spacing:0.083px;">dataTestSpecVsFlux_2024_10_</span><span style="left:816.30px;top:399.49px;font-size:11px;line-height:14px;color:#dcdce4;letter-spacing:0.083px;">14_17_37_28_data.h5</span><span style="left:816.30px;top:412.65px;font-size:11px;line-height:14px;color:#dcdce4;letter-spacing:0.083px;">&gt; Config in h5 metadata found</span><span style="left:816.30px;top:425.81px;font-size:11px;line-height:14px;color:#dcdce4;letter-spacing:0.083px;">&gt; Loading dataset file: /Users/</span><span style="left:816.30px;top:438.97px;font-size:11px;line-height:14px;color:#dcdce4;letter-spacing:0.083px;">sonny/Desktop/Qsim/</span><span style="left:816.30px;top:452.13px;font-size:11px;line-height:14px;color:#dcdce4;letter-spacing:0.083px;">HouckLab_QICK/MasterProject/</span><span style="left:816.30px;top:465.29px;font-size:11px;line-height:14px;color:#dcdce4;letter-spacing:0.083px;">Client_modules/Quarky_GUI/</span><span style="left:816.30px;top:478.45px;font-size:11px;line-height:14px;color:#dcdce4;letter-spacing:0.083px;">SampleData/</span><span style="left:816.30px;top:491.61px;font-size:11px;line-height:14px;color:#dcdce4;letter-spacing:0.083px;">dataTestSpecSlice_2024_10_1</span><span style="left:816.30px;top:504.77px;font-size:11px;line-height:14px;color:#dcdce4;letter-spacing:0.083px;">4_17_40_17_data.h5</span><span style="left:816.30px;top:517.93px;font-size:11px;line-height:14px;color:#5fb4f4;letter-spacing:0.083px;">&gt; No config in metadata found</span><span style="left:816.30px;top:531.09px;font-size:11px;line-height:14px;color:#dcdce4;letter-spacing:0.083px;">&gt; Loading dataset file: /Users/</span><span style="left:816.30px;top:544.25px;font-size:11px;line-height:14px;color:#dcdce4;letter-spacing:0.083px;">sonny/Desktop/Qsim/</span><span style="left:816.30px;top:557.41px;font-size:11px;line-height:14px;color:#dcdce4;letter-spacing:0.083px;">HouckLab_QICK/MasterProject/</span><span style="left:816.30px;top:570.57px;font-size:11px;line-height:14px;color:#dcdce4;letter-spacing:0.083px;">Client_modules/Quarky_GUI/</span><span style="left:816.30px;top:583.73px;font-size:11px;line-height:14px;color:#dcdce4;letter-spacing:0.083px;">SampleData/</span><span style="left:816.30px;top:596.89px;font-size:11px;line-height:14px;color:#dcdce4;letter-spacing:0.083px;">Transmission_2024_07_09_15</span><span style="left:816.30px;top:610.05px;font-size:11px;line-height:14px;color:#dcdce4;letter-spacing:0.083px;">_21_29.h5</span><span style="left:816.30px;top:623.21px;font-size:11px;line-height:14px;color:#5fb4f4;letter-spacing:0.083px;">&gt; No config in metadata found</span></div></div><div class="sh" style="left:130px;top:902px;width:992px;height:657.6px"></div><div class="win" style="left:130px;top:902px;width:992px;height:657.6px"><div style="left:0;top:1px;width:992px;height:657.2px"><div style="left:0.00px;top:-1.00px;width:992.00px;height:25.80px;background:#f0efee"></div><div style="left:6.90px;top:6.90px;width:10.80px;height:10.80px;background:#ff5f57;border-radius:50%;box-shadow:inset 0 0 0 0.5px rgba(0,0,0,.12)"></div><div style="left:24.40px;top:6.90px;width:10.80px;height:10.80px;background:#febc2e;border-radius:50%;box-shadow:inset 0 0 0 0.5px rgba(0,0,0,.12)"></div><div style="left:41.90px;top:6.90px;width:10.80px;height:10.80px;background:#28c840;border-radius:50%;box-shadow:inset 0 0 0 0.5px rgba(0,0,0,.12)"></div><span style="left:475.72px;top:4.32px;font-size:12px;line-height:16px;color:#474749;font-weight:700;-webkit-text-stroke:0;letter-spacing:-0.159px;">Quarky</span><div style="left:0.00px;top:24.80px;width:992.00px;height:38.80px;background:#2a292e"></div><svg style="left:18.10px;top:39.50px" width="12" height="14" viewBox="0 0 12 14"><path d="M1.6 1.6 L10.6 7 L1.6 12.4 Z" fill="none" stroke="#9c9ca0" stroke-width="1.2" stroke-linejoin="round"/></svg><svg style="left:53.30px;top:38.50px" width="16" height="16" viewBox="0 0 16 16"><path d="M14.10 10.53 L10.53 14.10 L5.47 14.10 L1.90 10.53 L1.90 5.47 L5.47 1.90 L10.53 1.90 L14.10 5.47 Z" fill="none" stroke="#9c9ca0" stroke-width="1.1" stroke-linejoin="round"/><path d="M6.2 6.2 L9.8 9.8 M9.8 6.2 L6.2 9.8" stroke="#9c9ca0" stroke-width="1.2000000000000002" stroke-linecap="round"/></svg><span style="left:85.00px;top:38.72px;font-size:12px;line-height:16px;color:#fff;font-weight:700;-webkit-text-stroke:0;letter-spacing:-0.154px;">✖ Soc Disconnected</span><div style="left:206.00px;top:39.70px;width:454.70px;height:13.00px;background:#07071c;border-radius:6.5px"></div><div style="left:206.00px;top:39.70px;width:454.70px;height:13.00px;background:linear-gradient(to right,#0a6cd8,#0090e8 35%,#00b6f4 70%,#00d0ff);border-radius:6.5px"></div><span style="left:667.70px;top:38.72px;font-size:12px;line-height:16px;color:#fff;letter-spacing:0.254px;">60/60</span><div style="left:707.00px;top:37.00px;width:75.30px;height:19.00px;background:#3a3a40;border-radius:4px"></div><span style="left:717.57px;top:38.72px;font-size:12px;line-height:16px;color:#fff;letter-spacing:-0.153px;">Load Data</span><div style="left:789.80px;top:37.00px;width:121.60px;height:19.00px;background:#3a3a40;border-radius:4px"></div><span style="left:800.33px;top:38.72px;font-size:12px;line-height:16px;color:#fff;letter-spacing:-0.048px;">Extract Experiment</span><svg style="left:928.00px;top:37.60px" width="16" height="18" viewBox="0 0 16 18"><rect x="2.3" y="1.7" width="11.4" height="14.6" rx="2.1" fill="none" stroke="#ececec" stroke-width="1.25"/><path d="M2.6 13.8 a1.9 1.9 0 0 1 1.9 -1.7 H13.6" fill="none" stroke="#ececec" stroke-width="1.2"/><path d="M5.3 5.7 H9.4 M5.3 8.5 H10.7" stroke="#ececec" stroke-width="1.25"/></svg><svg style="left:964.00px;top:38.50px" width="16" height="16" viewBox="0 0 16 16"><path d="M6.34 3.60 L6.56 1.56 L9.44 1.56 L9.66 3.60 L10.98 4.37 L12.86 3.53 L14.30 6.03 L12.64 7.23 L12.64 8.77 L14.30 9.97 L12.86 12.47 L10.98 11.63 L9.66 12.40 L9.44 14.44 L6.56 14.44 L6.34 12.40 L5.02 11.63 L3.14 12.47 L1.70 9.97 L3.36 8.77 L3.36 7.23 L1.70 6.03 L3.14 3.53 L5.02 4.37 Z" fill="none" stroke="#ececec" stroke-width="1.25" stroke-linejoin="round"/><circle cx="8" cy="8" r="1.9" fill="none" stroke="#ececec" stroke-width="1.25"/></svg><div style="left:0.00px;top:63.60px;width:992.00px;height:594.20px;background:#fff"></div><div style="left:8.70px;top:73.50px;width:587.60px;height:571.00px;background:#eff0f2;border-radius:0 0 4px 4px"></div><div style="left:8.70px;top:73.50px;width:587.60px;height:21.50px;background:#f6f7f9"></div><div style="left:9.00px;top:73.20px;width:136.70px;height:21.70px;background:#f6f7f9;border:1px solid #c6c6c8;box-sizing:border-box"></div><svg style="left:14.50px;top:80.00px" width="8" height="8" viewBox="0 0 8 8"><path d="M1.2 1.2 L6.8 6.8 M6.8 1.2 L1.2 6.8" stroke="#222" stroke-width="1" stroke-linecap="round"/></svg><span style="left:32.70px;top:77.11px;font-size:10.5px;line-height:14px;color:#1c1c1e;">TesterExperiment.py</span><div style="left:145.20px;top:73.20px;width:278.50px;height:21.70px;background:#f6f7f9;border:1px solid #c6c6c8;box-sizing:border-box"></div><div style="left:145.70px;top:91.20px;width:278.00px;height:3.70px;background:#68bff3"></div><svg style="left:151.60px;top:79.00px" width="8" height="8" viewBox="0 0 8 8"><path d="M1.2 1.2 L6.8 6.8 M6.8 1.2 L1.2 6.8" stroke="#222" stroke-width="1" stroke-linecap="round"/></svg><span style="left:180.20px;top:76.11px;font-size:10.5px;line-height:14px;color:#1c1c1e;letter-spacing:-0.115px;">SpecVsQblox_2024_03_13_10_08_14_data.h5</span><span style="left:18.50px;top:105.80px;font-size:10px;line-height:13px;color:#1c1c1e;letter-spacing:0.258px;">Estimated Runtime: ---</span><span style="left:202.00px;top:105.80px;font-size:10px;line-height:13px;color:#1c1c1e;letter-spacing:0.395px;">End: ---</span><span style="left:384.89px;top:105.80px;font-size:10px;line-height:13px;color:#1c1c1e;letter-spacing:0.191px;">Hardware Requirement: [Proxy, QickConfig]</span><div style="left:20.60px;top:125.40px;width:72.70px;height:18.40px;background:#ebedf0;border-radius:5px;"></div><span style="left:30.47px;top:126.72px;font-size:12px;line-height:16px;color:#b9babd;letter-spacing:0.035px;">ReExtract</span><div style="left:97.70px;top:125.40px;width:55.90px;height:18.40px;background:#fff;border-radius:5px;box-shadow:0 0.5px 1px rgba(0,0,0,.10);"></div><span style="left:108.07px;top:126.72px;font-size:12px;line-height:16px;color:#1c1c1e;letter-spacing:-0.170px;">RePlot</span><div style="left:158.20px;top:125.40px;width:44.30px;height:18.40px;background:#fff;border-radius:5px;box-shadow:0 0.5px 1px rgba(0,0,0,.10);"></div><span style="left:168.54px;top:126.72px;font-size:12px;line-height:16px;color:#1c1c1e;letter-spacing:-0.130px;">Snip</span><div style="left:207.40px;top:125.40px;width:56.10px;height:18.40px;background:#fff;border-radius:5px;box-shadow:0 0.5px 1px rgba(0,0,0,.10);"></div><span style="left:218.18px;top:126.72px;font-size:12px;line-height:16px;color:#1c1c1e;letter-spacing:-0.030px;">Export</span><div style="left:267.90px;top:125.40px;width:74.60px;height:18.40px;background:#ebedf0;border-radius:5px;"></div><span style="left:278.47px;top:126.72px;font-size:12px;line-height:16px;color:#b9babd;letter-spacing:0.035px;">Save To...</span><span style="left:479.05px;top:123.40px;font-size:10px;line-height:13px;color:#1c1c1e;letter-spacing:0.047px;">X: 71.2527 Y: 171.9985</span><span style="left:27.50px;top:150.82px;font-size:12px;line-height:16px;color:#1c1c1e;letter-spacing:0.048px;">Plotter:</span><div style="left:72.00px;top:150.00px;width:112.20px;height:16.60px;background:#fff;border-radius:4px;box-shadow:0 0.5px 1px rgba(0,0,0,.08)"></div><span style="left:82.50px;top:150.82px;font-size:12px;line-height:16px;color:#1c1c1e;letter-spacing:-0.297px;">None</span><svg style="left:168.50px;top:154.00px" width="12" height="10" viewBox="0 0 12 10"><path d="M2.6 3.3 L6 6.7 L9.4 3.3" fill="none" stroke="#222" stroke-width="1.5" stroke-linecap="round" stroke-linejoin="round"/></svg><div style="left:198.70px;top:152.00px;width:12.80px;height:13.00px;background:#fff;border-radius:3px"></div><span style="left:215.30px;top:150.82px;font-size:12px;line-height:16px;color:#1c1c1e;letter-spacing:-0.072px;">Average Simultaneously</span><span style="left:493.59px;top:148.10px;font-size:10px;line-height:13px;color:#1c1c1e;letter-spacing:0.289px;">hover + 'd' to delete</span><div style="left:18.90px;top:172.80px;width:567.60px;height:464.40px;background:#fff"></div><span style="left:193.54px;top:178.42px;font-size:11.5px;line-height:15px;color:#999;letter-spacing:-0.213px;-webkit-text-stroke:0;">SpecVsQblox_2024_03_13_10_08_14_data</span><span style="left:268.30px;top:205.50px;font-size:10px;line-height:13px;color:#8c8c8c;letter-spacing:0.207px;-webkit-text-stroke:0;">spec_Imat</span><div style="left:88.20px;top:225.50px;width:1.00px;height:375.50px;background:#efefef"></div><div style="left:145.70px;top:225.50px;width:1.00px;height:375.50px;background:#efefef"></div><div style="left:203.20px;top:225.50px;width:1.00px;height:375.50px;background:#efefef"></div><div style="left:260.70px;top:225.50px;width:1.00px;height:375.50px;background:#efefef"></div><div style="left:318.20px;top:225.50px;width:1.00px;height:375.50px;background:#efefef"></div><div style="left:375.70px;top:225.50px;width:1.00px;height:375.50px;background:#efefef"></div><div style="left:433.20px;top:225.50px;width:1.00px;height:375.50px;background:#efefef"></div><div style="left:490.70px;top:225.50px;width:1.00px;height:375.50px;background:#efefef"></div><div style="left:70.80px;top:584.10px;width:443.20px;height:1.00px;background:#efefef"></div><div style="left:70.80px;top:539.81px;width:443.20px;height:1.00px;background:#efefef"></div><div style="left:70.80px;top:495.52px;width:443.20px;height:1.00px;background:#efefef"></div><div style="left:70.80px;top:451.23px;width:443.20px;height:1.00px;background:#efefef"></div><div style="left:70.80px;top:406.94px;width:443.20px;height:1.00px;background:#efefef"></div><div style="left:70.80px;top:362.65px;width:443.20px;height:1.00px;background:#efefef"></div><div style="left:70.80px;top:318.36px;width:443.20px;height:1.00px;background:#efefef"></div><div style="left:70.80px;top:274.07px;width:443.20px;height:1.00px;background:#efefef"></div><div style="left:70.80px;top:229.78px;width:443.20px;height:1.00px;background:#efefef"></div><svg style="left:88.7px;top:242.0px" width="408.4" height="343.0" shape-rendering="crispEdges"><rect x="0" y="340.79" width="408.40" height="2.51" fill="#440356"/><rect x="0" y="338.57" width="408.40" height="2.51" fill="#440356"/><rect x="0" y="336.36" width="408.40" height="2.51" fill="#440356"/><rect x="0" y="334.15" width="408.40" height="2.51" fill="#440457"/><rect x="0" y="331.94" width="408.40" height="2.51" fill="#440457"/><rect x="0" y="329.72" width="408.40" height="2.51" fill="#440457"/><rect x="0" y="327.51" width="408.40" height="2.51" fill="#440557"/><rect x="0" y="325.30" width="408.40" height="2.51" fill="#440558"/><rect x="0" y="323.08" width="408.40" height="2.51" fill="#440558"/><rect x="0" y="320.87" width="408.40" height="2.51" fill="#440658"/><rect x="0" y="318.66" width="408.40" height="2.51" fill="#450659"/><rect x="0" y="316.45" width="408.40" height="2.51" fill="#450659"/><rect x="0" y="314.23" width="408.40" height="2.51" fill="#450759"/><rect x="0" y="312.02" width="408.40" height="2.51" fill="#45075a"/><rect x="0" y="309.81" width="408.40" height="2.51" fill="#45075a"/><rect x="0" y="307.59" width="408.40" height="2.51" fill="#45085a"/><rect x="0" y="305.38" width="408.40" height="2.51" fill="#45085a"/><rect x="0" y="303.17" width="408.40" height="2.51" fill="#45085b"/><rect x="0" y="300.95" width="408.40" height="2.51" fill="#45095b"/><rect x="0" y="298.74" width="408.40" height="2.51" fill="#45095b"/><rect x="0" y="296.53" width="408.40" height="2.51" fill="#45095c"/><rect x="0" y="294.32" width="408.40" height="2.51" fill="#450a5c"/><rect x="0" y="292.10" width="408.40" height="2.51" fill="#450a5c"/><rect x="0" y="289.89" width="408.40" height="2.51" fill="#450a5d"/><rect x="0" y="287.68" width="408.40" height="2.51" fill="#450b5d"/><rect x="0" y="285.46" width="408.40" height="2.51" fill="#450b5d"/><rect x="0" y="283.25" width="408.40" height="2.51" fill="#450b5d"/><rect x="0" y="281.04" width="408.40" height="2.51" fill="#450c5e"/><rect x="0" y="278.83" width="408.40" height="2.51" fill="#450c5e"/><rect x="0" y="276.61" width="408.40" height="2.51" fill="#450c5e"/><rect x="0" y="274.40" width="408.40" height="2.51" fill="#450d5f"/><rect x="0" y="272.19" width="408.40" height="2.51" fill="#450d5f"/><rect x="0" y="269.97" width="408.40" height="2.51" fill="#450d5f"/><rect x="0" y="267.76" width="408.40" height="2.51" fill="#450e60"/><rect x="0" y="265.55" width="408.40" height="2.51" fill="#450e60"/><rect x="0" y="263.34" width="408.40" height="2.51" fill="#450e60"/><rect x="0" y="261.12" width="408.40" height="2.51" fill="#450e60"/><rect x="0" y="258.91" width="408.40" height="2.51" fill="#450f61"/><rect x="0" y="256.70" width="408.40" height="2.51" fill="#450f61"/><rect x="0" y="254.48" width="408.40" height="2.51" fill="#450f61"/><rect x="0" y="252.27" width="408.40" height="2.51" fill="#461062"/><rect x="0" y="250.06" width="408.40" height="2.51" fill="#461062"/><rect x="0" y="247.85" width="408.40" height="2.51" fill="#461163"/><rect x="0" y="245.63" width="408.40" height="2.51" fill="#461163"/><rect x="0" y="243.42" width="408.40" height="2.51" fill="#461263"/><rect x="0" y="241.21" width="408.40" height="2.51" fill="#461264"/><rect x="0" y="238.99" width="408.40" height="2.51" fill="#461364"/><rect x="0" y="236.78" width="408.40" height="2.51" fill="#461365"/><rect x="0" y="234.57" width="408.40" height="2.51" fill="#461365"/><rect x="0" y="232.35" width="408.40" height="2.51" fill="#461465"/><rect x="0" y="230.14" width="408.40" height="2.51" fill="#461466"/><rect x="0" y="227.93" width="408.40" height="2.51" fill="#461566"/><rect x="0" y="225.72" width="408.40" height="2.51" fill="#461567"/><rect x="0" y="223.50" width="408.40" height="2.51" fill="#461667"/><rect x="0" y="221.29" width="408.40" height="2.51" fill="#461667"/><rect x="0" y="219.08" width="408.40" height="2.51" fill="#461668"/><rect x="0" y="216.86" width="408.40" height="2.51" fill="#461768"/><rect x="0" y="214.65" width="408.40" height="2.51" fill="#461769"/><rect x="0" y="212.44" width="408.40" height="2.51" fill="#461869"/><rect x="0" y="210.23" width="408.40" height="2.51" fill="#461869"/><rect x="0" y="208.01" width="408.40" height="2.51" fill="#46196a"/><rect x="0" y="205.80" width="408.40" height="2.51" fill="#46196a"/><rect x="0" y="203.59" width="408.40" height="2.51" fill="#471b6c"/><rect x="0" y="201.37" width="408.40" height="2.51" fill="#471f70"/><rect x="0" y="199.16" width="408.40" height="2.51" fill="#482474"/><rect x="0" y="196.95" width="408.40" height="2.51" fill="#482878"/><rect x="0" y="194.74" width="408.40" height="2.51" fill="#482a79"/><rect x="0" y="192.52" width="408.40" height="2.51" fill="#472a7a"/><rect x="0" y="190.31" width="408.40" height="2.51" fill="#472b7a"/><rect x="0" y="188.10" width="408.40" height="2.51" fill="#472c7b"/><rect x="0" y="185.88" width="408.40" height="2.51" fill="#472c7c"/><rect x="0" y="183.67" width="408.40" height="2.51" fill="#472d7c"/><rect x="0" y="181.46" width="408.40" height="2.51" fill="#462e7d"/><rect x="0" y="179.25" width="408.40" height="2.51" fill="#462e7d"/><rect x="0" y="177.03" width="408.40" height="2.51" fill="#462f7e"/><rect x="0" y="174.82" width="408.40" height="2.51" fill="#46307e"/><rect x="0" y="172.61" width="408.40" height="2.51" fill="#46307f"/><rect x="0" y="170.39" width="408.40" height="2.51" fill="#45317f"/><rect x="0" y="168.18" width="408.40" height="2.51" fill="#453180"/><rect x="0" y="165.97" width="408.40" height="2.51" fill="#453280"/><rect x="0" y="163.75" width="408.40" height="2.51" fill="#453381"/><rect x="0" y="161.54" width="408.40" height="2.51" fill="#443482"/><rect x="0" y="159.33" width="408.40" height="2.51" fill="#443583"/><rect x="0" y="157.12" width="408.40" height="2.51" fill="#443684"/><rect x="0" y="154.90" width="408.40" height="2.51" fill="#443784"/><rect x="0" y="152.69" width="408.40" height="2.51" fill="#433885"/><rect x="0" y="150.48" width="408.40" height="2.51" fill="#433986"/><rect x="0" y="148.26" width="408.40" height="2.51" fill="#433a87"/><rect x="0" y="146.05" width="408.40" height="2.51" fill="#423b88"/><rect x="0" y="143.84" width="408.40" height="2.51" fill="#423c89"/><rect x="0" y="141.63" width="408.40" height="2.51" fill="#423e8a"/><rect x="0" y="139.41" width="408.40" height="2.51" fill="#413f8b"/><rect x="0" y="137.20" width="408.40" height="2.51" fill="#41418c"/><rect x="0" y="134.99" width="408.40" height="2.51" fill="#40428d"/><rect x="0" y="132.77" width="408.40" height="2.51" fill="#40438f"/><rect x="0" y="130.56" width="408.40" height="2.51" fill="#404590"/><rect x="0" y="128.35" width="408.40" height="2.51" fill="#3f4691"/><rect x="0" y="126.14" width="408.40" height="2.51" fill="#3f4892"/><rect x="0" y="123.92" width="408.40" height="2.51" fill="#3e4993"/><rect x="0" y="121.71" width="408.40" height="2.51" fill="#3d4b94"/><rect x="0" y="119.50" width="408.40" height="2.51" fill="#3a4c94"/><rect x="0" y="117.28" width="408.40" height="2.51" fill="#384e94"/><rect x="0" y="115.07" width="408.40" height="2.51" fill="#354f94"/><rect x="0" y="112.86" width="408.40" height="2.51" fill="#335194"/><rect x="0" y="110.65" width="408.40" height="2.51" fill="#305295"/><rect x="0" y="108.43" width="408.40" height="2.51" fill="#2d5495"/><rect x="0" y="106.22" width="408.40" height="2.51" fill="#2b5595"/><rect x="0" y="104.01" width="408.40" height="2.51" fill="#285795"/><rect x="0" y="101.79" width="408.40" height="2.51" fill="#265895"/><rect x="0" y="99.58" width="408.40" height="2.51" fill="#235a95"/><rect x="0" y="97.37" width="408.40" height="2.51" fill="#205b95"/><rect x="0" y="95.15" width="408.40" height="2.51" fill="#1e5d95"/><rect x="0" y="92.94" width="408.40" height="2.51" fill="#1b5e95"/><rect x="0" y="90.73" width="408.40" height="2.51" fill="#196095"/><rect x="0" y="88.52" width="408.40" height="2.51" fill="#166196"/><rect x="0" y="86.30" width="408.40" height="2.51" fill="#136396"/><rect x="0" y="84.09" width="408.40" height="2.51" fill="#116496"/><rect x="0" y="81.88" width="408.40" height="2.51" fill="#0e6696"/><rect x="0" y="79.66" width="408.40" height="2.51" fill="#0c6796"/><rect x="0" y="77.45" width="408.40" height="2.51" fill="#0a6996"/><rect x="0" y="75.24" width="408.40" height="2.51" fill="#096a95"/><rect x="0" y="73.03" width="408.40" height="2.51" fill="#096c94"/><rect x="0" y="70.81" width="408.40" height="2.51" fill="#086e94"/><rect x="0" y="68.60" width="408.40" height="2.51" fill="#087093"/><rect x="0" y="66.39" width="408.40" height="2.51" fill="#077192"/><rect x="0" y="64.17" width="408.40" height="2.51" fill="#067591"/><rect x="0" y="61.96" width="408.40" height="2.51" fill="#057a8f"/><rect x="0" y="59.75" width="408.40" height="2.51" fill="#009185"/><rect x="0" y="57.54" width="408.40" height="2.51" fill="#14cb4c"/><rect x="0" y="55.32" width="408.40" height="2.51" fill="#d5e100"/><rect x="0" y="53.11" width="408.40" height="2.51" fill="#4ad126"/><rect x="0" y="50.90" width="408.40" height="2.51" fill="#00ba68"/><rect x="0" y="48.68" width="408.40" height="2.51" fill="#00a37c"/><rect x="0" y="46.47" width="408.40" height="2.51" fill="#009782"/><rect x="0" y="44.26" width="408.40" height="2.51" fill="#009384"/><rect x="0" y="42.05" width="408.40" height="2.51" fill="#009484"/><rect x="0" y="39.83" width="408.40" height="2.51" fill="#009881"/><rect x="0" y="37.62" width="408.40" height="2.51" fill="#009e7e"/><rect x="0" y="35.41" width="408.40" height="2.51" fill="#00a47b"/><rect x="0" y="33.19" width="408.40" height="2.51" fill="#00aa78"/><rect x="0" y="30.98" width="408.40" height="2.51" fill="#00af73"/><rect x="0" y="28.77" width="408.40" height="2.51" fill="#00b56d"/><rect x="0" y="26.55" width="408.40" height="2.51" fill="#00ba68"/><rect x="0" y="24.34" width="408.40" height="2.51" fill="#00be64"/><rect x="0" y="22.13" width="408.40" height="2.51" fill="#00c062"/><rect x="0" y="19.92" width="408.40" height="2.51" fill="#00c260"/><rect x="0" y="17.70" width="408.40" height="2.51" fill="#00c45f"/><rect x="0" y="15.49" width="408.40" height="2.51" fill="#02c858"/><rect x="0" y="13.28" width="408.40" height="2.51" fill="#2fce39"/><rect x="0" y="11.06" width="408.40" height="2.51" fill="#65d513"/><rect x="0" y="8.85" width="408.40" height="2.51" fill="#92da00"/><rect x="0" y="6.64" width="408.40" height="2.51" fill="#b6de00"/><rect x="0" y="4.43" width="408.40" height="2.51" fill="#d1e100"/><rect x="0" y="2.21" width="408.40" height="2.51" fill="#e0e200"/><rect x="0" y="0.00" width="408.40" height="2.51" fill="#e8e200"/><rect x="172.56" y="340.79" width="17.26" height="2.41" fill="#440558"/><rect x="270.35" y="340.79" width="17.26" height="2.41" fill="#440457"/><rect x="46.02" y="340.79" width="17.26" height="2.41" fill="#440154"/><rect x="345.13" y="338.57" width="11.50" height="2.41" fill="#440658"/><rect x="138.05" y="338.57" width="17.26" height="2.41" fill="#440457"/><rect x="402.65" y="338.57" width="11.50" height="2.41" fill="#440356"/><rect x="109.29" y="336.36" width="5.75" height="2.41" fill="#45075a"/><rect x="379.64" y="336.36" width="11.50" height="2.41" fill="#45095b"/><rect x="46.02" y="336.36" width="5.75" height="2.41" fill="#45095c"/><rect x="28.76" y="334.15" width="11.50" height="2.41" fill="#450a5c"/><rect x="195.57" y="334.15" width="11.50" height="2.41" fill="#450759"/><rect x="281.85" y="334.15" width="17.26" height="2.41" fill="#450a5c"/><rect x="310.61" y="331.94" width="11.50" height="2.41" fill="#45095c"/><rect x="322.12" y="331.94" width="5.75" height="2.41" fill="#450c5e"/><rect x="69.03" y="331.94" width="5.75" height="2.41" fill="#440154"/><rect x="155.31" y="329.72" width="11.50" height="2.41" fill="#450e60"/><rect x="316.37" y="329.72" width="17.26" height="2.41" fill="#450c5e"/><rect x="304.86" y="329.72" width="17.26" height="2.41" fill="#450b5e"/><rect x="253.09" y="327.51" width="17.26" height="2.41" fill="#45085a"/><rect x="166.81" y="327.51" width="11.50" height="2.41" fill="#45095c"/><rect x="17.26" y="327.51" width="11.50" height="2.41" fill="#450e60"/><rect x="115.04" y="325.30" width="17.26" height="2.41" fill="#450d5f"/><rect x="396.90" y="325.30" width="17.26" height="2.41" fill="#45085a"/><rect x="155.31" y="325.30" width="17.26" height="2.41" fill="#450c5e"/><rect x="195.57" y="323.08" width="11.50" height="2.41" fill="#440154"/><rect x="350.88" y="323.08" width="17.26" height="2.41" fill="#450f61"/><rect x="63.27" y="323.08" width="11.50" height="2.41" fill="#450c5e"/><rect x="299.11" y="320.87" width="5.75" height="2.41" fill="#440154"/><rect x="310.61" y="320.87" width="11.50" height="2.41" fill="#450d5f"/><rect x="28.76" y="320.87" width="17.26" height="2.41" fill="#45095c"/><rect x="28.76" y="318.66" width="11.50" height="2.41" fill="#450b5d"/><rect x="241.59" y="318.66" width="17.26" height="2.41" fill="#450e60"/><rect x="201.32" y="318.66" width="17.26" height="2.41" fill="#440356"/><rect x="23.01" y="316.45" width="11.50" height="2.41" fill="#440154"/><rect x="74.78" y="316.45" width="17.26" height="2.41" fill="#45095b"/><rect x="143.80" y="316.45" width="11.50" height="2.41" fill="#440557"/><rect x="189.82" y="314.23" width="5.75" height="2.41" fill="#450b5e"/><rect x="247.34" y="314.23" width="11.50" height="2.41" fill="#450659"/><rect x="97.79" y="314.23" width="11.50" height="2.41" fill="#450659"/><rect x="379.64" y="312.02" width="11.50" height="2.41" fill="#450b5d"/><rect x="74.78" y="312.02" width="17.26" height="2.41" fill="#461062"/><rect x="368.14" y="312.02" width="11.50" height="2.41" fill="#45085a"/><rect x="172.56" y="309.81" width="11.50" height="2.41" fill="#45085a"/><rect x="189.82" y="309.81" width="17.26" height="2.41" fill="#440658"/><rect x="247.34" y="309.81" width="5.75" height="2.41" fill="#450e60"/><rect x="230.08" y="307.59" width="5.75" height="2.41" fill="#45075a"/><rect x="97.79" y="307.59" width="5.75" height="2.41" fill="#450b5e"/><rect x="241.59" y="307.59" width="11.50" height="2.41" fill="#450759"/><rect x="258.85" y="305.38" width="17.26" height="2.41" fill="#450d5f"/><rect x="356.63" y="305.38" width="5.75" height="2.41" fill="#450b5d"/><rect x="11.50" y="305.38" width="11.50" height="2.41" fill="#440658"/><rect x="333.62" y="303.17" width="11.50" height="2.41" fill="#450b5e"/><rect x="230.08" y="303.17" width="5.75" height="2.41" fill="#45085a"/><rect x="230.08" y="303.17" width="11.50" height="2.41" fill="#451061"/><rect x="189.82" y="300.95" width="11.50" height="2.41" fill="#450f61"/><rect x="74.78" y="300.95" width="5.75" height="2.41" fill="#461264"/><rect x="92.03" y="300.95" width="11.50" height="2.41" fill="#450a5d"/><rect x="195.57" y="298.74" width="5.75" height="2.41" fill="#45085a"/><rect x="316.37" y="298.74" width="17.26" height="2.41" fill="#450e60"/><rect x="74.78" y="298.74" width="17.26" height="2.41" fill="#45085a"/><rect x="241.59" y="296.53" width="17.26" height="2.41" fill="#461062"/><rect x="322.12" y="296.53" width="5.75" height="2.41" fill="#440457"/><rect x="155.31" y="296.53" width="17.26" height="2.41" fill="#450a5c"/><rect x="161.06" y="294.32" width="5.75" height="2.41" fill="#440456"/><rect x="138.05" y="294.32" width="11.50" height="2.41" fill="#461062"/><rect x="132.30" y="294.32" width="11.50" height="2.41" fill="#45095b"/><rect x="57.52" y="292.10" width="17.26" height="2.41" fill="#45095b"/><rect x="92.03" y="292.10" width="11.50" height="2.41" fill="#45085b"/><rect x="195.57" y="292.10" width="11.50" height="2.41" fill="#45095b"/><rect x="304.86" y="289.89" width="11.50" height="2.41" fill="#450b5d"/><rect x="299.11" y="289.89" width="5.75" height="2.41" fill="#461364"/><rect x="109.29" y="289.89" width="5.75" height="2.41" fill="#440457"/><rect x="373.89" y="287.68" width="11.50" height="2.41" fill="#450d5f"/><rect x="161.06" y="287.68" width="5.75" height="2.41" fill="#461062"/><rect x="379.64" y="287.68" width="11.50" height="2.41" fill="#450d5f"/><rect x="166.81" y="285.46" width="5.75" height="2.41" fill="#461264"/><rect x="207.08" y="285.46" width="5.75" height="2.41" fill="#461263"/><rect x="28.76" y="285.46" width="5.75" height="2.41" fill="#461365"/><rect x="373.89" y="283.25" width="5.75" height="2.41" fill="#461365"/><rect x="316.37" y="283.25" width="17.26" height="2.41" fill="#440658"/><rect x="350.88" y="283.25" width="17.26" height="2.41" fill="#450759"/><rect x="368.14" y="281.04" width="11.50" height="2.41" fill="#45095b"/><rect x="11.50" y="281.04" width="17.26" height="2.41" fill="#450e60"/><rect x="34.51" y="281.04" width="17.26" height="2.41" fill="#450759"/><rect x="92.03" y="278.83" width="11.50" height="2.41" fill="#461567"/><rect x="396.90" y="278.83" width="11.50" height="2.41" fill="#461364"/><rect x="40.26" y="278.83" width="11.50" height="2.41" fill="#45095b"/><rect x="86.28" y="276.61" width="17.26" height="2.41" fill="#461466"/><rect x="86.28" y="276.61" width="5.75" height="2.41" fill="#450a5c"/><rect x="201.32" y="276.61" width="5.75" height="2.41" fill="#461365"/><rect x="0.00" y="274.40" width="11.50" height="2.41" fill="#461062"/><rect x="293.36" y="274.40" width="5.75" height="2.41" fill="#461264"/><rect x="178.32" y="274.40" width="11.50" height="2.41" fill="#461062"/><rect x="379.64" y="272.19" width="11.50" height="2.41" fill="#45075a"/><rect x="235.84" y="272.19" width="5.75" height="2.41" fill="#461466"/><rect x="92.03" y="272.19" width="5.75" height="2.41" fill="#45085b"/><rect x="46.02" y="269.97" width="11.50" height="2.41" fill="#461768"/><rect x="63.27" y="269.97" width="17.26" height="2.41" fill="#450f61"/><rect x="230.08" y="269.97" width="5.75" height="2.41" fill="#450c5e"/><rect x="253.09" y="267.76" width="11.50" height="2.41" fill="#461263"/><rect x="218.58" y="267.76" width="11.50" height="2.41" fill="#450b5e"/><rect x="241.59" y="267.76" width="11.50" height="2.41" fill="#45095b"/><rect x="0.00" y="265.55" width="17.26" height="2.41" fill="#461365"/><rect x="57.52" y="265.55" width="17.26" height="2.41" fill="#450a5d"/><rect x="270.35" y="265.55" width="11.50" height="2.41" fill="#461163"/><rect x="396.90" y="263.34" width="11.50" height="2.41" fill="#461264"/><rect x="28.76" y="263.34" width="17.26" height="2.41" fill="#461667"/><rect x="34.51" y="263.34" width="11.50" height="2.41" fill="#461264"/><rect x="230.08" y="261.12" width="11.50" height="2.41" fill="#461769"/><rect x="304.86" y="261.12" width="11.50" height="2.41" fill="#45085b"/><rect x="155.31" y="261.12" width="17.26" height="2.41" fill="#450c5f"/><rect x="51.77" y="258.91" width="11.50" height="2.41" fill="#450c5e"/><rect x="92.03" y="258.91" width="5.75" height="2.41" fill="#461869"/><rect x="270.35" y="258.91" width="17.26" height="2.41" fill="#461567"/><rect x="189.82" y="256.70" width="5.75" height="2.41" fill="#461062"/><rect x="86.28" y="256.70" width="17.26" height="2.41" fill="#461365"/><rect x="385.39" y="256.70" width="11.50" height="2.41" fill="#461365"/><rect x="230.08" y="254.48" width="17.26" height="2.41" fill="#461263"/><rect x="0.00" y="254.48" width="11.50" height="2.41" fill="#450b5e"/><rect x="281.85" y="254.48" width="5.75" height="2.41" fill="#461263"/><rect x="69.03" y="252.27" width="17.26" height="2.41" fill="#461869"/><rect x="126.55" y="252.27" width="5.75" height="2.41" fill="#450f61"/><rect x="86.28" y="252.27" width="5.75" height="2.41" fill="#461768"/><rect x="350.88" y="250.06" width="17.26" height="2.41" fill="#46196a"/><rect x="218.58" y="250.06" width="5.75" height="2.41" fill="#450a5d"/><rect x="373.89" y="250.06" width="17.26" height="2.41" fill="#461567"/><rect x="74.78" y="247.85" width="17.26" height="2.41" fill="#461668"/><rect x="402.65" y="247.85" width="5.75" height="2.41" fill="#461365"/><rect x="132.30" y="247.85" width="5.75" height="2.41" fill="#450e60"/><rect x="132.30" y="245.63" width="17.26" height="2.41" fill="#450f61"/><rect x="287.61" y="245.63" width="11.50" height="2.41" fill="#461162"/><rect x="287.61" y="245.63" width="11.50" height="2.41" fill="#461465"/><rect x="57.52" y="243.42" width="11.50" height="2.41" fill="#461365"/><rect x="299.11" y="243.42" width="17.26" height="2.41" fill="#471b6c"/><rect x="304.86" y="243.42" width="17.26" height="2.41" fill="#461466"/><rect x="379.64" y="241.21" width="17.26" height="2.41" fill="#461365"/><rect x="293.36" y="241.21" width="5.75" height="2.41" fill="#450e60"/><rect x="362.38" y="241.21" width="17.26" height="2.41" fill="#461365"/><rect x="379.64" y="238.99" width="11.50" height="2.41" fill="#461667"/><rect x="132.30" y="238.99" width="5.75" height="2.41" fill="#461062"/><rect x="143.80" y="238.99" width="5.75" height="2.41" fill="#461667"/><rect x="230.08" y="236.78" width="5.75" height="2.41" fill="#471a6b"/><rect x="391.14" y="236.78" width="11.50" height="2.41" fill="#461769"/><rect x="299.11" y="236.78" width="17.26" height="2.41" fill="#471a6b"/><rect x="195.57" y="234.57" width="5.75" height="2.41" fill="#461264"/><rect x="195.57" y="234.57" width="11.50" height="2.41" fill="#471a6b"/><rect x="143.80" y="234.57" width="5.75" height="2.41" fill="#461668"/><rect x="172.56" y="232.35" width="11.50" height="2.41" fill="#461567"/><rect x="103.54" y="232.35" width="11.50" height="2.41" fill="#471d6e"/><rect x="350.88" y="232.35" width="17.26" height="2.41" fill="#461768"/><rect x="339.37" y="230.14" width="17.26" height="2.41" fill="#471b6c"/><rect x="17.26" y="230.14" width="11.50" height="2.41" fill="#471e6f"/><rect x="51.77" y="230.14" width="11.50" height="2.41" fill="#471b6c"/><rect x="28.76" y="227.93" width="11.50" height="2.41" fill="#471d6e"/><rect x="172.56" y="227.93" width="17.26" height="2.41" fill="#471a6b"/><rect x="46.02" y="227.93" width="5.75" height="2.41" fill="#471c6d"/><rect x="172.56" y="225.72" width="5.75" height="2.41" fill="#471b6c"/><rect x="97.79" y="225.72" width="5.75" height="2.41" fill="#46196a"/><rect x="23.01" y="225.72" width="11.50" height="2.41" fill="#461163"/><rect x="28.76" y="223.50" width="11.50" height="2.41" fill="#461264"/><rect x="63.27" y="223.50" width="17.26" height="2.41" fill="#471c6d"/><rect x="86.28" y="223.50" width="5.75" height="2.41" fill="#461365"/><rect x="212.83" y="221.29" width="5.75" height="2.41" fill="#461567"/><rect x="247.34" y="221.29" width="5.75" height="2.41" fill="#461062"/><rect x="241.59" y="221.29" width="11.50" height="2.41" fill="#461667"/><rect x="51.77" y="219.08" width="5.75" height="2.41" fill="#471a6c"/><rect x="356.63" y="219.08" width="11.50" height="2.41" fill="#461264"/><rect x="230.08" y="219.08" width="5.75" height="2.41" fill="#471e6f"/><rect x="51.77" y="216.86" width="17.26" height="2.41" fill="#461769"/><rect x="322.12" y="216.86" width="17.26" height="2.41" fill="#471f70"/><rect x="69.03" y="216.86" width="17.26" height="2.41" fill="#472070"/><rect x="270.35" y="214.65" width="17.26" height="2.41" fill="#471d6e"/><rect x="327.87" y="214.65" width="11.50" height="2.41" fill="#471c6d"/><rect x="189.82" y="214.65" width="5.75" height="2.41" fill="#471d6e"/><rect x="247.34" y="212.44" width="17.26" height="2.41" fill="#471b6c"/><rect x="385.39" y="212.44" width="5.75" height="2.41" fill="#471c6d"/><rect x="373.89" y="212.44" width="11.50" height="2.41" fill="#461264"/><rect x="212.83" y="210.23" width="17.26" height="2.41" fill="#471e6e"/><rect x="132.30" y="210.23" width="17.26" height="2.41" fill="#471c6d"/><rect x="109.29" y="210.23" width="5.75" height="2.41" fill="#461869"/><rect x="333.62" y="208.01" width="5.75" height="2.41" fill="#461466"/><rect x="103.54" y="208.01" width="11.50" height="2.41" fill="#471d6e"/><rect x="304.86" y="208.01" width="17.26" height="2.41" fill="#461768"/><rect x="132.30" y="205.80" width="11.50" height="2.41" fill="#471a6c"/><rect x="126.55" y="205.80" width="17.26" height="2.41" fill="#461465"/><rect x="132.30" y="205.80" width="17.26" height="2.41" fill="#471b6c"/><rect x="287.61" y="203.59" width="11.50" height="2.41" fill="#461768"/><rect x="195.57" y="203.59" width="11.50" height="2.41" fill="#461667"/><rect x="97.79" y="203.59" width="5.75" height="2.41" fill="#471d6e"/><rect x="195.57" y="201.37" width="5.75" height="2.41" fill="#482475"/><rect x="373.89" y="201.37" width="11.50" height="2.41" fill="#482777"/><rect x="293.36" y="201.37" width="11.50" height="2.41" fill="#472272"/><rect x="46.02" y="199.16" width="11.50" height="2.41" fill="#482575"/><rect x="80.53" y="199.16" width="5.75" height="2.41" fill="#472172"/><rect x="69.03" y="199.16" width="17.26" height="2.41" fill="#471f70"/><rect x="80.53" y="196.95" width="5.75" height="2.41" fill="#472c7b"/><rect x="304.86" y="196.95" width="17.26" height="2.41" fill="#472c7b"/><rect x="92.03" y="196.95" width="17.26" height="2.41" fill="#472a7a"/><rect x="287.61" y="194.74" width="5.75" height="2.41" fill="#472c7b"/><rect x="120.79" y="194.74" width="17.26" height="2.41" fill="#482677"/><rect x="184.07" y="194.74" width="11.50" height="2.41" fill="#462f7d"/><rect x="17.26" y="192.52" width="11.50" height="2.41" fill="#45317f"/><rect x="281.85" y="192.52" width="11.50" height="2.41" fill="#472c7c"/><rect x="224.33" y="192.52" width="17.26" height="2.41" fill="#472c7b"/><rect x="385.39" y="190.31" width="17.26" height="2.41" fill="#462f7e"/><rect x="350.88" y="190.31" width="5.75" height="2.41" fill="#462e7d"/><rect x="0.00" y="190.31" width="5.75" height="2.41" fill="#46307e"/><rect x="166.81" y="188.10" width="11.50" height="2.41" fill="#482979"/><rect x="333.62" y="188.10" width="5.75" height="2.41" fill="#482979"/><rect x="385.39" y="188.10" width="5.75" height="2.41" fill="#482777"/><rect x="368.14" y="185.88" width="17.26" height="2.41" fill="#453381"/><rect x="80.53" y="185.88" width="17.26" height="2.41" fill="#472b7a"/><rect x="109.29" y="185.88" width="5.75" height="2.41" fill="#462d7c"/><rect x="63.27" y="183.67" width="17.26" height="2.41" fill="#453482"/><rect x="17.26" y="183.67" width="11.50" height="2.41" fill="#46307e"/><rect x="368.14" y="183.67" width="5.75" height="2.41" fill="#462e7d"/><rect x="11.50" y="181.46" width="11.50" height="2.41" fill="#472d7c"/><rect x="253.09" y="181.46" width="17.26" height="2.41" fill="#453180"/><rect x="57.52" y="181.46" width="17.26" height="2.41" fill="#453281"/><rect x="23.01" y="179.25" width="17.26" height="2.41" fill="#472a7a"/><rect x="247.34" y="179.25" width="5.75" height="2.41" fill="#443583"/><rect x="143.80" y="179.25" width="11.50" height="2.41" fill="#453280"/><rect x="161.06" y="177.03" width="11.50" height="2.41" fill="#462e7d"/><rect x="28.76" y="177.03" width="11.50" height="2.41" fill="#472b7a"/><rect x="143.80" y="177.03" width="17.26" height="2.41" fill="#472c7b"/><rect x="362.38" y="174.82" width="11.50" height="2.41" fill="#453381"/><rect x="391.14" y="174.82" width="11.50" height="2.41" fill="#472d7c"/><rect x="356.63" y="174.82" width="11.50" height="2.41" fill="#472b7a"/><rect x="333.62" y="172.61" width="17.26" height="2.41" fill="#46307f"/><rect x="132.30" y="172.61" width="11.50" height="2.41" fill="#443784"/><rect x="184.07" y="172.61" width="11.50" height="2.41" fill="#443684"/><rect x="327.87" y="170.39" width="17.26" height="2.41" fill="#46307f"/><rect x="293.36" y="170.39" width="5.75" height="2.41" fill="#433885"/><rect x="149.55" y="170.39" width="11.50" height="2.41" fill="#443683"/><rect x="103.54" y="168.18" width="11.50" height="2.41" fill="#453381"/><rect x="115.04" y="168.18" width="5.75" height="2.41" fill="#472d7c"/><rect x="293.36" y="168.18" width="17.26" height="2.41" fill="#462e7d"/><rect x="17.26" y="165.97" width="5.75" height="2.41" fill="#462e7d"/><rect x="120.79" y="165.97" width="11.50" height="2.41" fill="#453381"/><rect x="40.26" y="165.97" width="5.75" height="2.41" fill="#453280"/><rect x="230.08" y="163.75" width="11.50" height="2.41" fill="#462e7d"/><rect x="34.51" y="163.75" width="5.75" height="2.41" fill="#453381"/><rect x="287.61" y="163.75" width="11.50" height="2.41" fill="#462e7d"/><rect x="161.06" y="161.54" width="5.75" height="2.41" fill="#46307f"/><rect x="345.13" y="161.54" width="5.75" height="2.41" fill="#45317f"/><rect x="80.53" y="161.54" width="11.50" height="2.41" fill="#423b87"/><rect x="34.51" y="159.33" width="17.26" height="2.41" fill="#453482"/><rect x="339.37" y="159.33" width="11.50" height="2.41" fill="#443684"/><rect x="195.57" y="159.33" width="5.75" height="2.41" fill="#433a87"/><rect x="253.09" y="157.12" width="11.50" height="2.41" fill="#453280"/><rect x="316.37" y="157.12" width="5.75" height="2.41" fill="#433986"/><rect x="0.00" y="157.12" width="5.75" height="2.41" fill="#453180"/><rect x="63.27" y="154.90" width="5.75" height="2.41" fill="#443482"/><rect x="23.01" y="154.90" width="11.50" height="2.41" fill="#453381"/><rect x="373.89" y="154.90" width="11.50" height="2.41" fill="#443582"/><rect x="350.88" y="152.69" width="11.50" height="2.41" fill="#423d8a"/><rect x="253.09" y="152.69" width="17.26" height="2.41" fill="#453381"/><rect x="224.33" y="152.69" width="17.26" height="2.41" fill="#423b88"/><rect x="287.61" y="150.48" width="5.75" height="2.41" fill="#41408c"/><rect x="132.30" y="150.48" width="11.50" height="2.41" fill="#443683"/><rect x="281.85" y="150.48" width="17.26" height="2.41" fill="#433886"/><rect x="293.36" y="148.26" width="5.75" height="2.41" fill="#41408c"/><rect x="281.85" y="148.26" width="17.26" height="2.41" fill="#433a87"/><rect x="132.30" y="148.26" width="11.50" height="2.41" fill="#41408b"/><rect x="322.12" y="146.05" width="5.75" height="2.41" fill="#423c88"/><rect x="350.88" y="146.05" width="11.50" height="2.41" fill="#433a87"/><rect x="120.79" y="146.05" width="17.26" height="2.41" fill="#41408b"/><rect x="281.85" y="143.84" width="11.50" height="2.41" fill="#433885"/><rect x="120.79" y="143.84" width="17.26" height="2.41" fill="#41418d"/><rect x="339.37" y="143.84" width="5.75" height="2.41" fill="#41418d"/><rect x="69.03" y="141.63" width="11.50" height="2.41" fill="#423c88"/><rect x="40.26" y="141.63" width="17.26" height="2.41" fill="#40448f"/><rect x="327.87" y="141.63" width="11.50" height="2.41" fill="#40448f"/><rect x="241.59" y="139.41" width="11.50" height="2.41" fill="#433a87"/><rect x="138.05" y="139.41" width="11.50" height="2.41" fill="#40448f"/><rect x="74.78" y="139.41" width="11.50" height="2.41" fill="#41418d"/><rect x="80.53" y="137.20" width="11.50" height="2.41" fill="#423c89"/><rect x="149.55" y="137.20" width="5.75" height="2.41" fill="#40448f"/><rect x="109.29" y="137.20" width="17.26" height="2.41" fill="#423d89"/><rect x="5.75" y="134.99" width="5.75" height="2.41" fill="#41408c"/><rect x="149.55" y="134.99" width="5.75" height="2.41" fill="#3f4892"/><rect x="373.89" y="134.99" width="11.50" height="2.41" fill="#40438f"/><rect x="230.08" y="132.77" width="17.26" height="2.41" fill="#3e4893"/><rect x="339.37" y="132.77" width="5.75" height="2.41" fill="#3f4691"/><rect x="28.76" y="132.77" width="5.75" height="2.41" fill="#3f4691"/><rect x="69.03" y="130.56" width="5.75" height="2.41" fill="#3a4c94"/><rect x="184.07" y="130.56" width="5.75" height="2.41" fill="#41418d"/><rect x="293.36" y="130.56" width="5.75" height="2.41" fill="#3d4a94"/><rect x="74.78" y="128.35" width="17.26" height="2.41" fill="#3f4792"/><rect x="253.09" y="128.35" width="11.50" height="2.41" fill="#3e4993"/><rect x="327.87" y="128.35" width="5.75" height="2.41" fill="#404590"/><rect x="322.12" y="126.14" width="11.50" height="2.41" fill="#3f4590"/><rect x="396.90" y="126.14" width="5.75" height="2.41" fill="#3e4993"/><rect x="51.77" y="126.14" width="11.50" height="2.41" fill="#3f4792"/><rect x="356.63" y="123.92" width="5.75" height="2.41" fill="#335094"/><rect x="264.60" y="123.92" width="11.50" height="2.41" fill="#364e94"/><rect x="46.02" y="123.92" width="17.26" height="2.41" fill="#3d4b94"/><rect x="178.32" y="121.71" width="11.50" height="2.41" fill="#335194"/><rect x="40.26" y="121.71" width="11.50" height="2.41" fill="#3e4893"/><rect x="322.12" y="121.71" width="5.75" height="2.41" fill="#3e4993"/><rect x="235.84" y="119.50" width="5.75" height="2.41" fill="#325194"/><rect x="149.55" y="119.50" width="17.26" height="2.41" fill="#3e4a94"/><rect x="339.37" y="119.50" width="17.26" height="2.41" fill="#374e94"/><rect x="304.86" y="117.28" width="11.50" height="2.41" fill="#2b5595"/><rect x="299.11" y="117.28" width="11.50" height="2.41" fill="#2c5495"/><rect x="299.11" y="117.28" width="11.50" height="2.41" fill="#2a5695"/><rect x="23.01" y="115.07" width="11.50" height="2.41" fill="#285795"/><rect x="11.50" y="115.07" width="5.75" height="2.41" fill="#295695"/><rect x="17.26" y="115.07" width="17.26" height="2.41" fill="#3b4c94"/><rect x="368.14" y="112.86" width="17.26" height="2.41" fill="#3b4c94"/><rect x="345.13" y="112.86" width="5.75" height="2.41" fill="#374e94"/><rect x="149.55" y="112.86" width="11.50" height="2.41" fill="#305295"/><rect x="23.01" y="110.65" width="11.50" height="2.41" fill="#2e5395"/><rect x="143.80" y="110.65" width="17.26" height="2.41" fill="#275795"/><rect x="103.54" y="110.65" width="5.75" height="2.41" fill="#2f5395"/><rect x="299.11" y="108.43" width="11.50" height="2.41" fill="#354f94"/><rect x="109.29" y="108.43" width="11.50" height="2.41" fill="#255995"/><rect x="207.08" y="108.43" width="11.50" height="2.41" fill="#205c95"/><rect x="270.35" y="106.22" width="5.75" height="2.41" fill="#2a5695"/><rect x="339.37" y="106.22" width="11.50" height="2.41" fill="#285795"/><rect x="396.90" y="106.22" width="5.75" height="2.41" fill="#2c5595"/><rect x="207.08" y="104.01" width="11.50" height="2.41" fill="#315295"/><rect x="270.35" y="104.01" width="11.50" height="2.41" fill="#1f5c95"/><rect x="218.58" y="104.01" width="17.26" height="2.41" fill="#2c5495"/><rect x="379.64" y="101.79" width="5.75" height="2.41" fill="#2f5395"/><rect x="385.39" y="101.79" width="5.75" height="2.41" fill="#225a95"/><rect x="120.79" y="101.79" width="5.75" height="2.41" fill="#2f5395"/><rect x="339.37" y="99.58" width="11.50" height="2.41" fill="#156296"/><rect x="264.60" y="99.58" width="17.26" height="2.41" fill="#2c5595"/><rect x="132.30" y="99.58" width="5.75" height="2.41" fill="#2c5495"/><rect x="316.37" y="97.37" width="11.50" height="2.41" fill="#166196"/><rect x="396.90" y="97.37" width="5.75" height="2.41" fill="#1f5c95"/><rect x="189.82" y="97.37" width="5.75" height="2.41" fill="#1a5f95"/><rect x="362.38" y="95.15" width="11.50" height="2.41" fill="#166196"/><rect x="247.34" y="95.15" width="5.75" height="2.41" fill="#265895"/><rect x="23.01" y="95.15" width="17.26" height="2.41" fill="#106596"/><rect x="120.79" y="92.94" width="17.26" height="2.41" fill="#1f5c95"/><rect x="97.79" y="92.94" width="17.26" height="2.41" fill="#136396"/><rect x="299.11" y="92.94" width="17.26" height="2.41" fill="#136396"/><rect x="247.34" y="90.73" width="17.26" height="2.41" fill="#1f5c95"/><rect x="11.50" y="90.73" width="5.75" height="2.41" fill="#215b95"/><rect x="356.63" y="90.73" width="17.26" height="2.41" fill="#215b95"/><rect x="333.62" y="88.52" width="11.50" height="2.41" fill="#136396"/><rect x="373.89" y="88.52" width="11.50" height="2.41" fill="#176196"/><rect x="120.79" y="88.52" width="11.50" height="2.41" fill="#1b5e95"/><rect x="97.79" y="86.30" width="17.26" height="2.41" fill="#1a5f95"/><rect x="258.85" y="86.30" width="11.50" height="2.41" fill="#126396"/><rect x="184.07" y="86.30" width="11.50" height="2.41" fill="#166196"/><rect x="385.39" y="84.09" width="5.75" height="2.41" fill="#0d6796"/><rect x="97.79" y="84.09" width="17.26" height="2.41" fill="#195f95"/><rect x="356.63" y="84.09" width="5.75" height="2.41" fill="#096a95"/><rect x="195.57" y="81.88" width="5.75" height="2.41" fill="#106496"/><rect x="402.65" y="81.88" width="5.75" height="2.41" fill="#0c6796"/><rect x="201.32" y="81.88" width="17.26" height="2.41" fill="#096a95"/><rect x="195.57" y="79.66" width="5.75" height="2.41" fill="#0b6896"/><rect x="51.77" y="79.66" width="11.50" height="2.41" fill="#146296"/><rect x="356.63" y="79.66" width="17.26" height="2.41" fill="#0a6896"/><rect x="224.33" y="77.45" width="11.50" height="2.41" fill="#0e6696"/><rect x="281.85" y="77.45" width="11.50" height="2.41" fill="#0b6796"/><rect x="195.57" y="77.45" width="5.75" height="2.41" fill="#087093"/><rect x="230.08" y="75.24" width="11.50" height="2.41" fill="#096d94"/><rect x="207.08" y="75.24" width="5.75" height="2.41" fill="#0c6796"/><rect x="184.07" y="75.24" width="11.50" height="2.41" fill="#077292"/><rect x="57.52" y="73.03" width="11.50" height="2.41" fill="#0a6a95"/><rect x="143.80" y="73.03" width="17.26" height="2.41" fill="#0a6896"/><rect x="385.39" y="73.03" width="5.75" height="2.41" fill="#087093"/><rect x="86.28" y="70.81" width="17.26" height="2.41" fill="#077392"/><rect x="0.00" y="70.81" width="11.50" height="2.41" fill="#067591"/><rect x="46.02" y="70.81" width="11.50" height="2.41" fill="#096c94"/><rect x="350.88" y="68.60" width="11.50" height="2.41" fill="#086e94"/><rect x="396.90" y="68.60" width="17.26" height="2.41" fill="#096b95"/><rect x="172.56" y="68.60" width="11.50" height="2.41" fill="#067790"/><rect x="103.54" y="66.39" width="5.75" height="2.41" fill="#067890"/><rect x="126.55" y="66.39" width="17.26" height="2.41" fill="#05798f"/><rect x="287.61" y="66.39" width="17.26" height="2.41" fill="#096c94"/><rect x="287.61" y="64.17" width="5.75" height="2.41" fill="#077292"/><rect x="126.55" y="64.17" width="11.50" height="2.41" fill="#077292"/><rect x="92.03" y="64.17" width="5.75" height="2.41" fill="#087093"/><rect x="109.29" y="61.96" width="17.26" height="2.41" fill="#067890"/><rect x="74.78" y="61.96" width="11.50" height="2.41" fill="#057a8f"/><rect x="17.26" y="61.96" width="11.50" height="2.41" fill="#067690"/><rect x="80.53" y="340.79" width="5.85" height="2.51" fill="#472071"/><rect x="86.28" y="340.79" width="5.85" height="2.51" fill="#1f5c95"/><rect x="92.03" y="340.79" width="5.85" height="2.51" fill="#009683"/><rect x="97.79" y="340.79" width="5.85" height="2.51" fill="#462f7e"/><rect x="80.53" y="338.57" width="5.85" height="2.51" fill="#472171"/><rect x="86.28" y="338.57" width="5.85" height="2.51" fill="#1f5c95"/><rect x="92.03" y="338.57" width="5.85" height="2.51" fill="#009a80"/><rect x="97.79" y="338.57" width="5.85" height="2.51" fill="#45317f"/><rect x="80.53" y="336.36" width="5.85" height="2.51" fill="#472171"/><rect x="86.28" y="336.36" width="5.85" height="2.51" fill="#215b95"/><rect x="92.03" y="336.36" width="5.85" height="2.51" fill="#009e7f"/><rect x="97.79" y="336.36" width="5.85" height="2.51" fill="#453280"/><rect x="80.53" y="334.15" width="5.85" height="2.51" fill="#472272"/><rect x="86.28" y="334.15" width="5.85" height="2.51" fill="#1c5e95"/><rect x="92.03" y="334.15" width="5.85" height="2.51" fill="#00a879"/><rect x="97.79" y="334.15" width="5.85" height="2.51" fill="#443583"/><rect x="80.53" y="331.94" width="5.85" height="2.51" fill="#472171"/><rect x="86.28" y="331.94" width="5.85" height="2.51" fill="#235995"/><rect x="92.03" y="331.94" width="5.85" height="2.51" fill="#00a57b"/><rect x="97.79" y="331.94" width="5.85" height="2.51" fill="#443583"/><rect x="80.53" y="329.72" width="5.85" height="2.51" fill="#472272"/><rect x="86.28" y="329.72" width="5.85" height="2.51" fill="#225a95"/><rect x="92.03" y="329.72" width="5.85" height="2.51" fill="#00ab77"/><rect x="97.79" y="329.72" width="5.85" height="2.51" fill="#443784"/><rect x="80.53" y="327.51" width="5.85" height="2.51" fill="#471f70"/><rect x="86.28" y="327.51" width="5.85" height="2.51" fill="#315295"/><rect x="92.03" y="327.51" width="5.85" height="2.51" fill="#009f7e"/><rect x="97.79" y="327.51" width="5.85" height="2.51" fill="#443482"/><rect x="80.53" y="325.30" width="5.85" height="2.51" fill="#472070"/><rect x="86.28" y="325.30" width="5.85" height="2.51" fill="#2f5395"/><rect x="92.03" y="325.30" width="5.85" height="2.51" fill="#00a57b"/><rect x="97.79" y="325.30" width="5.85" height="2.51" fill="#443784"/><rect x="80.53" y="323.08" width="5.85" height="2.51" fill="#471f70"/><rect x="86.28" y="323.08" width="5.85" height="2.51" fill="#345094"/><rect x="92.03" y="323.08" width="5.85" height="2.51" fill="#00a17d"/><rect x="97.79" y="323.08" width="5.85" height="2.51" fill="#443784"/><rect x="80.53" y="320.87" width="5.85" height="2.51" fill="#472070"/><rect x="86.28" y="320.87" width="5.85" height="2.51" fill="#325194"/><rect x="92.03" y="320.87" width="5.85" height="2.51" fill="#00a67a"/><rect x="97.79" y="320.87" width="5.85" height="2.51" fill="#433986"/><rect x="80.53" y="318.66" width="5.85" height="2.51" fill="#471f6f"/><rect x="86.28" y="318.66" width="5.85" height="2.51" fill="#3a4d94"/><rect x="92.03" y="318.66" width="5.85" height="2.51" fill="#00a07d"/><rect x="97.79" y="318.66" width="5.85" height="2.51" fill="#433885"/><rect x="80.53" y="316.45" width="5.85" height="2.51" fill="#472070"/><rect x="86.28" y="316.45" width="5.85" height="2.51" fill="#364f94"/><rect x="92.03" y="316.45" width="5.85" height="2.51" fill="#00a77a"/><rect x="97.79" y="316.45" width="5.85" height="2.51" fill="#423b88"/><rect x="80.53" y="314.23" width="5.85" height="2.51" fill="#472171"/><rect x="86.28" y="314.23" width="5.85" height="2.51" fill="#345094"/><rect x="92.03" y="314.23" width="5.85" height="2.51" fill="#00ac76"/><rect x="97.79" y="314.23" width="5.85" height="2.51" fill="#413e8a"/><rect x="86.28" y="312.02" width="5.85" height="2.51" fill="#3e4993"/><rect x="92.03" y="312.02" width="5.85" height="2.51" fill="#00a07d"/><rect x="97.79" y="312.02" width="5.85" height="2.51" fill="#423b88"/><rect x="86.28" y="309.81" width="5.85" height="2.51" fill="#394d94"/><rect x="92.03" y="309.81" width="5.85" height="2.51" fill="#00ab77"/><rect x="97.79" y="309.81" width="5.85" height="2.51" fill="#41408c"/><rect x="86.28" y="307.59" width="5.85" height="2.51" fill="#3e4993"/><rect x="92.03" y="307.59" width="5.85" height="2.51" fill="#00a67a"/><rect x="97.79" y="307.59" width="5.85" height="2.51" fill="#413f8b"/><rect x="86.28" y="305.38" width="5.85" height="2.51" fill="#3e4a94"/><rect x="92.03" y="305.38" width="5.85" height="2.51" fill="#00aa78"/><rect x="97.79" y="305.38" width="5.85" height="2.51" fill="#40428d"/><rect x="86.28" y="303.17" width="5.85" height="2.51" fill="#3f4792"/><rect x="92.03" y="303.17" width="5.85" height="2.51" fill="#00a67a"/><rect x="97.79" y="303.17" width="5.85" height="2.51" fill="#40428d"/><rect x="86.28" y="300.95" width="5.85" height="2.51" fill="#3f4893"/><rect x="92.03" y="300.95" width="5.85" height="2.51" fill="#00ab77"/><rect x="97.79" y="300.95" width="5.85" height="2.51" fill="#3f4590"/><rect x="86.28" y="298.74" width="5.85" height="2.51" fill="#3f4590"/><rect x="92.03" y="298.74" width="5.85" height="2.51" fill="#00a57b"/><rect x="97.79" y="298.74" width="5.85" height="2.51" fill="#40448f"/><rect x="86.28" y="296.53" width="5.85" height="2.51" fill="#40438e"/><rect x="92.03" y="296.53" width="5.85" height="2.51" fill="#00a47b"/><rect x="97.79" y="296.53" width="5.85" height="2.51" fill="#3f4691"/><rect x="86.28" y="294.32" width="5.85" height="2.51" fill="#41418d"/><rect x="92.03" y="294.32" width="5.85" height="2.51" fill="#00a67a"/><rect x="97.79" y="294.32" width="5.85" height="2.51" fill="#3e4a94"/><rect x="86.28" y="292.10" width="5.85" height="2.51" fill="#423e8a"/><rect x="92.03" y="292.10" width="5.85" height="2.51" fill="#00a27c"/><rect x="97.79" y="292.10" width="5.85" height="2.51" fill="#3b4c94"/><rect x="86.28" y="289.89" width="5.85" height="2.51" fill="#423b87"/><rect x="92.03" y="289.89" width="5.85" height="2.51" fill="#00a07d"/><rect x="97.79" y="289.89" width="5.85" height="2.51" fill="#374e94"/><rect x="103.54" y="289.89" width="5.85" height="2.51" fill="#472273"/><rect x="86.28" y="287.68" width="5.85" height="2.51" fill="#433a87"/><rect x="92.03" y="287.68" width="5.85" height="2.51" fill="#00a47b"/><rect x="97.79" y="287.68" width="5.85" height="2.51" fill="#2c5495"/><rect x="103.54" y="287.68" width="5.85" height="2.51" fill="#482475"/><rect x="86.28" y="285.46" width="5.85" height="2.51" fill="#433885"/><rect x="92.03" y="285.46" width="5.85" height="2.51" fill="#00a17d"/><rect x="97.79" y="285.46" width="5.85" height="2.51" fill="#265895"/><rect x="103.54" y="285.46" width="5.85" height="2.51" fill="#482576"/><rect x="86.28" y="283.25" width="5.85" height="2.51" fill="#433885"/><rect x="92.03" y="283.25" width="5.85" height="2.51" fill="#00a17d"/><rect x="97.79" y="283.25" width="5.85" height="2.51" fill="#196095"/><rect x="103.54" y="283.25" width="5.85" height="2.51" fill="#482878"/><rect x="86.28" y="281.04" width="5.85" height="2.51" fill="#443482"/><rect x="92.03" y="281.04" width="5.85" height="2.51" fill="#009683"/><rect x="97.79" y="281.04" width="5.85" height="2.51" fill="#176095"/><rect x="103.54" y="281.04" width="5.85" height="2.51" fill="#482878"/><rect x="86.28" y="278.83" width="5.85" height="2.51" fill="#443582"/><rect x="92.03" y="278.83" width="5.85" height="2.51" fill="#009683"/><rect x="97.79" y="278.83" width="5.85" height="2.51" fill="#0a6995"/><rect x="103.54" y="278.83" width="5.85" height="2.51" fill="#472a7a"/><rect x="86.28" y="276.61" width="5.85" height="2.51" fill="#453381"/><rect x="92.03" y="276.61" width="5.85" height="2.51" fill="#009086"/><rect x="97.79" y="276.61" width="5.85" height="2.51" fill="#086e94"/><rect x="103.54" y="276.61" width="5.85" height="2.51" fill="#472b7b"/><rect x="86.28" y="274.40" width="5.85" height="2.51" fill="#46307f"/><rect x="92.03" y="274.40" width="5.85" height="2.51" fill="#02858b"/><rect x="97.79" y="274.40" width="5.85" height="2.51" fill="#086f93"/><rect x="103.54" y="274.40" width="5.85" height="2.51" fill="#472b7b"/><rect x="86.28" y="272.19" width="5.85" height="2.51" fill="#45317f"/><rect x="92.03" y="272.19" width="5.85" height="2.51" fill="#02868a"/><rect x="97.79" y="272.19" width="5.85" height="2.51" fill="#057a8f"/><rect x="103.54" y="272.19" width="5.85" height="2.51" fill="#462e7d"/><rect x="86.28" y="269.97" width="5.85" height="2.51" fill="#46307f"/><rect x="92.03" y="269.97" width="5.85" height="2.51" fill="#03818c"/><rect x="97.79" y="269.97" width="5.85" height="2.51" fill="#03818c"/><rect x="103.54" y="269.97" width="5.85" height="2.51" fill="#46307f"/><rect x="86.28" y="267.76" width="5.85" height="2.51" fill="#462d7c"/><rect x="92.03" y="267.76" width="5.85" height="2.51" fill="#067591"/><rect x="97.79" y="267.76" width="5.85" height="2.51" fill="#03808d"/><rect x="103.54" y="267.76" width="5.85" height="2.51" fill="#46307e"/><rect x="86.28" y="265.55" width="5.85" height="2.51" fill="#462e7d"/><rect x="92.03" y="265.55" width="5.85" height="2.51" fill="#067591"/><rect x="97.79" y="265.55" width="5.85" height="2.51" fill="#008c88"/><rect x="103.54" y="265.55" width="5.85" height="2.51" fill="#453381"/><rect x="86.28" y="263.34" width="5.85" height="2.51" fill="#472b7a"/><rect x="92.03" y="263.34" width="5.85" height="2.51" fill="#0a6996"/><rect x="97.79" y="263.34" width="5.85" height="2.51" fill="#018889"/><rect x="103.54" y="263.34" width="5.85" height="2.51" fill="#453280"/><rect x="86.28" y="261.12" width="5.85" height="2.51" fill="#472b7b"/><rect x="92.03" y="261.12" width="5.85" height="2.51" fill="#0a6996"/><rect x="97.79" y="261.12" width="5.85" height="2.51" fill="#009484"/><rect x="103.54" y="261.12" width="5.85" height="2.51" fill="#443583"/><rect x="86.28" y="258.91" width="5.85" height="2.51" fill="#482979"/><rect x="92.03" y="258.91" width="5.85" height="2.51" fill="#1a5f95"/><rect x="97.79" y="258.91" width="5.85" height="2.51" fill="#009285"/><rect x="103.54" y="258.91" width="5.85" height="2.51" fill="#443583"/><rect x="86.28" y="256.70" width="5.85" height="2.51" fill="#472a7a"/><rect x="92.03" y="256.70" width="5.85" height="2.51" fill="#195f95"/><rect x="97.79" y="256.70" width="5.85" height="2.51" fill="#009e7e"/><rect x="103.54" y="256.70" width="5.85" height="2.51" fill="#433986"/><rect x="86.28" y="254.48" width="5.85" height="2.51" fill="#482878"/><rect x="92.03" y="254.48" width="5.85" height="2.51" fill="#265895"/><rect x="97.79" y="254.48" width="5.85" height="2.51" fill="#009d7f"/><rect x="103.54" y="254.48" width="5.85" height="2.51" fill="#433986"/><rect x="86.28" y="252.27" width="5.85" height="2.51" fill="#482978"/><rect x="92.03" y="252.27" width="5.85" height="2.51" fill="#285695"/><rect x="97.79" y="252.27" width="5.85" height="2.51" fill="#00a57b"/><rect x="103.54" y="252.27" width="5.85" height="2.51" fill="#423d8a"/><rect x="86.28" y="250.06" width="5.85" height="2.51" fill="#482777"/><rect x="92.03" y="250.06" width="5.85" height="2.51" fill="#354f94"/><rect x="97.79" y="250.06" width="5.85" height="2.51" fill="#009e7e"/><rect x="103.54" y="250.06" width="5.85" height="2.51" fill="#413e8a"/><rect x="92.03" y="247.85" width="5.85" height="2.51" fill="#3c4b94"/><rect x="97.79" y="247.85" width="5.85" height="2.51" fill="#009e7f"/><rect x="103.54" y="247.85" width="5.85" height="2.51" fill="#41418d"/><rect x="92.03" y="245.63" width="5.85" height="2.51" fill="#3e4993"/><rect x="97.79" y="245.63" width="5.85" height="2.51" fill="#00a27c"/><rect x="103.54" y="245.63" width="5.85" height="2.51" fill="#3f4691"/><rect x="92.03" y="243.42" width="5.85" height="2.51" fill="#3f4792"/><rect x="97.79" y="243.42" width="5.85" height="2.51" fill="#00a47b"/><rect x="103.54" y="243.42" width="5.85" height="2.51" fill="#3d4a94"/><rect x="92.03" y="241.21" width="5.85" height="2.51" fill="#40438e"/><rect x="97.79" y="241.21" width="5.85" height="2.51" fill="#00a17d"/><rect x="103.54" y="241.21" width="5.85" height="2.51" fill="#384d94"/><rect x="92.03" y="238.99" width="5.85" height="2.51" fill="#40428d"/><rect x="97.79" y="238.99" width="5.85" height="2.51" fill="#00a67a"/><rect x="103.54" y="238.99" width="5.85" height="2.51" fill="#2d5495"/><rect x="109.29" y="238.99" width="5.85" height="2.51" fill="#472a79"/><rect x="92.03" y="236.78" width="5.85" height="2.51" fill="#423e8a"/><rect x="97.79" y="236.78" width="5.85" height="2.51" fill="#00a07e"/><rect x="103.54" y="236.78" width="5.85" height="2.51" fill="#2a5595"/><rect x="109.29" y="236.78" width="5.85" height="2.51" fill="#472a7a"/><rect x="92.03" y="234.57" width="5.85" height="2.51" fill="#423c89"/><rect x="97.79" y="234.57" width="5.85" height="2.51" fill="#009f7e"/><rect x="103.54" y="234.57" width="5.85" height="2.51" fill="#1f5c95"/><rect x="109.29" y="234.57" width="5.85" height="2.51" fill="#472c7b"/><rect x="92.03" y="232.35" width="5.85" height="2.51" fill="#423b88"/><rect x="97.79" y="232.35" width="5.85" height="2.51" fill="#009b80"/><rect x="103.54" y="232.35" width="5.85" height="2.51" fill="#146296"/><rect x="109.29" y="232.35" width="5.85" height="2.51" fill="#462d7c"/><rect x="92.03" y="230.14" width="5.85" height="2.51" fill="#433885"/><rect x="97.79" y="230.14" width="5.85" height="2.51" fill="#009185"/><rect x="103.54" y="230.14" width="5.85" height="2.51" fill="#0e6596"/><rect x="109.29" y="230.14" width="5.85" height="2.51" fill="#462e7d"/><rect x="92.03" y="227.93" width="5.85" height="2.51" fill="#433885"/><rect x="97.79" y="227.93" width="5.85" height="2.51" fill="#008e87"/><rect x="103.54" y="227.93" width="5.85" height="2.51" fill="#086e94"/><rect x="109.29" y="227.93" width="5.85" height="2.51" fill="#46307f"/><rect x="92.03" y="225.72" width="5.85" height="2.51" fill="#443583"/><rect x="97.79" y="225.72" width="5.85" height="2.51" fill="#03838c"/><rect x="103.54" y="225.72" width="5.85" height="2.51" fill="#087093"/><rect x="109.29" y="225.72" width="5.85" height="2.51" fill="#45317f"/><rect x="92.03" y="223.50" width="5.85" height="2.51" fill="#443482"/><rect x="97.79" y="223.50" width="5.85" height="2.51" fill="#047f8d"/><rect x="103.54" y="223.50" width="5.85" height="2.51" fill="#057990"/><rect x="109.29" y="223.50" width="5.85" height="2.51" fill="#453381"/><rect x="92.03" y="221.29" width="5.85" height="2.51" fill="#453481"/><rect x="97.79" y="221.29" width="5.85" height="2.51" fill="#057a8f"/><rect x="103.54" y="221.29" width="5.85" height="2.51" fill="#03808c"/><rect x="109.29" y="221.29" width="5.85" height="2.51" fill="#443583"/><rect x="92.03" y="219.08" width="5.85" height="2.51" fill="#453381"/><rect x="97.79" y="219.08" width="5.85" height="2.51" fill="#077491"/><rect x="103.54" y="219.08" width="5.85" height="2.51" fill="#01888a"/><rect x="109.29" y="219.08" width="5.85" height="2.51" fill="#443784"/><rect x="92.03" y="216.86" width="5.85" height="2.51" fill="#453280"/><rect x="97.79" y="216.86" width="5.85" height="2.51" fill="#086e94"/><rect x="103.54" y="216.86" width="5.85" height="2.51" fill="#008e87"/><rect x="109.29" y="216.86" width="5.85" height="2.51" fill="#433986"/><rect x="92.03" y="214.65" width="5.85" height="2.51" fill="#45317f"/><rect x="97.79" y="214.65" width="5.85" height="2.51" fill="#0a6a95"/><rect x="103.54" y="214.65" width="5.85" height="2.51" fill="#009683"/><rect x="109.29" y="214.65" width="5.85" height="2.51" fill="#423b88"/><rect x="92.03" y="212.44" width="5.85" height="2.51" fill="#46307f"/><rect x="97.79" y="212.44" width="5.85" height="2.51" fill="#106596"/><rect x="103.54" y="212.44" width="5.85" height="2.51" fill="#009d7f"/><rect x="109.29" y="212.44" width="5.85" height="2.51" fill="#423e8a"/><rect x="92.03" y="210.23" width="5.85" height="2.51" fill="#462f7e"/><rect x="97.79" y="210.23" width="5.85" height="2.51" fill="#195f95"/><rect x="103.54" y="210.23" width="5.85" height="2.51" fill="#00a27c"/><rect x="109.29" y="210.23" width="5.85" height="2.51" fill="#41408c"/><rect x="92.03" y="208.01" width="5.85" height="2.51" fill="#462e7d"/><rect x="97.79" y="208.01" width="5.85" height="2.51" fill="#285795"/><rect x="103.54" y="208.01" width="5.85" height="2.51" fill="#009f7e"/><rect x="109.29" y="208.01" width="5.85" height="2.51" fill="#40428d"/><rect x="97.79" y="205.80" width="5.85" height="2.51" fill="#2f5395"/><rect x="103.54" y="205.80" width="5.85" height="2.51" fill="#00a47b"/><rect x="109.29" y="205.80" width="5.85" height="2.51" fill="#3f4892"/><rect x="97.79" y="203.59" width="5.85" height="2.51" fill="#3b4c94"/><rect x="103.54" y="203.59" width="5.85" height="2.51" fill="#009f7e"/><rect x="109.29" y="203.59" width="5.85" height="2.51" fill="#3b4c94"/><rect x="97.79" y="201.37" width="5.85" height="2.51" fill="#394d94"/><rect x="103.54" y="201.37" width="5.85" height="2.51" fill="#00a879"/><rect x="109.29" y="201.37" width="5.85" height="2.51" fill="#275895"/><rect x="97.79" y="199.16" width="5.85" height="2.51" fill="#3f4892"/><rect x="103.54" y="199.16" width="5.85" height="2.51" fill="#009e7e"/><rect x="109.29" y="199.16" width="5.85" height="2.51" fill="#205b95"/><rect x="115.04" y="199.16" width="5.85" height="2.51" fill="#443583"/><rect x="97.79" y="196.95" width="5.85" height="2.51" fill="#3f4691"/><rect x="103.54" y="196.95" width="5.85" height="2.51" fill="#009981"/><rect x="109.29" y="196.95" width="5.85" height="2.51" fill="#136396"/><rect x="115.04" y="196.95" width="5.85" height="2.51" fill="#433986"/><rect x="97.79" y="194.74" width="5.85" height="2.51" fill="#3f4691"/><rect x="103.54" y="194.74" width="5.85" height="2.51" fill="#009683"/><rect x="109.29" y="194.74" width="5.85" height="2.51" fill="#086e94"/><rect x="115.04" y="194.74" width="5.85" height="2.51" fill="#423d89"/><rect x="97.79" y="192.52" width="5.85" height="2.51" fill="#40438e"/><rect x="103.54" y="192.52" width="5.85" height="2.51" fill="#018889"/><rect x="109.29" y="192.52" width="5.85" height="2.51" fill="#077392"/><rect x="115.04" y="192.52" width="5.85" height="2.51" fill="#413e8a"/><rect x="97.79" y="190.31" width="5.85" height="2.51" fill="#40448f"/><rect x="103.54" y="190.31" width="5.85" height="2.51" fill="#018889"/><rect x="109.29" y="190.31" width="5.85" height="2.51" fill="#02838b"/><rect x="115.04" y="190.31" width="5.85" height="2.51" fill="#40438e"/><rect x="97.79" y="188.10" width="5.85" height="2.51" fill="#40428d"/><rect x="103.54" y="188.10" width="5.85" height="2.51" fill="#047c8e"/><rect x="109.29" y="188.10" width="5.85" height="2.51" fill="#018a89"/><rect x="115.04" y="188.10" width="5.85" height="2.51" fill="#404590"/><rect x="97.79" y="185.88" width="5.85" height="2.51" fill="#413f8b"/><rect x="103.54" y="185.88" width="5.85" height="2.51" fill="#087093"/><rect x="109.29" y="185.88" width="5.85" height="2.51" fill="#008d87"/><rect x="115.04" y="185.88" width="5.85" height="2.51" fill="#3f4691"/><rect x="97.79" y="183.67" width="5.85" height="2.51" fill="#413f8b"/><rect x="103.54" y="183.67" width="5.85" height="2.51" fill="#096a95"/><rect x="109.29" y="183.67" width="5.85" height="2.51" fill="#009882"/><rect x="115.04" y="183.67" width="5.85" height="2.51" fill="#3e4994"/><rect x="97.79" y="181.46" width="5.85" height="2.51" fill="#423d8a"/><rect x="103.54" y="181.46" width="5.85" height="2.51" fill="#136396"/><rect x="109.29" y="181.46" width="5.85" height="2.51" fill="#009d7f"/><rect x="115.04" y="181.46" width="5.85" height="2.51" fill="#3a4c94"/><rect x="97.79" y="179.25" width="5.85" height="2.51" fill="#423c89"/><rect x="103.54" y="179.25" width="5.85" height="2.51" fill="#1e5c95"/><rect x="109.29" y="179.25" width="5.85" height="2.51" fill="#009b80"/><rect x="115.04" y="179.25" width="5.85" height="2.51" fill="#354f94"/><rect x="103.54" y="177.03" width="5.85" height="2.51" fill="#245995"/><rect x="109.29" y="177.03" width="5.85" height="2.51" fill="#009e7f"/><rect x="115.04" y="177.03" width="5.85" height="2.51" fill="#2b5595"/><rect x="103.54" y="174.82" width="5.85" height="2.51" fill="#265895"/><rect x="109.29" y="174.82" width="5.85" height="2.51" fill="#00a47b"/><rect x="115.04" y="174.82" width="5.85" height="2.51" fill="#1e5c95"/><rect x="103.54" y="172.61" width="5.85" height="2.51" fill="#325194"/><rect x="109.29" y="172.61" width="5.85" height="2.51" fill="#009b80"/><rect x="115.04" y="172.61" width="5.85" height="2.51" fill="#1c5e95"/><rect x="120.79" y="172.61" width="5.85" height="2.51" fill="#413e8a"/><rect x="103.54" y="170.39" width="5.85" height="2.51" fill="#335094"/><rect x="109.29" y="170.39" width="5.85" height="2.51" fill="#00a27c"/><rect x="115.04" y="170.39" width="5.85" height="2.51" fill="#0c6796"/><rect x="120.79" y="170.39" width="5.85" height="2.51" fill="#41418d"/><rect x="103.54" y="168.18" width="5.85" height="2.51" fill="#384d94"/><rect x="109.29" y="168.18" width="5.85" height="2.51" fill="#009981"/><rect x="115.04" y="168.18" width="5.85" height="2.51" fill="#096d94"/><rect x="120.79" y="168.18" width="5.85" height="2.51" fill="#40438e"/><rect x="103.54" y="165.97" width="5.85" height="2.51" fill="#394d94"/><rect x="109.29" y="165.97" width="5.85" height="2.51" fill="#009782"/><rect x="115.04" y="165.97" width="5.85" height="2.51" fill="#057890"/><rect x="120.79" y="165.97" width="5.85" height="2.51" fill="#3f4690"/><rect x="103.54" y="163.75" width="5.85" height="2.51" fill="#3f4892"/><rect x="109.29" y="163.75" width="5.85" height="2.51" fill="#03838c"/><rect x="115.04" y="163.75" width="5.85" height="2.51" fill="#067790"/><rect x="120.79" y="163.75" width="5.85" height="2.51" fill="#3f4590"/><rect x="103.54" y="161.54" width="5.85" height="2.51" fill="#3f4892"/><rect x="109.29" y="161.54" width="5.85" height="2.51" fill="#047f8d"/><rect x="115.04" y="161.54" width="5.85" height="2.51" fill="#02838b"/><rect x="120.79" y="161.54" width="5.85" height="2.51" fill="#3e4993"/><rect x="103.54" y="159.33" width="5.85" height="2.51" fill="#3f4892"/><rect x="109.29" y="159.33" width="5.85" height="2.51" fill="#05798f"/><rect x="115.04" y="159.33" width="5.85" height="2.51" fill="#008d87"/><rect x="120.79" y="159.33" width="5.85" height="2.51" fill="#3a4c94"/><rect x="103.54" y="157.12" width="5.85" height="2.51" fill="#3f4792"/><rect x="109.29" y="157.12" width="5.85" height="2.51" fill="#077392"/><rect x="115.04" y="157.12" width="5.85" height="2.51" fill="#009683"/><rect x="120.79" y="157.12" width="5.85" height="2.51" fill="#345094"/><rect x="103.54" y="154.90" width="5.85" height="2.51" fill="#3f4691"/><rect x="109.29" y="154.90" width="5.85" height="2.51" fill="#096a95"/><rect x="115.04" y="154.90" width="5.85" height="2.51" fill="#009981"/><rect x="120.79" y="154.90" width="5.85" height="2.51" fill="#305295"/><rect x="103.54" y="152.69" width="5.85" height="2.51" fill="#3f4590"/><rect x="109.29" y="152.69" width="5.85" height="2.51" fill="#126396"/><rect x="115.04" y="152.69" width="5.85" height="2.51" fill="#009b80"/><rect x="120.79" y="152.69" width="5.85" height="2.51" fill="#285695"/><rect x="109.29" y="150.48" width="5.85" height="2.51" fill="#1d5d95"/><rect x="115.04" y="150.48" width="5.85" height="2.51" fill="#009d7f"/><rect x="120.79" y="150.48" width="5.85" height="2.51" fill="#1b5e95"/><rect x="109.29" y="148.26" width="5.85" height="2.51" fill="#285795"/><rect x="115.04" y="148.26" width="5.85" height="2.51" fill="#009b80"/><rect x="120.79" y="148.26" width="5.85" height="2.51" fill="#0e6696"/><rect x="126.55" y="148.26" width="5.85" height="2.51" fill="#3f4792"/><rect x="109.29" y="146.05" width="5.85" height="2.51" fill="#305295"/><rect x="115.04" y="146.05" width="5.85" height="2.51" fill="#009186"/><rect x="120.79" y="146.05" width="5.85" height="2.51" fill="#086f93"/><rect x="126.55" y="146.05" width="5.85" height="2.51" fill="#3e4a94"/><rect x="109.29" y="143.84" width="5.85" height="2.51" fill="#325194"/><rect x="115.04" y="143.84" width="5.85" height="2.51" fill="#018989"/><rect x="120.79" y="143.84" width="5.85" height="2.51" fill="#047f8d"/><rect x="126.55" y="143.84" width="5.85" height="2.51" fill="#364f94"/><rect x="109.29" y="141.63" width="5.85" height="2.51" fill="#384e94"/><rect x="115.04" y="141.63" width="5.85" height="2.51" fill="#067890"/><rect x="120.79" y="141.63" width="5.85" height="2.51" fill="#02878a"/><rect x="126.55" y="141.63" width="5.85" height="2.51" fill="#325194"/><rect x="109.29" y="139.41" width="5.85" height="2.51" fill="#374e94"/><rect x="115.04" y="139.41" width="5.85" height="2.51" fill="#077292"/><rect x="120.79" y="139.41" width="5.85" height="2.51" fill="#009981"/><rect x="126.55" y="139.41" width="5.85" height="2.51" fill="#265895"/><rect x="109.29" y="137.20" width="5.85" height="2.51" fill="#3a4c94"/><rect x="115.04" y="137.20" width="5.85" height="2.51" fill="#0c6796"/><rect x="120.79" y="137.20" width="5.85" height="2.51" fill="#009981"/><rect x="126.55" y="137.20" width="5.85" height="2.51" fill="#1f5c95"/><rect x="115.04" y="134.99" width="5.85" height="2.51" fill="#106596"/><rect x="120.79" y="134.99" width="5.85" height="2.51" fill="#00a27c"/><rect x="126.55" y="134.99" width="5.85" height="2.51" fill="#0e6696"/><rect x="115.04" y="132.77" width="5.85" height="2.51" fill="#1b5e95"/><rect x="120.79" y="132.77" width="5.85" height="2.51" fill="#009d7f"/><rect x="126.55" y="132.77" width="5.85" height="2.51" fill="#096c94"/><rect x="132.30" y="132.77" width="5.85" height="2.51" fill="#345094"/><rect x="115.04" y="130.56" width="5.85" height="2.51" fill="#205c95"/><rect x="120.79" y="130.56" width="5.85" height="2.51" fill="#009782"/><rect x="126.55" y="130.56" width="5.85" height="2.51" fill="#067790"/><rect x="132.30" y="130.56" width="5.85" height="2.51" fill="#2e5395"/><rect x="115.04" y="128.35" width="5.85" height="2.51" fill="#275795"/><rect x="120.79" y="128.35" width="5.85" height="2.51" fill="#02858b"/><rect x="126.55" y="128.35" width="5.85" height="2.51" fill="#047c8e"/><rect x="132.30" y="128.35" width="5.85" height="2.51" fill="#2a5595"/><rect x="115.04" y="126.14" width="5.85" height="2.51" fill="#275795"/><rect x="120.79" y="126.14" width="5.85" height="2.51" fill="#047e8d"/><rect x="126.55" y="126.14" width="5.85" height="2.51" fill="#008c88"/><rect x="132.30" y="126.14" width="5.85" height="2.51" fill="#225a95"/><rect x="115.04" y="123.92" width="5.85" height="2.51" fill="#295695"/><rect x="120.79" y="123.92" width="5.85" height="2.51" fill="#067591"/><rect x="126.55" y="123.92" width="5.85" height="2.51" fill="#009782"/><rect x="132.30" y="123.92" width="5.85" height="2.51" fill="#1a5f95"/><rect x="115.04" y="121.71" width="5.85" height="2.51" fill="#295695"/><rect x="120.79" y="121.71" width="5.85" height="2.51" fill="#086e94"/><rect x="126.55" y="121.71" width="5.85" height="2.51" fill="#009d7f"/><rect x="132.30" y="121.71" width="5.85" height="2.51" fill="#0f6596"/><rect x="120.79" y="119.50" width="5.85" height="2.51" fill="#096a95"/><rect x="126.55" y="119.50" width="5.85" height="2.51" fill="#00a47b"/><rect x="132.30" y="119.50" width="5.85" height="2.51" fill="#086f93"/><rect x="120.79" y="117.28" width="5.85" height="2.51" fill="#106496"/><rect x="126.55" y="117.28" width="5.85" height="2.51" fill="#009e7e"/><rect x="132.30" y="117.28" width="5.85" height="2.51" fill="#067790"/><rect x="138.05" y="117.28" width="5.85" height="2.51" fill="#225a95"/><rect x="120.79" y="115.07" width="5.85" height="2.51" fill="#195f95"/><rect x="126.55" y="115.07" width="5.85" height="2.51" fill="#008a89"/><rect x="132.30" y="115.07" width="5.85" height="2.51" fill="#047d8e"/><rect x="138.05" y="115.07" width="5.85" height="2.51" fill="#1e5c95"/><rect x="120.79" y="112.86" width="5.85" height="2.51" fill="#1a5f95"/><rect x="126.55" y="112.86" width="5.85" height="2.51" fill="#03838c"/><rect x="132.30" y="112.86" width="5.85" height="2.51" fill="#008e87"/><rect x="138.05" y="112.86" width="5.85" height="2.51" fill="#156296"/><rect x="120.79" y="110.65" width="5.85" height="2.51" fill="#1c5d95"/><rect x="126.55" y="110.65" width="5.85" height="2.51" fill="#067790"/><rect x="132.30" y="110.65" width="5.85" height="2.51" fill="#009882"/><rect x="138.05" y="110.65" width="5.85" height="2.51" fill="#0e6696"/><rect x="126.55" y="108.43" width="5.85" height="2.51" fill="#086e93"/><rect x="132.30" y="108.43" width="5.85" height="2.51" fill="#009683"/><rect x="138.05" y="108.43" width="5.85" height="2.51" fill="#0a6a95"/><rect x="126.55" y="106.22" width="5.85" height="2.51" fill="#096a95"/><rect x="132.30" y="106.22" width="5.85" height="2.51" fill="#009782"/><rect x="138.05" y="106.22" width="5.85" height="2.51" fill="#087093"/><rect x="126.55" y="104.01" width="5.85" height="2.51" fill="#0b6796"/><rect x="132.30" y="104.01" width="5.85" height="2.51" fill="#009285"/><rect x="138.05" y="104.01" width="5.85" height="2.51" fill="#067890"/><rect x="143.80" y="104.01" width="5.85" height="2.51" fill="#176196"/><rect x="126.55" y="101.79" width="5.85" height="2.51" fill="#0a6896"/><rect x="132.30" y="101.79" width="5.85" height="2.51" fill="#009285"/><rect x="138.05" y="101.79" width="5.85" height="2.51" fill="#018a89"/><rect x="143.80" y="101.79" width="5.85" height="2.51" fill="#0d6696"/><rect x="126.55" y="99.58" width="5.85" height="2.51" fill="#0f6596"/><rect x="132.30" y="99.58" width="5.85" height="2.51" fill="#03808c"/><rect x="138.05" y="99.58" width="5.85" height="2.51" fill="#008e87"/><rect x="143.80" y="99.58" width="5.85" height="2.51" fill="#0a6896"/><rect x="126.55" y="97.37" width="5.85" height="2.51" fill="#106596"/><rect x="132.30" y="97.37" width="5.85" height="2.51" fill="#05798f"/><rect x="138.05" y="97.37" width="5.85" height="2.51" fill="#009c80"/><rect x="143.80" y="97.37" width="5.85" height="2.51" fill="#086e94"/><rect x="132.30" y="95.15" width="5.85" height="2.51" fill="#077192"/><rect x="138.05" y="95.15" width="5.85" height="2.51" fill="#009882"/><rect x="143.80" y="95.15" width="5.85" height="2.51" fill="#077491"/><rect x="132.30" y="92.94" width="5.85" height="2.51" fill="#096c94"/><rect x="138.05" y="92.94" width="5.85" height="2.51" fill="#009285"/><rect x="143.80" y="92.94" width="5.85" height="2.51" fill="#057b8e"/><rect x="149.55" y="92.94" width="5.85" height="2.51" fill="#0c6796"/><rect x="132.30" y="90.73" width="5.85" height="2.51" fill="#096c94"/><rect x="138.05" y="90.73" width="5.85" height="2.51" fill="#008e87"/><rect x="143.80" y="90.73" width="5.85" height="2.51" fill="#008e87"/><rect x="149.55" y="90.73" width="5.85" height="2.51" fill="#096d94"/><rect x="132.30" y="88.52" width="5.85" height="2.51" fill="#096a95"/><rect x="138.05" y="88.52" width="5.85" height="2.51" fill="#047e8d"/><rect x="143.80" y="88.52" width="5.85" height="2.51" fill="#009682"/><rect x="149.55" y="88.52" width="5.85" height="2.51" fill="#087093"/><rect x="138.05" y="86.30" width="5.85" height="2.51" fill="#067890"/><rect x="143.80" y="86.30" width="5.85" height="2.51" fill="#009b80"/><rect x="149.55" y="86.30" width="5.85" height="2.51" fill="#067690"/><rect x="138.05" y="84.09" width="5.85" height="2.51" fill="#077392"/><rect x="143.80" y="84.09" width="5.85" height="2.51" fill="#009a81"/><rect x="149.55" y="84.09" width="5.85" height="2.51" fill="#047d8e"/><rect x="155.31" y="84.09" width="5.85" height="2.51" fill="#096c94"/><rect x="138.05" y="81.88" width="5.85" height="2.51" fill="#077292"/><rect x="143.80" y="81.88" width="5.85" height="2.51" fill="#009384"/><rect x="149.55" y="81.88" width="5.85" height="2.51" fill="#008b88"/><rect x="155.31" y="81.88" width="5.85" height="2.51" fill="#087093"/><rect x="138.05" y="79.66" width="5.85" height="2.51" fill="#087193"/><rect x="143.80" y="79.66" width="5.85" height="2.51" fill="#018889"/><rect x="149.55" y="79.66" width="5.85" height="2.51" fill="#009981"/><rect x="155.31" y="79.66" width="5.85" height="2.51" fill="#077491"/><rect x="138.05" y="77.45" width="5.85" height="2.51" fill="#086f93"/><rect x="143.80" y="77.45" width="5.85" height="2.51" fill="#047c8e"/><rect x="149.55" y="77.45" width="5.85" height="2.51" fill="#009882"/><rect x="155.31" y="77.45" width="5.85" height="2.51" fill="#067790"/><rect x="143.80" y="75.24" width="5.85" height="2.51" fill="#067890"/><rect x="149.55" y="75.24" width="5.85" height="2.51" fill="#009b80"/><rect x="155.31" y="75.24" width="5.85" height="2.51" fill="#03818c"/><rect x="161.06" y="75.24" width="5.85" height="2.51" fill="#077192"/><rect x="143.80" y="73.03" width="5.85" height="2.51" fill="#067691"/><rect x="149.55" y="73.03" width="5.85" height="2.51" fill="#008f86"/><rect x="155.31" y="73.03" width="5.85" height="2.51" fill="#009583"/><rect x="161.06" y="73.03" width="5.85" height="2.51" fill="#067790"/><rect x="149.55" y="70.81" width="5.85" height="2.51" fill="#03828c"/><rect x="155.31" y="70.81" width="5.85" height="2.51" fill="#00a17d"/><rect x="161.06" y="70.81" width="5.85" height="2.51" fill="#047f8d"/><rect x="149.55" y="68.60" width="5.85" height="2.51" fill="#047e8e"/><rect x="155.31" y="68.60" width="5.85" height="2.51" fill="#00a47b"/><rect x="161.06" y="68.60" width="5.85" height="2.51" fill="#008f86"/><rect x="166.81" y="68.60" width="5.85" height="2.51" fill="#05798f"/><rect x="149.55" y="66.39" width="5.85" height="2.51" fill="#05798f"/><rect x="155.31" y="66.39" width="5.85" height="2.51" fill="#008c88"/><rect x="161.06" y="66.39" width="5.85" height="2.51" fill="#009b80"/><rect x="166.81" y="66.39" width="5.85" height="2.51" fill="#047d8e"/><rect x="155.31" y="64.17" width="5.85" height="2.51" fill="#02848b"/><rect x="161.06" y="64.17" width="5.85" height="2.51" fill="#00a27c"/><rect x="166.81" y="64.17" width="5.85" height="2.51" fill="#02868a"/><rect x="155.31" y="61.96" width="5.85" height="2.51" fill="#02848b"/><rect x="161.06" y="61.96" width="5.85" height="2.51" fill="#00a07d"/><rect x="166.81" y="61.96" width="5.85" height="2.51" fill="#009881"/><rect x="172.56" y="61.96" width="5.85" height="2.51" fill="#03838c"/><rect x="161.06" y="59.75" width="5.85" height="2.51" fill="#00a779"/><rect x="166.81" y="59.75" width="5.85" height="2.51" fill="#00c75b"/><rect x="172.56" y="59.75" width="5.85" height="2.51" fill="#00a27c"/><rect x="161.06" y="57.54" width="5.85" height="2.51" fill="#4dd224"/><rect x="166.81" y="57.54" width="5.85" height="2.51" fill="#c6e000"/><rect x="172.56" y="57.54" width="5.85" height="2.51" fill="#c6e000"/><rect x="178.32" y="57.54" width="5.85" height="2.51" fill="#4dd224"/><rect x="166.81" y="55.32" width="5.85" height="2.51" fill="#e2e200"/><rect x="172.56" y="55.32" width="5.85" height="2.51" fill="#fde400"/><rect x="178.32" y="55.32" width="5.85" height="2.51" fill="#e5e200"/><rect x="166.81" y="53.11" width="5.85" height="2.51" fill="#74d708"/><rect x="172.56" y="53.11" width="5.85" height="2.51" fill="#bddf00"/><rect x="178.32" y="53.11" width="5.85" height="2.51" fill="#f1e300"/><rect x="184.07" y="53.11" width="5.85" height="2.51" fill="#88d900"/><rect x="172.56" y="50.90" width="5.85" height="2.51" fill="#00c65c"/><rect x="178.32" y="50.90" width="5.85" height="2.51" fill="#a9dd00"/><rect x="184.07" y="50.90" width="5.85" height="2.51" fill="#4fd222"/><rect x="189.82" y="50.90" width="5.85" height="2.51" fill="#00c260"/><rect x="178.32" y="48.68" width="5.85" height="2.51" fill="#00b072"/><rect x="184.07" y="48.68" width="5.85" height="2.51" fill="#00c260"/><rect x="189.82" y="48.68" width="5.85" height="2.51" fill="#00ad75"/><rect x="178.32" y="46.47" width="5.85" height="2.51" fill="#009d7f"/><rect x="184.07" y="46.47" width="5.85" height="2.51" fill="#00ae74"/><rect x="189.82" y="46.47" width="5.85" height="2.51" fill="#00ae74"/><rect x="195.57" y="46.47" width="5.85" height="2.51" fill="#009d7f"/><rect x="184.07" y="44.26" width="5.85" height="2.51" fill="#009e7f"/><rect x="189.82" y="44.26" width="5.85" height="2.51" fill="#00b36f"/><rect x="195.57" y="44.26" width="5.85" height="2.51" fill="#009f7e"/><rect x="184.07" y="42.05" width="5.85" height="2.51" fill="#009981"/><rect x="189.82" y="42.05" width="5.85" height="2.51" fill="#00a879"/><rect x="195.57" y="42.05" width="5.85" height="2.51" fill="#00ad75"/><rect x="201.32" y="42.05" width="5.85" height="2.51" fill="#009a80"/><rect x="189.82" y="39.83" width="5.85" height="2.51" fill="#00a37c"/><rect x="195.57" y="39.83" width="5.85" height="2.51" fill="#00b86a"/><rect x="201.32" y="39.83" width="5.85" height="2.51" fill="#00a67a"/><rect x="189.82" y="37.62" width="5.85" height="2.51" fill="#00a47b"/><rect x="195.57" y="37.62" width="5.85" height="2.51" fill="#00b270"/><rect x="201.32" y="37.62" width="5.85" height="2.51" fill="#00b86a"/><rect x="207.08" y="37.62" width="5.85" height="2.51" fill="#00a57b"/><rect x="195.57" y="35.41" width="5.85" height="2.51" fill="#00ad75"/><rect x="201.32" y="35.41" width="5.85" height="2.51" fill="#00c35f"/><rect x="207.08" y="35.41" width="5.85" height="2.51" fill="#00b171"/><rect x="212.83" y="35.41" width="5.85" height="2.51" fill="#00a879"/><rect x="195.57" y="33.19" width="5.85" height="2.51" fill="#00af73"/><rect x="201.32" y="33.19" width="5.85" height="2.51" fill="#00bc66"/><rect x="207.08" y="33.19" width="5.85" height="2.51" fill="#00c45e"/><rect x="212.83" y="33.19" width="5.85" height="2.51" fill="#00b171"/><rect x="201.32" y="30.98" width="5.85" height="2.51" fill="#00b76b"/><rect x="207.08" y="30.98" width="5.85" height="2.51" fill="#1bcb47"/><rect x="212.83" y="30.98" width="5.85" height="2.51" fill="#00bf63"/><rect x="218.58" y="30.98" width="5.85" height="2.51" fill="#00b46e"/><rect x="207.08" y="28.77" width="5.85" height="2.51" fill="#00c062"/><rect x="212.83" y="28.77" width="5.85" height="2.51" fill="#43d02b"/><rect x="218.58" y="28.77" width="5.85" height="2.51" fill="#00c062"/><rect x="207.08" y="26.55" width="5.85" height="2.51" fill="#00bf63"/><rect x="212.83" y="26.55" width="5.85" height="2.51" fill="#11ca4e"/><rect x="218.58" y="26.55" width="5.85" height="2.51" fill="#56d31e"/><rect x="224.33" y="26.55" width="5.85" height="2.51" fill="#00c260"/><rect x="212.83" y="24.34" width="5.85" height="2.51" fill="#00c55d"/><rect x="218.58" y="24.34" width="5.85" height="2.51" fill="#50d221"/><rect x="224.33" y="24.34" width="5.85" height="2.51" fill="#3bcf30"/><rect x="230.08" y="24.34" width="5.85" height="2.51" fill="#00c45e"/><rect x="218.58" y="22.13" width="5.85" height="2.51" fill="#00c75b"/><rect x="224.33" y="22.13" width="5.85" height="2.51" fill="#6cd60e"/><rect x="230.08" y="22.13" width="5.85" height="2.51" fill="#36cf34"/><rect x="235.84" y="22.13" width="5.85" height="2.51" fill="#00c55d"/><rect x="224.33" y="19.92" width="5.85" height="2.51" fill="#02c859"/><rect x="230.08" y="19.92" width="5.85" height="2.51" fill="#69d510"/><rect x="235.84" y="19.92" width="5.85" height="2.51" fill="#4cd125"/><rect x="241.59" y="19.92" width="5.85" height="2.51" fill="#00c75b"/><rect x="230.08" y="17.70" width="5.85" height="2.51" fill="#09c954"/><rect x="235.84" y="17.70" width="5.85" height="2.51" fill="#66d512"/><rect x="241.59" y="17.70" width="5.85" height="2.51" fill="#62d415"/><rect x="247.34" y="17.70" width="5.85" height="2.51" fill="#08c954"/><rect x="235.84" y="15.49" width="5.85" height="2.51" fill="#22cc42"/><rect x="241.59" y="15.49" width="5.85" height="2.51" fill="#75d708"/><rect x="247.34" y="15.49" width="5.85" height="2.51" fill="#87d900"/><rect x="253.09" y="15.49" width="5.85" height="2.51" fill="#27cd3f"/><rect x="241.59" y="13.28" width="5.85" height="2.51" fill="#50d222"/><rect x="247.34" y="13.28" width="5.85" height="2.51" fill="#88d900"/><rect x="253.09" y="13.28" width="5.85" height="2.51" fill="#bfdf00"/><rect x="258.85" y="13.28" width="5.85" height="2.51" fill="#76d707"/><rect x="264.60" y="13.28" width="5.85" height="2.51" fill="#4ad126"/><rect x="253.09" y="11.06" width="5.85" height="2.51" fill="#8fda00"/><rect x="258.85" y="11.06" width="5.85" height="2.51" fill="#cfe100"/><rect x="264.60" y="11.06" width="5.85" height="2.51" fill="#c8e000"/><rect x="270.35" y="11.06" width="5.85" height="2.51" fill="#8cd900"/><rect x="258.85" y="8.85" width="5.85" height="2.51" fill="#a6dc00"/><rect x="264.60" y="8.85" width="5.85" height="2.51" fill="#c7e000"/><rect x="270.35" y="8.85" width="5.85" height="2.51" fill="#f6e400"/><rect x="276.10" y="8.85" width="5.85" height="2.51" fill="#c9e000"/><rect x="281.85" y="8.85" width="5.85" height="2.51" fill="#a6dc00"/><rect x="264.60" y="6.64" width="5.85" height="2.51" fill="#c5e000"/><rect x="270.35" y="6.64" width="5.85" height="2.51" fill="#d0e100"/><rect x="276.10" y="6.64" width="5.85" height="2.51" fill="#e9e200"/><rect x="281.85" y="6.64" width="5.85" height="2.51" fill="#fde400"/><rect x="287.61" y="6.64" width="5.85" height="2.51" fill="#e4e200"/><rect x="293.36" y="6.64" width="5.85" height="2.51" fill="#cee000"/><rect x="299.11" y="6.64" width="5.85" height="2.51" fill="#c4e000"/><rect x="276.10" y="4.43" width="5.85" height="2.51" fill="#d7e100"/><rect x="281.85" y="4.43" width="5.85" height="2.51" fill="#dce200"/><rect x="287.61" y="4.43" width="5.85" height="2.51" fill="#eae300"/><rect x="293.36" y="4.43" width="5.85" height="2.51" fill="#fde400"/><rect x="299.11" y="4.43" width="5.85" height="2.51" fill="#f2e300"/><rect x="304.86" y="4.43" width="5.85" height="2.51" fill="#e0e200"/><rect x="310.61" y="4.43" width="5.85" height="2.51" fill="#d9e100"/><rect x="287.61" y="2.21" width="5.85" height="2.51" fill="#e4e200"/><rect x="293.36" y="2.21" width="5.85" height="2.51" fill="#e7e200"/><rect x="299.11" y="2.21" width="5.85" height="2.51" fill="#eee300"/><rect x="304.86" y="2.21" width="5.85" height="2.51" fill="#fbe400"/><rect x="310.61" y="2.21" width="5.85" height="2.51" fill="#fce400"/><rect x="316.37" y="2.21" width="5.85" height="2.51" fill="#efe300"/><rect x="322.12" y="2.21" width="5.85" height="2.51" fill="#e8e200"/><rect x="327.87" y="2.21" width="5.85" height="2.51" fill="#e4e200"/><rect x="304.86" y="0.00" width="5.85" height="2.51" fill="#ece300"/><rect x="310.61" y="0.00" width="5.85" height="2.51" fill="#efe300"/><rect x="316.37" y="0.00" width="5.85" height="2.51" fill="#f6e400"/><rect x="322.12" y="0.00" width="5.85" height="2.51" fill="#fde400"/><rect x="327.87" y="0.00" width="5.85" height="2.51" fill="#f7e400"/><rect x="333.62" y="0.00" width="5.85" height="2.51" fill="#f0e300"/><rect x="339.37" y="0.00" width="5.85" height="2.51" fill="#ece300"/><rect x="247.34" y="316.45" width="5.75" height="6.64" fill="#00aa78"/><rect x="247.34" y="323.08" width="5.75" height="4.43" fill="#265895"/><rect x="253.09" y="261.12" width="5.75" height="4.43" fill="#008c88"/><rect x="258.85" y="219.08" width="5.75" height="4.43" fill="#00b46e"/><rect x="258.85" y="223.50" width="5.75" height="4.43" fill="#265895"/><rect x="264.60" y="185.88" width="5.75" height="6.64" fill="#047f8d"/><rect x="270.35" y="162.65" width="5.75" height="3.32" fill="#00aa78"/><rect x="276.10" y="142.73" width="5.75" height="3.32" fill="#00a57b"/><rect x="281.85" y="125.03" width="5.75" height="3.32" fill="#067790"/><rect x="287.61" y="111.75" width="5.75" height="3.32" fill="#00a57b"/><rect x="293.36" y="101.79" width="5.75" height="2.21" fill="#077292"/><rect x="299.11" y="90.29" width="5.75" height="2.66" fill="#009881"/><rect x="304.86" y="81.43" width="5.75" height="2.66" fill="#009881"/><rect x="299.11" y="185.44" width="5.75" height="2.66" fill="#0f6596"/><rect x="63.27" y="297.64" width="5.75" height="5.53" fill="#008c88"/><rect x="63.27" y="304.27" width="5.75" height="3.32" fill="#3e4a94"/><rect x="51.77" y="104.01" width="5.75" height="2.21" fill="#047f8d"/><rect x="63.27" y="136.09" width="5.75" height="3.32" fill="#265895"/><rect x="327.87" y="54.22" width="5.75" height="3.32" fill="#e9e200"/><rect x="345.13" y="42.05" width="5.75" height="2.21" fill="#00b46e"/><rect x="46.02" y="44.26" width="5.75" height="2.21" fill="#00aa78"/><rect x="224.33" y="77.45" width="5.75" height="2.21" fill="#047f8d"/><rect x="316.37" y="66.39" width="5.75" height="2.21" fill="#008c88"/></svg><div style="left:88.20px;top:242.00px;width:1.00px;height:343.00px;background:rgba(230,230,235,.05)"></div><span style="left:85.50px;top:602.82px;font-size:11.5px;line-height:15px;color:#8c8c8c;-webkit-text-stroke:0;">0</span><div style="left:145.70px;top:242.00px;width:1.00px;height:343.00px;background:rgba(230,230,235,.05)"></div><span style="left:139.80px;top:602.82px;font-size:11.5px;line-height:15px;color:#8c8c8c;-webkit-text-stroke:0;">10</span><div style="left:203.20px;top:242.00px;width:1.00px;height:343.00px;background:rgba(230,230,235,.05)"></div><span style="left:197.30px;top:602.82px;font-size:11.5px;line-height:15px;color:#8c8c8c;-webkit-text-stroke:0;">20</span><div style="left:260.70px;top:242.00px;width:1.00px;height:343.00px;background:rgba(230,230,235,.05)"></div><span style="left:254.80px;top:602.82px;font-size:11.5px;line-height:15px;color:#8c8c8c;-webkit-text-stroke:0;">30</span><div style="left:318.20px;top:242.00px;width:1.00px;height:343.00px;background:rgba(230,230,235,.05)"></div><span style="left:312.30px;top:602.82px;font-size:11.5px;line-height:15px;color:#8c8c8c;-webkit-text-stroke:0;">40</span><div style="left:375.70px;top:242.00px;width:1.00px;height:343.00px;background:rgba(230,230,235,.05)"></div><span style="left:369.80px;top:602.82px;font-size:11.5px;line-height:15px;color:#8c8c8c;-webkit-text-stroke:0;">50</span><div style="left:433.20px;top:242.00px;width:1.00px;height:343.00px;background:rgba(230,230,235,.05)"></div><span style="left:427.30px;top:602.82px;font-size:11.5px;line-height:15px;color:#8c8c8c;-webkit-text-stroke:0;">60</span><div style="left:490.70px;top:242.00px;width:1.00px;height:343.00px;background:rgba(230,230,235,.05)"></div><span style="left:484.80px;top:602.82px;font-size:11.5px;line-height:15px;color:#8c8c8c;-webkit-text-stroke:0;">70</span><div style="left:88.70px;top:584.10px;width:408.40px;height:1.00px;background:rgba(230,230,235,.05)"></div><span style="left:59.20px;top:577.22px;font-size:11.5px;line-height:15px;color:#8c8c8c;-webkit-text-stroke:0;">0</span><div style="left:88.70px;top:539.81px;width:408.40px;height:1.00px;background:rgba(230,230,235,.05)"></div><span style="left:52.81px;top:532.93px;font-size:11.5px;line-height:15px;color:#8c8c8c;-webkit-text-stroke:0;">20</span><div style="left:88.70px;top:495.52px;width:408.40px;height:1.00px;background:rgba(230,230,235,.05)"></div><span style="left:52.81px;top:488.64px;font-size:11.5px;line-height:15px;color:#8c8c8c;-webkit-text-stroke:0;">40</span><div style="left:88.70px;top:451.23px;width:408.40px;height:1.00px;background:rgba(230,230,235,.05)"></div><span style="left:52.81px;top:444.35px;font-size:11.5px;line-height:15px;color:#8c8c8c;-webkit-text-stroke:0;">60</span><div style="left:88.70px;top:406.94px;width:408.40px;height:1.00px;background:rgba(230,230,235,.05)"></div><span style="left:52.81px;top:400.06px;font-size:11.5px;line-height:15px;color:#8c8c8c;-webkit-text-stroke:0;">80</span><div style="left:88.70px;top:362.65px;width:408.40px;height:1.00px;background:rgba(230,230,235,.05)"></div><span style="left:46.41px;top:355.77px;font-size:11.5px;line-height:15px;color:#8c8c8c;-webkit-text-stroke:0;">100</span><div style="left:88.70px;top:318.36px;width:408.40px;height:1.00px;background:rgba(230,230,235,.05)"></div><span style="left:46.41px;top:311.48px;font-size:11.5px;line-height:15px;color:#8c8c8c;-webkit-text-stroke:0;">120</span><div style="left:88.70px;top:274.07px;width:408.40px;height:1.00px;background:rgba(230,230,235,.05)"></div><span style="left:46.41px;top:267.19px;font-size:11.5px;line-height:15px;color:#8c8c8c;-webkit-text-stroke:0;">140</span><span style="left:46.41px;top:222.90px;font-size:11.5px;line-height:15px;color:#8c8c8c;-webkit-text-stroke:0;">160</span><div style="left:70.30px;top:225.50px;width:1.00px;height:375.50px;background:#c8c8c8"></div><div style="left:70.80px;top:600.50px;width:443.20px;height:1.00px;background:#c8c8c8"></div><span style="left:273.17px;top:622.22px;font-size:11.5px;line-height:15px;color:#8c8c8c;letter-spacing:0.341px;-webkit-text-stroke:0;">X-axis</span><span style="left:28.9px;top:413.9px;font-size:11.5px;line-height:14px;color:#8c8c8c;transform:translate(-50%,-50%) rotate(-90deg);letter-spacing:0.3px">Y-axis</span><div style="left:520.60px;top:225.75px;width:21.50px;height:374.05px;background:linear-gradient(to bottom,#fde400 0.0%,#c8e000 8.0%,#80d800 16.0%,#00c85a 25.5%,#00aa78 38.0%,#008c88 50.0%,#0a6896 64.0%,#3e4a94 75.0%,#482878 88.0%,#440154 100.0%);box-shadow:0 0 0 0.5px rgba(0,0,0,.10)"></div><div style="left:538.60px;top:257.50px;width:3.50px;height:0.80px;background:rgba(140,140,140,.45)"></div><span style="left:546.30px;top:250.51px;font-size:11.5px;line-height:15px;color:#8c8c8c;-webkit-text-stroke:0;">100</span><div style="left:538.60px;top:313.85px;width:3.50px;height:0.80px;background:rgba(140,140,140,.45)"></div><span style="left:546.30px;top:306.87px;font-size:11.5px;line-height:15px;color:#8c8c8c;-webkit-text-stroke:0;">80</span><div style="left:538.60px;top:370.20px;width:3.50px;height:0.80px;background:rgba(140,140,140,.45)"></div><span style="left:546.30px;top:363.21px;font-size:11.5px;line-height:15px;color:#8c8c8c;-webkit-text-stroke:0;">60</span><div style="left:538.60px;top:426.55px;width:3.50px;height:0.80px;background:rgba(140,140,140,.45)"></div><span style="left:546.30px;top:419.56px;font-size:11.5px;line-height:15px;color:#8c8c8c;-webkit-text-stroke:0;">40</span><div style="left:538.60px;top:482.90px;width:3.50px;height:0.80px;background:rgba(140,140,140,.45)"></div><span style="left:546.30px;top:475.91px;font-size:11.5px;line-height:15px;color:#8c8c8c;-webkit-text-stroke:0;">20</span><div style="left:538.60px;top:539.25px;width:3.50px;height:0.80px;background:rgba(140,140,140,.45)"></div><span style="left:546.30px;top:532.26px;font-size:11.5px;line-height:15px;color:#8c8c8c;-webkit-text-stroke:0;">0</span><div style="left:538.60px;top:595.60px;width:3.50px;height:0.80px;background:rgba(140,140,140,.45)"></div><span style="left:546.30px;top:588.62px;font-size:11.5px;line-height:15px;color:#8c8c8c;-webkit-text-stroke:0;">-20</span><div style="left:520.60px;top:320.00px;width:21.50px;height:0.80px;background:rgba(255,255,255,.62)"></div><div style="left:529.05px;top:318.10px;width:4.60px;height:4.60px;background:#fff;transform:rotate(45deg)"></div><div style="left:520.60px;top:507.90px;width:21.50px;height:0.80px;background:rgba(255,255,255,.62)"></div><div style="left:529.05px;top:506.00px;width:4.60px;height:4.60px;background:#fff;transform:rotate(45deg)"></div><div style="left:598.60px;top:353.50px;width:2.00px;height:2.00px;background:#6a6a6a;border-radius:1px"></div><div style="left:598.60px;top:357.50px;width:2.00px;height:2.00px;background:#6a6a6a;border-radius:1px"></div><div style="left:598.60px;top:361.50px;width:2.00px;height:2.00px;background:#6a6a6a;border-radius:1px"></div><div style="left:803.40px;top:353.50px;width:2.00px;height:2.00px;background:#6a6a6a;border-radius:1px"></div><div style="left:803.40px;top:357.50px;width:2.00px;height:2.00px;background:#6a6a6a;border-radius:1px"></div><div style="left:803.40px;top:361.50px;width:2.00px;height:2.00px;background:#6a6a6a;border-radius:1px"></div><div style="left:491.00px;top:648.30px;width:2.00px;height:2.00px;background:#6a6a6a;border-radius:1px"></div><div style="left:495.00px;top:648.30px;width:2.00px;height:2.00px;background:#6a6a6a;border-radius:1px"></div><div style="left:499.00px;top:648.30px;width:2.00px;height:2.00px;background:#6a6a6a;border-radius:1px"></div><div style="left:603.50px;top:73.30px;width:197.00px;height:572.00px;background:#fff;border:1px solid #c9c9cb;border-radius:5px;box-sizing:border-box"></div><div style="left:613.20px;top:81.00px;width:177.80px;height:19.80px;background:#eff0f2;border-radius:4px"></div><span style="left:653.14px;top:83.32px;font-size:12px;line-height:16px;color:#1c1c1e;letter-spacing:-0.416px;">Configuration Panel</span><div style="left:613.20px;top:110.50px;width:177.80px;height:19.00px;background:#fff;border:1px solid #e7e7e9;border-radius:5px;box-sizing:border-box"></div><svg style="left:629.40px;top:113.00px" width="14" height="14" viewBox="0 0 14 14"><path d="M2 3.2 a1.2 1.2 0 0 1 1.2 -1.2 H9.6 L12 4.4 V10.8 a1.2 1.2 0 0 1 -1.2 1.2 H3.2 a1.2 1.2 0 0 1 -1.2 -1.2 Z" fill="none" stroke="#222" stroke-width="1.3" stroke-linejoin="round"/><path d="M4.4 2.2 V5 H8.6 V2.2 M4.2 12 V8.2 H9.8 V12" fill="none" stroke="#222" stroke-width="1.25" stroke-linejoin="round"/></svg><svg style="left:673.00px;top:113.00px" width="14" height="14" viewBox="0 0 14 14"><path d="M1.8 3.6 a1 1 0 0 1 1 -1 H5.6 L7 4.2 H11.2 a1 1 0 0 1 1 1 V10.6 a1 1 0 0 1 -1 1 H2.8 a1 1 0 0 1 -1 -1 Z" fill="none" stroke="#222" stroke-width="1.3" stroke-linejoin="round"/></svg><svg style="left:717.90px;top:113.00px" width="14" height="14" viewBox="0 0 14 14"><rect x="5" y="5" width="7.2" height="7.4" rx="1.6" fill="none" stroke="#222" stroke-width="1.3"/><path d="M3.6 9.4 a1.6 1.6 0 0 1 -1.6 -1.6 V3.4 a1.6 1.6 0 0 1 1.6 -1.6 H7.4 a1.6 1.6 0 0 1 1.6 1.6" fill="none" stroke="#222" stroke-width="1.3"/></svg><svg style="left:761.80px;top:113.00px" width="14" height="14" viewBox="0 0 14 14"><path d="M10.2 5 V4 a1.2 1.2 0 0 0 -1.2 -1.2 H3.6 a1.2 1.2 0 0 0 -1.2 1.2 V11 a1.2 1.2 0 0 0 1.2 1.2 H9 a1.2 1.2 0 0 0 1.2 -1.2 V10.4" fill="none" stroke="#222" stroke-width="1.3"/><path d="M4.4 2.8 V1.8 H8.2 V2.8" fill="none" stroke="#222" stroke-width="1.25"/><path d="M6.6 7.7 H12.4 M10.4 5.7 L12.4 7.7 L10.4 9.7" fill="none" stroke="#222" stroke-width="1.3" stroke-linecap="round" stroke-linejoin="round"/></svg><div style="left:613.20px;top:137.20px;width:177.80px;height:485.30px;background:#fff;border:1px solid #c9c9cb;box-sizing:border-box;overflow:hidden"></div><div style="left:613.70px;top:137.70px;width:176.80px;height:21.50px;background:#e4e5e7"></div><div style="left:701.20px;top:137.70px;width:1.00px;height:21.50px;background:#eeeeef"></div><span style="left:619.20px;top:140.92px;font-size:12px;line-height:16px;color:#1c1c1e;letter-spacing:-0.169px;">Parameter</span><span style="left:707.00px;top:140.92px;font-size:12px;line-height:16px;color:#1c1c1e;letter-spacing:-0.160px;">Value</span><div style="left:613.70px;top:160.20px;width:176.80px;height:15.78px;background:#f0f1f3"></div><svg style="left:614.10px;top:164.39px" width="10" height="8" viewBox="0 0 10 8"><path d="M2 2.6 L5 5.6 L8 2.6" fill="none" stroke="#a6a6a8" stroke-width="1" stroke-linecap="round" stroke-linejoin="round"/></svg><span style="left:625.40px;top:160.41px;font-size:12px;line-height:16px;color:#1c1c1e;">Experiment...</span><span style="left:632.40px;top:176.19px;font-size:12px;line-height:16px;color:#1c1c1e;">res_ch</span><span style="left:706.40px;top:176.19px;font-size:12px;line-height:16px;color:#1c1c1e;">6</span><div style="left:613.70px;top:191.76px;width:176.80px;height:15.78px;background:#f0f1f3"></div><span style="left:632.40px;top:191.97px;font-size:12px;line-height:16px;color:#1c1c1e;">qubit_ch</span><span style="left:706.40px;top:191.97px;font-size:12px;line-height:16px;color:#1c1c1e;">4</span><span style="left:632.40px;top:207.75px;font-size:12px;line-height:16px;color:#1c1c1e;">mixer_freq</span><span style="left:706.40px;top:207.75px;font-size:12px;line-height:16px;color:#1c1c1e;">500</span><div style="left:613.70px;top:223.32px;width:176.80px;height:15.78px;background:#f0f1f3"></div><span style="left:632.40px;top:223.53px;font-size:12px;line-height:16px;color:#1c1c1e;">ro_chs</span><span style="left:706.40px;top:223.53px;font-size:12px;line-height:16px;color:#1c1c1e;">[0]</span><span style="left:632.40px;top:239.31px;font-size:12px;line-height:16px;color:#1c1c1e;">reps</span><span style="left:706.40px;top:239.31px;font-size:12px;line-height:16px;color:#1c1c1e;">20</span><div style="left:613.70px;top:254.88px;width:176.80px;height:15.78px;background:#f0f1f3"></div><span style="left:632.40px;top:255.09px;font-size:12px;line-height:16px;color:#1c1c1e;">nqz</span><span style="left:706.40px;top:255.09px;font-size:12px;line-height:16px;color:#1c1c1e;">1</span><span style="left:632.40px;top:270.87px;font-size:12px;line-height:16px;color:#1c1c1e;">qubit_nqz</span><span style="left:706.40px;top:270.87px;font-size:12px;line-height:16px;color:#1c1c1e;">2</span><div style="left:613.70px;top:286.44px;width:176.80px;height:15.78px;background:#f0f1f3"></div><span style="left:632.40px;top:286.65px;font-size:12px;line-height:16px;color:#1c1c1e;">relax_delay</span><span style="left:706.40px;top:286.65px;font-size:12px;line-height:16px;color:#1c1c1e;">200</span><span style="left:632.40px;top:302.43px;font-size:12px;line-height:16px;color:#1c1c1e;">res_phase</span><span style="left:706.40px;top:302.43px;font-size:12px;line-height:16px;color:#1c1c1e;">0</span><div style="left:613.70px;top:318.00px;width:176.80px;height:15.78px;background:#f0f1f3"></div><span style="left:632.40px;top:318.21px;font-size:12px;line-height:16px;color:#1c1c1e;">pulse_style</span><span style="left:706.40px;top:318.21px;font-size:12px;line-height:16px;color:#1c1c1e;">const</span><span style="left:632.40px;top:333.99px;font-size:12px;line-height:16px;color:#1c1c1e;">length</span><span style="left:706.40px;top:333.99px;font-size:12px;line-height:16px;color:#1c1c1e;">10</span><div style="left:613.70px;top:349.56px;width:176.80px;height:15.78px;background:#f0f1f3"></div><span style="left:632.40px;top:349.77px;font-size:12px;line-height:16px;color:#1c1c1e;">pulse_gain</span><span style="left:706.40px;top:349.77px;font-size:12px;line-height:16px;color:#1c1c1e;">5500</span><span style="left:632.40px;top:365.55px;font-size:12px;line-height:16px;color:#1c1c1e;">adc_trig_...</span><span style="left:706.40px;top:365.55px;font-size:12px;line-height:16px;color:#1c1c1e;">0.5</span><div style="left:613.70px;top:381.12px;width:176.80px;height:15.78px;background:#f0f1f3"></div><span style="left:632.40px;top:381.33px;font-size:12px;line-height:16px;color:#1c1c1e;">cavity_LO</span><span style="left:706.40px;top:381.33px;font-size:12px;line-height:16px;color:#1c1c1e;">650000000...</span><span style="left:632.40px;top:397.11px;font-size:12px;line-height:16px;color:#1c1c1e;">cavity_wi...</span><span style="left:706.40px;top:397.11px;font-size:12px;line-height:16px;color:#1c1c1e;">1.0903695</span><div style="left:613.70px;top:412.68px;width:176.80px;height:15.78px;background:#f0f1f3"></div><span style="left:632.40px;top:412.89px;font-size:12px;line-height:16px;color:#1c1c1e;">cavity_wi...</span><span style="left:706.40px;top:412.89px;font-size:12px;line-height:16px;color:#1c1c1e;">-15.77597</span><svg style="left:621.10px;top:432.65px" width="10" height="8" viewBox="0 0 10 8"><path d="M2 2.6 L5 5.6 L8 2.6" fill="none" stroke="#a6a6a8" stroke-width="1" stroke-linecap="round" stroke-linejoin="round"/></svg><span style="left:632.40px;top:428.67px;font-size:12px;line-height:16px;color:#1c1c1e;">Additional...</span><div style="left:613.70px;top:444.24px;width:176.80px;height:15.78px;background:#f0f1f3"></div><svg style="left:628.10px;top:448.43px" width="10" height="8" viewBox="0 0 10 8"><path d="M2 2.6 L5 5.6 L8 2.6" fill="none" stroke="#a6a6a8" stroke-width="1" stroke-linecap="round" stroke-linejoin="round"/></svg><span style="left:639.40px;top:444.45px;font-size:12px;line-height:16px;color:#1c1c1e;">1</span><span style="left:646.40px;top:460.23px;font-size:12px;line-height:16px;color:#1c1c1e;">channel</span><span style="left:706.40px;top:460.23px;font-size:12px;line-height:16px;color:#1c1c1e;">4</span><div style="left:613.70px;top:475.80px;width:176.80px;height:15.78px;background:#f0f1f3"></div><span style="left:646.40px;top:476.01px;font-size:12px;line-height:16px;color:#1c1c1e;">delay_t...</span><span style="left:706.40px;top:476.01px;font-size:12px;line-height:16px;color:#1c1c1e;">0</span><span style="left:632.40px;top:491.79px;font-size:12px;line-height:16px;color:#1c1c1e;">readout_l...</span><span style="left:706.40px;top:491.79px;font-size:12px;line-height:16px;color:#1c1c1e;">3</span><div style="left:613.70px;top:507.36px;width:176.80px;height:15.78px;background:#f0f1f3"></div><span style="left:632.40px;top:507.57px;font-size:12px;line-height:16px;color:#1c1c1e;">pulse_freq</span><span style="left:706.40px;top:507.57px;font-size:12px;line-height:16px;color:#1c1c1e;">-0.25</span><span style="left:632.40px;top:523.35px;font-size:12px;line-height:16px;color:#1c1c1e;">pulse_gains</span><span style="left:706.40px;top:523.35px;font-size:12px;line-height:16px;color:#1c1c1e;">[0.171875]</span><div style="left:613.70px;top:538.92px;width:176.80px;height:15.78px;background:#f0f1f3"></div><span style="left:632.40px;top:539.13px;font-size:12px;line-height:16px;color:#1c1c1e;">pulse_freqs</span><span style="left:706.40px;top:539.13px;font-size:12px;line-height:16px;color:#1c1c1e;">[-0.25]</span><span style="left:632.40px;top:554.91px;font-size:12px;line-height:16px;color:#1c1c1e;">TransSpan</span><span style="left:706.40px;top:554.91px;font-size:12px;line-height:16px;color:#1c1c1e;">1.5</span><div style="left:613.70px;top:570.48px;width:176.80px;height:15.78px;background:#f0f1f3"></div><span style="left:632.40px;top:570.69px;font-size:12px;line-height:16px;color:#1c1c1e;">TransNum...</span><span style="left:706.40px;top:570.69px;font-size:12px;line-height:16px;color:#1c1c1e;">61</span><span style="left:632.40px;top:586.47px;font-size:12px;line-height:16px;color:#1c1c1e;">cav_relax...</span><span style="left:706.40px;top:586.47px;font-size:12px;line-height:16px;color:#1c1c1e;">30</span><div style="left:613.70px;top:602.04px;width:176.80px;height:15.78px;background:#f0f1f3"></div><span style="left:632.40px;top:602.25px;font-size:12px;line-height:16px;color:#1c1c1e;">qubit_pul...</span><span style="left:706.40px;top:602.25px;font-size:12px;line-height:16px;color:#1c1c1e;">const</span><span style="left:632.40px;top:618.03px;font-size:12px;line-height:16px;color:#1c1c1e;clip-path:inset(0 0 13.2px 0);">qubit_len...</span><span style="left:613.20px;top:625.60px;font-size:10px;line-height:13px;color:#1c1c1e;letter-spacing:0.065px;">Drag and Drop .json Files</span><div style="left:807.60px;top:73.20px;width:58.20px;height:21.70px;background:#f6f7f9;border:1px solid #c6c6c8;box-sizing:border-box"></div><div style="left:808.10px;top:91.20px;width:57.70px;height:3.70px;background:#68bff3"></div><span style="left:818.98px;top:76.11px;font-size:10.5px;line-height:14px;color:#1c1c1e;letter-spacing:0.067px;">Voltage</span><div style="left:865.40px;top:73.20px;width:61.20px;height:21.70px;background:#f6f7f9;border:1px solid #c6c6c8;box-sizing:border-box"></div><span style="left:874.49px;top:77.11px;font-size:10.5px;line-height:14px;color:#1c1c1e;letter-spacing:-0.024px;">Accounts</span><div style="left:926.20px;top:73.20px;width:57.50px;height:21.70px;background:#f6f7f9;border:1px solid #c6c6c8;box-sizing:border-box"></div><span style="left:945.50px;top:77.11px;font-size:10.5px;line-height:14px;color:#1c1c1e;letter-spacing:-0.901px;">Log*</span><div style="left:812.40px;top:103.80px;width:166.60px;height:20.60px;background:#fff;border:1px solid #e7e7e9;border-radius:5px;box-sizing:border-box"></div><span style="left:823.70px;top:106.42px;font-size:12.5px;line-height:16px;color:#1c1c1e;letter-spacing:-0.331px;">Qblox</span><svg style="left:962.50px;top:109.80px" width="12" height="10" viewBox="0 0 12 10"><path d="M2.8 3.4 L6 6.6 L9.2 3.4" fill="none" stroke="#222" stroke-width="1.4" stroke-linecap="round" stroke-linejoin="round"/></svg><div style="left:812.40px;top:129.20px;width:166.60px;height:52.20px;background:#fff;border:1px solid #e4e4e6;box-sizing:border-box"></div><span style="left:822.40px;top:132.50px;font-size:10px;line-height:13px;color:#1c1c1e;letter-spacing:0.261px;">"range_num": 2,</span><span style="left:822.40px;top:143.90px;font-size:10px;line-height:13px;color:#1c1c1e;letter-spacing:0.309px;">"module": 2,</span><span style="left:822.40px;top:155.30px;font-size:10px;line-height:13px;color:#1c1c1e;letter-spacing:0.267px;">"reset_voltages": false,</span><span style="left:822.40px;top:166.70px;font-size:10px;line-height:13px;color:#1c1c1e;letter-spacing:0.187px;">"num_dacs": 16,</span><div style="left:812.40px;top:186.10px;width:166.60px;height:18.90px;background:#5594f1;border-radius:5px"></div><span style="left:846.17px;top:187.92px;font-size:12px;line-height:16px;color:#fff;letter-spacing:-0.063px;">Create Connection</span><span style="left:812.00px;top:211.10px;font-size:10px;line-height:13px;color:#1c1c1e;letter-spacing:0.031px;">Channels</span><div style="left:808.00px;top:223.50px;width:175.30px;height:302.70px;background:#eff0f2;border-radius:5px;overflow:hidden"><span style="left:9.00px;top:7.10px;font-size:10px;line-height:13px;color:#1c1c1e;letter-spacing:0.219px;">Voltage Range: [0,0]</span><span style="left:8.20px;top:25.21px;font-size:11.5px;line-height:15px;color:#3a8ee6;letter-spacing:-0.020px;">01 :</span><div style="left:33.90px;top:24.80px;width:93.10px;height:15.60px;background:#fff;border-radius:4px"></div><span style="left:106.31px;top:25.21px;font-size:11.5px;line-height:15px;color:#8e8e90;">0.0</span><div style="left:130.80px;top:24.80px;width:31.40px;height:15.60px;background:#ebecee;border-radius:4px"></div><span style="left:137.87px;top:25.21px;font-size:11.5px;line-height:15px;color:#c3c4c6;">Set</span><span style="left:8.20px;top:47.14px;font-size:11.5px;line-height:15px;color:#3a8ee6;letter-spacing:0.355px;">02 :</span><div style="left:35.40px;top:46.72px;width:91.60px;height:15.60px;background:#fff;border-radius:4px"></div><span style="left:106.31px;top:47.14px;font-size:11.5px;line-height:15px;color:#8e8e90;">0.0</span><div style="left:130.80px;top:46.72px;width:31.40px;height:15.60px;background:#ebecee;border-radius:4px"></div><span style="left:137.87px;top:47.14px;font-size:11.5px;line-height:15px;color:#c3c4c6;">Set</span><span style="left:8.20px;top:69.05px;font-size:11.5px;line-height:15px;color:#3a8ee6;letter-spacing:0.530px;">03 :</span><div style="left:36.10px;top:68.64px;width:90.90px;height:15.60px;background:#fff;border-radius:4px"></div><span style="left:106.31px;top:69.05px;font-size:11.5px;line-height:15px;color:#8e8e90;">0.0</span><div style="left:130.80px;top:68.64px;width:31.40px;height:15.60px;background:#ebecee;border-radius:4px"></div><span style="left:137.87px;top:69.05px;font-size:11.5px;line-height:15px;color:#c3c4c6;">Set</span><span style="left:8.20px;top:90.98px;font-size:11.5px;line-height:15px;color:#3a8ee6;letter-spacing:0.580px;">04 :</span><div style="left:36.30px;top:90.56px;width:90.70px;height:15.60px;background:#fff;border-radius:4px"></div><span style="left:106.31px;top:90.98px;font-size:11.5px;line-height:15px;color:#8e8e90;">0.0</span><div style="left:130.80px;top:90.56px;width:31.40px;height:15.60px;background:#ebecee;border-radius:4px"></div><span style="left:137.87px;top:90.98px;font-size:11.5px;line-height:15px;color:#c3c4c6;">Set</span><span style="left:8.20px;top:112.89px;font-size:11.5px;line-height:15px;color:#3a8ee6;letter-spacing:0.505px;">05 :</span><div style="left:36.00px;top:112.48px;width:91.00px;height:15.60px;background:#fff;border-radius:4px"></div><span style="left:106.31px;top:112.89px;font-size:11.5px;line-height:15px;color:#8e8e90;">0.0</span><div style="left:130.80px;top:112.48px;width:31.40px;height:15.60px;background:#ebecee;border-radius:4px"></div><span style="left:137.87px;top:112.89px;font-size:11.5px;line-height:15px;color:#c3c4c6;">Set</span><span style="left:8.20px;top:134.82px;font-size:11.5px;line-height:15px;color:#3a8ee6;letter-spacing:0.555px;">06 :</span><div style="left:36.20px;top:134.40px;width:90.80px;height:15.60px;background:#fff;border-radius:4px"></div><span style="left:106.31px;top:134.82px;font-size:11.5px;line-height:15px;color:#8e8e90;">0.0</span><div style="left:130.80px;top:134.40px;width:31.40px;height:15.60px;background:#ebecee;border-radius:4px"></div><span style="left:137.87px;top:134.82px;font-size:11.5px;line-height:15px;color:#c3c4c6;">Set</span><span style="left:8.20px;top:156.74px;font-size:11.5px;line-height:15px;color:#3a8ee6;letter-spacing:0.305px;">07 :</span><div style="left:35.20px;top:156.32px;width:91.80px;height:15.60px;background:#fff;border-radius:4px"></div><span style="left:106.31px;top:156.74px;font-size:11.5px;line-height:15px;color:#8e8e90;">0.0</span><div style="left:130.80px;top:156.32px;width:31.40px;height:15.60px;background:#ebecee;border-radius:4px"></div><span style="left:137.87px;top:156.74px;font-size:11.5px;line-height:15px;color:#c3c4c6;">Set</span><span style="left:8.20px;top:178.66px;font-size:11.5px;line-height:15px;color:#3a8ee6;letter-spacing:0.555px;">08 :</span><div style="left:36.20px;top:178.24px;width:90.80px;height:15.60px;background:#fff;border-radius:4px"></div><span style="left:106.31px;top:178.66px;font-size:11.5px;line-height:15px;color:#8e8e90;">0.0</span><div style="left:130.80px;top:178.24px;width:31.40px;height:15.60px;background:#ebecee;border-radius:4px"></div><span style="left:137.87px;top:178.66px;font-size:11.5px;line-height:15px;color:#c3c4c6;">Set</span><span style="left:8.20px;top:200.58px;font-size:11.5px;line-height:15px;color:#3a8ee6;letter-spacing:0.555px;">09 :</span><div style="left:36.20px;top:200.16px;width:90.80px;height:15.60px;background:#fff;border-radius:4px"></div><span style="left:106.31px;top:200.58px;font-size:11.5px;line-height:15px;color:#8e8e90;">0.0</span><div style="left:130.80px;top:200.16px;width:31.40px;height:15.60px;background:#ebecee;border-radius:4px"></div><span style="left:137.87px;top:200.58px;font-size:11.5px;line-height:15px;color:#c3c4c6;">Set</span><span style="left:8.20px;top:222.50px;font-size:11.5px;line-height:15px;color:#3a8ee6;letter-spacing:-0.020px;">10 :</span><div style="left:33.90px;top:222.08px;width:93.10px;height:15.60px;background:#fff;border-radius:4px"></div><span style="left:106.31px;top:222.50px;font-size:11.5px;line-height:15px;color:#8e8e90;">0.0</span><div style="left:130.80px;top:222.08px;width:31.40px;height:15.60px;background:#ebecee;border-radius:4px"></div><span style="left:137.87px;top:222.50px;font-size:11.5px;line-height:15px;color:#c3c4c6;">Set</span><span style="left:8.20px;top:244.42px;font-size:11.5px;line-height:15px;color:#3a8ee6;letter-spacing:-0.282px;">11 :</span><div style="left:32.00px;top:244.00px;width:95.00px;height:15.60px;background:#fff;border-radius:4px"></div><span style="left:106.31px;top:244.42px;font-size:11.5px;line-height:15px;color:#8e8e90;">0.0</span><div style="left:130.80px;top:244.00px;width:31.40px;height:15.60px;background:#ebecee;border-radius:4px"></div><span style="left:137.87px;top:244.42px;font-size:11.5px;line-height:15px;color:#c3c4c6;">Set</span><span style="left:8.20px;top:266.34px;font-size:11.5px;line-height:15px;color:#3a8ee6;letter-spacing:-0.095px;">12 :</span><div style="left:33.60px;top:265.92px;width:93.40px;height:15.60px;background:#fff;border-radius:4px"></div><span style="left:106.31px;top:266.34px;font-size:11.5px;line-height:15px;color:#8e8e90;">0.0</span><div style="left:130.80px;top:265.92px;width:31.40px;height:15.60px;background:#ebecee;border-radius:4px"></div><span style="left:137.87px;top:266.34px;font-size:11.5px;line-height:15px;color:#c3c4c6;">Set</span><span style="left:8.20px;top:288.26px;font-size:11.5px;line-height:15px;color:#3a8ee6;">13 :</span><div style="left:34.00px;top:287.84px;width:93.00px;height:15.60px;background:#fff;border-radius:4px"></div><span style="left:106.31px;top:288.26px;font-size:11.5px;line-height:15px;color:#8e8e90;">0.0</span><div style="left:130.80px;top:287.84px;width:31.40px;height:15.60px;background:#ebecee;border-radius:4px"></div><span style="left:137.87px;top:288.26px;font-size:11.5px;line-height:15px;color:#c3c4c6;">Set</span></div><span style="left:812.40px;top:535.20px;font-size:10px;line-height:13px;color:#1c1c1e;letter-spacing:0.149px;">Voltage Config (Sweeps)</span><div style="left:808.00px;top:546.80px;width:175.30px;height:98.00px;background:#eff0f2;border-radius:5px"></div><span style="left:818.97px;top:556.82px;font-size:11.5px;line-height:15px;color:#1c1c1e;">DACs:</span><div style="left:858.20px;top:556.40px;width:112.60px;height:15.40px;background:#fff;border-radius:4px"></div><span style="left:862.60px;top:556.82px;font-size:11.5px;line-height:15px;color:#1c1c1e;">4</span><span style="left:824.72px;top:576.02px;font-size:11.5px;line-height:15px;color:#1c1c1e;">Start:</span><div style="left:858.20px;top:575.60px;width:112.60px;height:15.40px;background:#fff;border-radius:4px"></div><span style="left:862.60px;top:576.02px;font-size:11.5px;line-height:15px;color:#1c1c1e;">0.0</span><span style="left:825.35px;top:595.22px;font-size:11.5px;line-height:15px;color:#1c1c1e;">Stop:</span><div style="left:858.20px;top:594.80px;width:112.60px;height:15.40px;background:#fff;border-radius:4px"></div><span style="left:862.60px;top:595.22px;font-size:11.5px;line-height:15px;color:#1c1c1e;">0.0</span><span style="left:825.99px;top:614.42px;font-size:11.5px;line-height:15px;color:#1c1c1e;">#Pts:</span><div style="left:858.20px;top:614.00px;width:112.60px;height:15.40px;background:#fff;border-radius:4px"></div><span style="left:862.60px;top:614.42px;font-size:11.5px;line-height:15px;color:#1c1c1e;">0</span></div></div></body></html>
